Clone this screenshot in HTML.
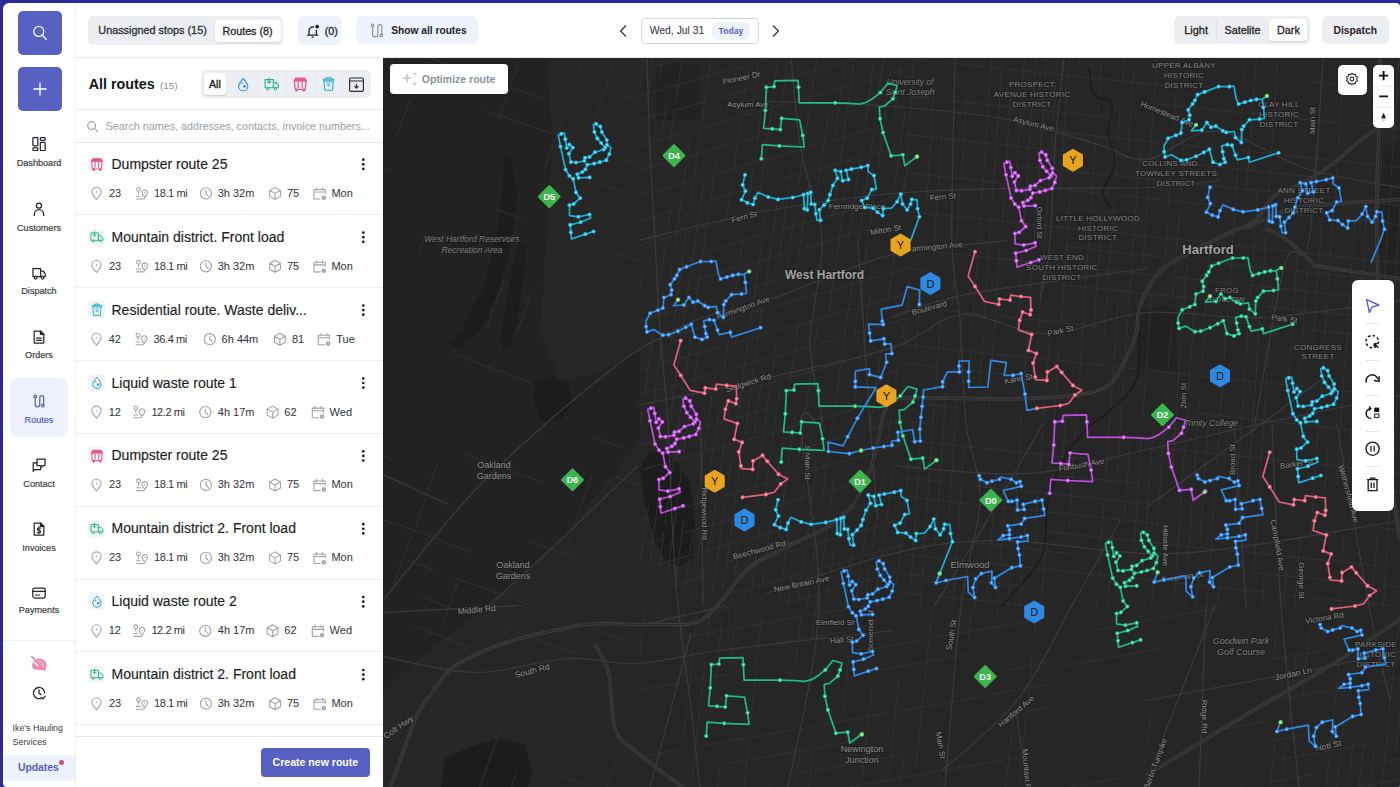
<!DOCTYPE html>
<html><head><meta charset="utf-8"><title>Routes</title>
<style>
html,body{margin:0;padding:0;width:1400px;height:787px;overflow:hidden;background:#2d2997;}
#app{position:absolute;left:2.6px;top:2.6px;width:1397.4px;height:784.4px;background:#fff;border-radius:6px 4px 2px 4px;overflow:hidden;}
#inner{position:absolute;left:-2.6px;top:-2.6px;width:1400px;height:787px;}
.t{position:absolute;white-space:nowrap;line-height:1;font-family:"Liberation Sans", sans-serif;}
.b{position:absolute;}
</style></head><body>
<div id="app"><div id="inner">
<div class="b" style="left:75.00px;top:0.00px;width:1.00px;height:787.00px;background:#eef0f3"></div>
<div class="b" style="left:17.50px;top:11.00px;width:44.00px;height:44.00px;background:#5661c2;border-radius:5px"></div>
<svg class="b" style="left:17.50px;top:11.00px;" width="44" height="44" viewBox="0 0 44 44"><circle cx="20.8" cy="20.4" r="5" fill="none" stroke="#fff" stroke-width="1.3"/><path d="M24.4 24.2 L28.2 28.2" stroke="#fff" stroke-width="1.4" stroke-linecap="round"/></svg>
<div class="b" style="left:17.50px;top:66.50px;width:44.00px;height:44.00px;background:#5661c2;border-radius:5px"></div>
<svg class="b" style="left:17.50px;top:66.50px;" width="44" height="44" viewBox="0 0 44 44"><path d="M22 15.5 V28.5 M15.5 22 H28.5" stroke="#fff" stroke-width="1.3"/></svg>
<svg class="b" style="left:31.80px;top:137.40px;" width="14" height="14" viewBox="0 0 14 14"><g fill="none" stroke="#23262b" stroke-width="1.25" stroke-linejoin="round" stroke-linecap="round"><rect x="0.9" y="0.7" width="4.9" height="8.2" rx="0.8" /><rect x="0.9" y="10.9" width="4.9" height="2.6" rx="0.8"/><rect x="8.3" y="0.7" width="4.9" height="2.6" rx="0.8"/><rect x="8.3" y="5.3" width="4.9" height="8.2" rx="0.8"/></g></svg>
<div class="t" style="left:3px;width:72px;text-align:center;top:159.30px;font-size:9.1px;-webkit-text-stroke:0.2px currentColor;color:#3a3d42">Dashboard</div>
<svg class="b" style="left:31.80px;top:202.00px;" width="14" height="14" viewBox="0 0 14 14"><g fill="none" stroke="#23262b" stroke-width="1.25" stroke-linejoin="round" stroke-linecap="round"><circle cx="7" cy="3.6" r="2.6"/><path d="M2.4 14 V12.3 A4.6 4.6 0 0 1 11.6 12.3 V14"/></g></svg>
<div class="t" style="left:3px;width:72px;text-align:center;top:223.60px;font-size:9.1px;-webkit-text-stroke:0.2px currentColor;color:#3a3d42">Customers</div>
<svg class="b" style="left:31.80px;top:265.50px;" width="14" height="14" viewBox="0 0 14 14"><g fill="none" stroke="#23262b" stroke-width="1.25" stroke-linejoin="round" stroke-linecap="round"><path d="M1 2.5 H8.6 V10.6 H1 Z M8.6 5 H11.2 L13.2 7.6 V10.6 H8.6"/><circle cx="3.6" cy="11.6" r="1.4" fill="#fff"/><circle cx="10.6" cy="11.6" r="1.4" fill="#fff"/></g></svg>
<div class="t" style="left:3px;width:72px;text-align:center;top:287.30px;font-size:9.1px;-webkit-text-stroke:0.2px currentColor;color:#3a3d42">Dispatch</div>
<svg class="b" style="left:31.80px;top:329.80px;" width="14" height="14" viewBox="0 0 14 14"><g fill="none" stroke="#23262b" stroke-width="1.25" stroke-linejoin="round" stroke-linecap="round"><path d="M2.2 1 H8.6 L11.8 4.2 V13 H2.2 Z"/><path d="M8.4 1 V4.4 H11.8" fill="#23262b"/><path d="M4.6 8 H9.4 M4.6 10.4 H9.4"/></g></svg>
<div class="t" style="left:3px;width:72px;text-align:center;top:351.30px;font-size:9.1px;-webkit-text-stroke:0.2px currentColor;color:#3a3d42">Orders</div>
<div class="b" style="left:10.00px;top:378.00px;width:58.00px;height:58.60px;background:#eef2fc;border-radius:8px"></div>
<svg class="b" style="left:31.80px;top:393.70px;" width="14" height="14" viewBox="0 0 14 14"><g fill="none" stroke="#5560c0" stroke-width="1.25" stroke-linejoin="round" stroke-linecap="round"><circle cx="3.2" cy="2.4" r="1.3"/><circle cx="10.8" cy="11.6" r="1.3"/><path d="M3.2 3.7 V10.6 A2.3 2.3 0 0 0 7.8 10.6 V3.4 A1.9 1.9 0 0 1 11.6 3.4 V10.3"/></g></svg>
<div class="t" style="left:3px;width:72px;text-align:center;top:415.90px;font-size:9.1px;-webkit-text-stroke:0.2px currentColor;color:#5560c0">Routes</div>
<svg class="b" style="left:31.80px;top:458.00px;" width="14" height="14" viewBox="0 0 14 14"><g fill="none" stroke="#23262b" stroke-width="1.25" stroke-linejoin="round" stroke-linecap="round"><path d="M5 1 H13 V7.6 H11 L9.2 9.2 V7.6 H5 Z" /><path d="M5 4.8 H1.2 V11.6 V13.2 L3.2 11.6 H8.6 V9.4"/></g></svg>
<div class="t" style="left:3px;width:72px;text-align:center;top:480.30px;font-size:9.1px;-webkit-text-stroke:0.2px currentColor;color:#3a3d42">Contact</div>
<svg class="b" style="left:31.80px;top:522.00px;" width="14" height="14" viewBox="0 0 14 14"><g fill="none" stroke="#23262b" stroke-width="1.25" stroke-linejoin="round" stroke-linecap="round"><path d="M2.2 1 H8.6 L11.8 4.2 V13 H2.2 Z"/><path d="M8.4 1 V4.4 H11.8" fill="#23262b"/><path d="M8.6 6.2 C7.6 5.4 5.2 5.6 5.4 7.1 C5.6 8.6 8.8 8 8.6 9.8 C8.4 11.2 6 11.3 5.2 10.4 M7 4.8 V11.8" stroke-width="1.1"/></g></svg>
<div class="t" style="left:3px;width:72px;text-align:center;top:543.60px;font-size:9.1px;-webkit-text-stroke:0.2px currentColor;color:#3a3d42">Invoices</div>
<svg class="b" style="left:31.80px;top:585.70px;" width="14" height="14" viewBox="0 0 14 14"><g fill="none" stroke="#23262b" stroke-width="1.25" stroke-linejoin="round" stroke-linecap="round"><rect x="0.8" y="2" width="12.4" height="10" rx="2"/><path d="M0.8 5.4 H13.2 M3.4 9 H5 M6.6 9 H7.4"/></g></svg>
<div class="t" style="left:3px;width:72px;text-align:center;top:605.90px;font-size:9.1px;-webkit-text-stroke:0.2px currentColor;color:#3a3d42">Payments</div>
<div class="b" style="left:3.00px;top:639.50px;width:72.00px;height:1.50px;background:#eceff3"></div>
<svg class="b" style="left:29.00px;top:654.00px;" width="20" height="20" viewBox="0 0 20 20"><path d="M4.2 15.2 A7.2 7.2 0 1 1 15.8 16.4 Z" fill="#eb8db1"/><path d="M5 8 L9 12" stroke="#fff" stroke-width="1.2"/><path d="M6 8.6 A5 5 0 0 1 14.6 12.6 M7.8 10.8 A3 3 0 0 1 12.6 13.2" fill="none" stroke="#f8d3e1" stroke-width="0.8"/><path d="M3 3 L16.4 16.6" stroke="#fff" stroke-width="1.6"/><path d="M2.6 2.4 L16 16.4" stroke="#e2558a" stroke-width="1.1" stroke-linecap="round"/></svg>
<svg class="b" style="left:31.50px;top:686.00px;" width="14" height="14" viewBox="0 0 14 14"><g fill="none" stroke="#23262b" stroke-width="1.3" stroke-linecap="round"><path d="M12.6 7 A5.6 5.6 0 1 0 9.2 12.2"/><path d="M7 3.8 V7.2 L9 8.6"/><path d="M9.8 11.6 L11 12.8 L13 10.4"/></g></svg>
<div class="t" style="left:12.60px;top:723.71px;font-size:8.85px;color:#3a3d42;font-weight:400;">Ike&#39;s Hauling</div>
<div class="t" style="left:12.60px;top:737.71px;font-size:8.85px;color:#3a3d42;font-weight:400;">Services</div>
<div class="b" style="left:4.00px;top:754.50px;width:71.00px;height:26.50px;background:#eef2fc"></div>
<div class="t" style="left:17.90px;top:763.20px;font-size:10.4px;color:#5560c0;font-weight:700;">Updates</div>
<div class="b" style="left:58.80px;top:760.10px;width:5.00px;height:5.00px;background:#e24a7c;border-radius:50%"></div>
<div class="b" style="left:76.00px;top:56.60px;width:1324.00px;height:1.20px;background:#e4e7eb"></div>
<div class="b" style="left:88.20px;top:16.40px;width:195.00px;height:28.60px;background:#eceef1;border-radius:5px"></div>
<div class="b" style="left:214.90px;top:19.60px;width:65.90px;height:22.40px;background:#fff;border-radius:4px;box-shadow:0 1px 1.5px rgba(0,0,0,0.12)"></div>
<div class="t" style="left:98.30px;top:25.42px;font-size:10.85px;color:#2b2e33;font-weight:400;-webkit-text-stroke:0.3px currentColor">Unassigned stops (15)</div>
<div class="t" style="left:222.60px;top:25.54px;font-size:10.7px;color:#1f2227;font-weight:400;-webkit-text-stroke:0.3px currentColor">Routes (8)</div>
<div class="b" style="left:298.00px;top:16.30px;width:43.30px;height:28.70px;background:#eef2fc;border-radius:5px"></div>
<svg class="b" style="left:305.00px;top:23.00px;" width="16" height="16" viewBox="0 0 16 16"><g fill="none" stroke="#1f2227" stroke-width="1.3" stroke-linecap="round"><path d="M2.6 12.2 H12.6 M4 12.2 V7.6 A3.7 3.7 0 0 1 8.6 4 M11.4 7.4 V12.2"/><path d="M7.2 14.2 H8.2"/></g><circle cx="12.2" cy="3.6" r="1.9" fill="#1f2227"/></svg>
<div class="t" style="left:324.80px;top:25.54px;font-size:10.7px;color:#1f2227;font-weight:400;-webkit-text-stroke:0.3px currentColor">(0)</div>
<div class="b" style="left:356.30px;top:15.70px;width:122.10px;height:28.30px;background:#eef2fc;border-radius:5px"></div>
<svg class="b" style="left:369.50px;top:22.50px;" width="14" height="15" viewBox="0 0 14 15"><g fill="none" stroke="#8c9097" stroke-width="1.15"><circle cx="2.6" cy="2.4" r="1.3"/><circle cx="11.2" cy="12.4" r="1.3"/><path d="M2.6 3.7 V11.2 A2.6 2.6 0 0 0 7.8 11.2 V3.6 A2 2 0 0 1 11.8 3.6 V11.1" stroke-linecap="round"/></g></svg>
<div class="t" style="left:391.30px;top:25.67px;font-size:10.2px;color:#1f2227;font-weight:700;">Show all routes</div>
<svg class="b" style="left:617.00px;top:24.00px;" width="12" height="14" viewBox="0 0 12 14"><path d="M9 1.6 L3.6 7 L9 12.4" fill="none" stroke="#3a3d42" stroke-width="1.4"/></svg>
<div class="b" style="left:641.40px;top:17.90px;width:117.20px;height:26.00px;border:1.3px solid #d3d8de;border-radius:4px;box-sizing:border-box"></div>
<div class="t" style="left:649.70px;top:25.90px;font-size:10.4px;color:#2b2e33;font-weight:400;">Wed, Jul 31</div>
<div class="b" style="left:712.00px;top:22.00px;width:38.00px;height:17.60px;background:#eef2fc;border-radius:5px"></div>
<div class="t" style="left:718.60px;top:27.02px;font-size:8.6px;color:#5560c0;font-weight:700;">Today</div>
<svg class="b" style="left:770.00px;top:24.00px;" width="12" height="14" viewBox="0 0 12 14"><path d="M3 1.6 L8.4 7 L3 12.4" fill="none" stroke="#3a3d42" stroke-width="1.4"/></svg>
<div class="b" style="left:1174.00px;top:15.60px;width:136.00px;height:28.80px;background:#eceef1;border-radius:5px"></div>
<div class="b" style="left:1216.20px;top:20.00px;width:1.00px;height:20.00px;background:#dfe2e6"></div>
<div class="b" style="left:1269.40px;top:19.00px;width:37.60px;height:22.30px;background:#fff;border-radius:4px;box-shadow:0 1px 1.5px rgba(0,0,0,0.12)"></div>
<div class="t" style="left:1184.30px;top:24.97px;font-size:10.9px;color:#1f2227;font-weight:400;-webkit-text-stroke:0.3px currentColor">Light</div>
<div class="t" style="left:1224.60px;top:25.10px;font-size:10.75px;color:#1f2227;font-weight:400;-webkit-text-stroke:0.3px currentColor">Satelite</div>
<div class="t" style="left:1277.00px;top:25.06px;font-size:10.8px;color:#1f2227;font-weight:400;-webkit-text-stroke:0.3px currentColor">Dark</div>
<div class="b" style="left:1322.00px;top:15.60px;width:67.00px;height:28.80px;background:#eceef1;border-radius:5px"></div>
<div class="t" style="left:1333.50px;top:26.08px;font-size:10.3px;color:#1f2227;font-weight:700;">Dispatch</div>
<div class="t" style="left:88.70px;top:77.10px;font-size:14.3px;color:#15171a;font-weight:700;">All routes</div>
<div class="t" style="left:160.00px;top:81.30px;font-size:9.8px;color:#8a8e95;font-weight:400;">(15)</div>
<div class="b" style="left:201.10px;top:69.50px;width:169.60px;height:28.50px;background:#eceef1;border-radius:5px"></div>
<div class="b" style="left:204.20px;top:72.90px;width:21.80px;height:22.10px;background:#fff;border-radius:4px;box-shadow:0 1px 1.5px rgba(0,0,0,0.14)"></div>
<div class="t" style="left:209.00px;top:79.33px;font-size:10.6px;color:#15171a;font-weight:400;-webkit-text-stroke:0.35px #15171a">All</div>
<div class="b" style="left:257.40px;top:73.00px;width:0.80px;height:22.00px;background:#e3e6ea"></div>
<div class="b" style="left:286.00px;top:73.00px;width:0.80px;height:22.00px;background:#e3e6ea"></div>
<div class="b" style="left:314.50px;top:73.00px;width:0.80px;height:22.00px;background:#e3e6ea"></div>
<div class="b" style="left:342.00px;top:73.00px;width:0.80px;height:22.00px;background:#e3e6ea"></div>
<svg class="b" style="left:0.00px;top:0.00px;pointer-events:none" width="400" height="120" viewBox="0 0 400 120"><g transform="translate(243.2,84.6) scale(1.0)" fill="none" stroke="#2f8fe0" stroke-width="1.1"><path d="M0 -6.2 C2.5 -3.2 4.6 -0.8 4.6 1.6 A4.6 4.6 0 0 1 -4.6 1.6 C-4.6 -0.8 -2.5 -3.2 0 -6.2 Z"/><rect x="0" y="0.6" width="2.6" height="2.4" fill="#2f8fe0" stroke="none"/><circle cx="-1.4" cy="-1.2" r="0.8" fill="#2f8fe0" stroke="none"/></g><g transform="translate(271.7,84.2) scale(1.0)" fill="none" stroke="#20b486" stroke-width="1.1" stroke-linejoin="round"><path d="M-6.6 -4.6 H1.6 V3.6 H-6.6 Z M1.6 -1.6 H4.4 L6.6 1 V3.6 H1.6"/><path d="M-2.6 -6.4 V-1 M-4.4 -2.8 L-2.6 -1 L-0.8 -2.8"/><circle cx="-4" cy="4.4" r="1.1" fill="#fff"/><circle cx="3.8" cy="4.4" r="1.1" fill="#fff"/></g><g transform="translate(300.2,84) scale(1.0)" fill="none" stroke="#e45a8c" stroke-width="1.2" stroke-linejoin="round"><path d="M-6 -3.4 H6 L5 5.4 H-5 Z"/><path d="M-5.8 -3.2 L-4.6 -6 H4.6 L5.8 -3.2 Z" fill="#e45a8c"/><path d="M-2 -2.4 V4 M2 -2.4 V4"/><circle cx="-3.6" cy="6" r="0.9" fill="#e45a8c"/><circle cx="3.6" cy="6" r="0.9" fill="#e45a8c"/></g><g transform="translate(328.6,84.3) scale(1.0)" fill="none" stroke="#1fb0d0" stroke-width="1.1" stroke-linejoin="round"><path d="M-4.6 -3.4 H4.6 L3.8 6 H-3.8 Z"/><path d="M-5.2 -3.4 V-5 H5.2 V-3.4 M-3 -5 L-2.4 -6.6 H2.4 L3 -5"/><path d="M-1.2 1.6 L0 0 L1.2 1.6 Z" stroke-width="0.8"/><path d="M-2.4 -1.2 H2.4" stroke-width="0.8"/></g><g transform="translate(356.5,84.6) scale(1.0)" fill="none" stroke="#2b2e33" stroke-width="1.2" stroke-linejoin="round"><rect x="-6.9" y="-6.6" width="13.8" height="13.4" rx="1.4"/><path d="M-6.9 -3.6 H6.9" /><path d="M0 -0.6 V3.6 M-2 1.6 L0 3.6 L2 1.6"/></g></svg>
<div class="b" style="left:76.00px;top:109.00px;width:307.00px;height:1.20px;background:#e6e9ed"></div>
<svg class="b" style="left:86.00px;top:120.00px;" width="14" height="14" viewBox="0 0 14 14"><g fill="none" stroke="#9a9ea5" stroke-width="1.2"><circle cx="5.6" cy="5.6" r="3.9"/><path d="M8.4 8.4 L11.4 11.4" stroke-linecap="round"/></g></svg>
<div class="t" style="left:105.70px;top:120.90px;font-size:10.75px;color:#9a9ea5;font-weight:400;">Search names, addresses, contacts, invoice numbers...</div>
<div class="b" style="left:76.00px;top:141.80px;width:307.00px;height:1.20px;background:#e2e6ea"></div>
<div class="b" style="left:88.20px;top:155.60px;width:17.00px;height:17.00px;background:#f3f5f8;border-radius:4px"></div>
<div class="t" style="left:111.50px;top:156.85px;font-size:14px;color:#1b1d21;font-weight:400;-webkit-text-stroke:0.15px #1b1d21">Dumpster route 25</div>
<div class="t" style="left:109.00px;top:187.89px;font-size:11px;color:#2f3237;font-weight:400;">23</div>
<div class="t" style="left:154.00px;top:187.89px;font-size:11px;color:#2f3237;font-weight:400;letter-spacing:-0.4px">18.1 mi</div>
<div class="t" style="left:217.70px;top:187.89px;font-size:11px;color:#2f3237;font-weight:400;">3h 32m</div>
<div class="t" style="left:287.00px;top:187.89px;font-size:11px;color:#2f3237;font-weight:400;">75</div>
<div class="t" style="left:331.40px;top:187.89px;font-size:11px;color:#2f3237;font-weight:400;">Mon</div>
<div class="b" style="left:76.00px;top:214.00px;width:307.00px;height:1.00px;background:#eef0f3"></div>
<div class="b" style="left:88.20px;top:228.50px;width:17.00px;height:17.00px;background:#f3f5f8;border-radius:4px"></div>
<div class="t" style="left:111.50px;top:229.75px;font-size:14px;color:#1b1d21;font-weight:400;-webkit-text-stroke:0.15px #1b1d21">Mountain district. Front load</div>
<div class="t" style="left:109.00px;top:260.79px;font-size:11px;color:#2f3237;font-weight:400;">23</div>
<div class="t" style="left:154.00px;top:260.79px;font-size:11px;color:#2f3237;font-weight:400;letter-spacing:-0.4px">18.1 mi</div>
<div class="t" style="left:217.70px;top:260.79px;font-size:11px;color:#2f3237;font-weight:400;">3h 32m</div>
<div class="t" style="left:287.00px;top:260.79px;font-size:11px;color:#2f3237;font-weight:400;">75</div>
<div class="t" style="left:331.40px;top:260.79px;font-size:11px;color:#2f3237;font-weight:400;">Mon</div>
<div class="b" style="left:76.00px;top:286.90px;width:307.00px;height:1.00px;background:#eef0f3"></div>
<div class="b" style="left:88.20px;top:301.40px;width:17.00px;height:17.00px;background:#f3f5f8;border-radius:4px"></div>
<div class="t" style="left:111.50px;top:302.65px;font-size:14px;color:#1b1d21;font-weight:400;-webkit-text-stroke:0.15px #1b1d21">Residential route. Waste deliv...</div>
<div class="t" style="left:108.70px;top:333.69px;font-size:11px;color:#2f3237;font-weight:400;">42</div>
<div class="t" style="left:153.60px;top:333.69px;font-size:11px;color:#2f3237;font-weight:400;letter-spacing:-0.4px">36.4 mi</div>
<div class="t" style="left:221.60px;top:333.69px;font-size:11px;color:#2f3237;font-weight:400;">6h 44m</div>
<div class="t" style="left:292.00px;top:333.69px;font-size:11px;color:#2f3237;font-weight:400;">81</div>
<div class="t" style="left:336.30px;top:333.69px;font-size:11px;color:#2f3237;font-weight:400;">Tue</div>
<div class="b" style="left:76.00px;top:359.80px;width:307.00px;height:1.00px;background:#eef0f3"></div>
<div class="b" style="left:88.20px;top:374.30px;width:17.00px;height:17.00px;background:#f3f5f8;border-radius:4px"></div>
<div class="t" style="left:111.50px;top:375.55px;font-size:14px;color:#1b1d21;font-weight:400;-webkit-text-stroke:0.15px #1b1d21">Liquid waste route 1</div>
<div class="t" style="left:108.70px;top:406.59px;font-size:11px;color:#2f3237;font-weight:400;">12</div>
<div class="t" style="left:151.40px;top:406.59px;font-size:11px;color:#2f3237;font-weight:400;letter-spacing:-0.4px">12.2 mi</div>
<div class="t" style="left:217.80px;top:406.59px;font-size:11px;color:#2f3237;font-weight:400;">4h 17m</div>
<div class="t" style="left:284.30px;top:406.59px;font-size:11px;color:#2f3237;font-weight:400;">62</div>
<div class="t" style="left:329.60px;top:406.59px;font-size:11px;color:#2f3237;font-weight:400;">Wed</div>
<div class="b" style="left:76.00px;top:432.70px;width:307.00px;height:1.00px;background:#eef0f3"></div>
<div class="b" style="left:88.20px;top:447.20px;width:17.00px;height:17.00px;background:#f3f5f8;border-radius:4px"></div>
<div class="t" style="left:111.50px;top:448.45px;font-size:14px;color:#1b1d21;font-weight:400;-webkit-text-stroke:0.15px #1b1d21">Dumpster route 25</div>
<div class="t" style="left:109.00px;top:479.49px;font-size:11px;color:#2f3237;font-weight:400;">23</div>
<div class="t" style="left:154.00px;top:479.49px;font-size:11px;color:#2f3237;font-weight:400;letter-spacing:-0.4px">18.1 mi</div>
<div class="t" style="left:217.70px;top:479.49px;font-size:11px;color:#2f3237;font-weight:400;">3h 32m</div>
<div class="t" style="left:287.00px;top:479.49px;font-size:11px;color:#2f3237;font-weight:400;">75</div>
<div class="t" style="left:331.40px;top:479.49px;font-size:11px;color:#2f3237;font-weight:400;">Mon</div>
<div class="b" style="left:76.00px;top:505.60px;width:307.00px;height:1.00px;background:#eef0f3"></div>
<div class="b" style="left:88.20px;top:520.10px;width:17.00px;height:17.00px;background:#f3f5f8;border-radius:4px"></div>
<div class="t" style="left:111.50px;top:521.35px;font-size:14px;color:#1b1d21;font-weight:400;-webkit-text-stroke:0.15px #1b1d21">Mountain district 2. Front load</div>
<div class="t" style="left:109.00px;top:552.39px;font-size:11px;color:#2f3237;font-weight:400;">23</div>
<div class="t" style="left:154.00px;top:552.39px;font-size:11px;color:#2f3237;font-weight:400;letter-spacing:-0.4px">18.1 mi</div>
<div class="t" style="left:217.70px;top:552.39px;font-size:11px;color:#2f3237;font-weight:400;">3h 32m</div>
<div class="t" style="left:287.00px;top:552.39px;font-size:11px;color:#2f3237;font-weight:400;">75</div>
<div class="t" style="left:331.40px;top:552.39px;font-size:11px;color:#2f3237;font-weight:400;">Mon</div>
<div class="b" style="left:76.00px;top:578.50px;width:307.00px;height:1.00px;background:#eef0f3"></div>
<div class="b" style="left:88.20px;top:593.00px;width:17.00px;height:17.00px;background:#f3f5f8;border-radius:4px"></div>
<div class="t" style="left:111.50px;top:594.25px;font-size:14px;color:#1b1d21;font-weight:400;-webkit-text-stroke:0.15px #1b1d21">Liquid waste route 2</div>
<div class="t" style="left:108.70px;top:625.29px;font-size:11px;color:#2f3237;font-weight:400;">12</div>
<div class="t" style="left:151.40px;top:625.29px;font-size:11px;color:#2f3237;font-weight:400;letter-spacing:-0.4px">12.2 mi</div>
<div class="t" style="left:217.80px;top:625.29px;font-size:11px;color:#2f3237;font-weight:400;">4h 17m</div>
<div class="t" style="left:284.30px;top:625.29px;font-size:11px;color:#2f3237;font-weight:400;">62</div>
<div class="t" style="left:329.60px;top:625.29px;font-size:11px;color:#2f3237;font-weight:400;">Wed</div>
<div class="b" style="left:76.00px;top:651.40px;width:307.00px;height:1.00px;background:#eef0f3"></div>
<div class="b" style="left:88.20px;top:665.90px;width:17.00px;height:17.00px;background:#f3f5f8;border-radius:4px"></div>
<div class="t" style="left:111.50px;top:667.15px;font-size:14px;color:#1b1d21;font-weight:400;-webkit-text-stroke:0.15px #1b1d21">Mountain district 2. Front load</div>
<div class="t" style="left:109.00px;top:698.19px;font-size:11px;color:#2f3237;font-weight:400;">23</div>
<div class="t" style="left:154.00px;top:698.19px;font-size:11px;color:#2f3237;font-weight:400;letter-spacing:-0.4px">18.1 mi</div>
<div class="t" style="left:217.70px;top:698.19px;font-size:11px;color:#2f3237;font-weight:400;">3h 32m</div>
<div class="t" style="left:287.00px;top:698.19px;font-size:11px;color:#2f3237;font-weight:400;">75</div>
<div class="t" style="left:331.40px;top:698.19px;font-size:11px;color:#2f3237;font-weight:400;">Mon</div>
<svg class="b" style="left:0.00px;top:0.00px;pointer-events:none" width="400" height="787" viewBox="0 0 400 787"><g transform="translate(96.9,164.20000000000002) scale(0.9)" fill="none" stroke="#e45a8c" stroke-width="1.2" stroke-linejoin="round"><path d="M-6 -3.4 H6 L5 5.4 H-5 Z"/><path d="M-5.8 -3.2 L-4.6 -6 H4.6 L5.8 -3.2 Z" fill="#e45a8c"/><path d="M-2 -2.4 V4 M2 -2.4 V4"/><circle cx="-3.6" cy="6" r="0.9" fill="#e45a8c"/><circle cx="3.6" cy="6" r="0.9" fill="#e45a8c"/></g><circle cx="363.3" cy="159.70" r="1.35" fill="#1b1d21"/><circle cx="363.3" cy="164.30" r="1.35" fill="#1b1d21"/><circle cx="363.3" cy="168.90" r="1.35" fill="#1b1d21"/><g transform="translate(96.5,193.4)" fill="none" stroke="#9da2a9" stroke-width="1.1"><path d="M0 6 C-2.6 3.2 -4.6 0.8 -4.6 -1.4 A4.6 4.6 0 0 1 4.6 -1.4 C4.6 0.8 2.6 3.2 0 6 Z"/><circle cx="0" cy="-1.4" r="0.8" fill="#9da2a9" stroke="none"/></g><g transform="translate(141.7,193.4)" fill="none" stroke="#9da2a9" stroke-width="1.05"><circle cx="-3.2" cy="-4" r="1.9"/><path d="M-3.2 -2.1 V1"/><path d="M3 4.2 C1.4 2.4 0.2 1 0.2 -0.6 A2.8 2.8 0 0 1 5.8 -0.6 C5.8 1 4.6 2.4 3 4.2 Z"/><circle cx="3" cy="-0.6" r="0.7" fill="#9da2a9" stroke="none"/><path d="M-5.6 2.8 H-1 M-5.6 5.6 H3"/></g><g transform="translate(205.9,193.4)" fill="none" stroke="#9da2a9" stroke-width="1.1"><circle r="5.6"/><path d="M0 -3.4 V0 L2.4 2.4" stroke-linecap="round"/></g><g transform="translate(275.1,193.4)" fill="none" stroke="#9da2a9" stroke-width="1.05" stroke-linejoin="round"><path d="M0 -6 L5.4 -3 V3 L0 6 L-5.4 3 V-3 Z M-5.4 -3 L0 0 L5.4 -3 M0 0 V6"/></g><g transform="translate(319.59999999999997,193.4)" fill="none" stroke="#9da2a9" stroke-width="1.05"><path d="M1 5.6 H-5.6 V-4 H5.6 V0.6"/><path d="M-5.6 -1.4 H5.6 M-3 -6 V-3 M3 -6 V-3"/><circle cx="4.2" cy="4.4" r="2.3" fill="#9da2a9" stroke="none"/><path d="M4.2 3.4 V4.6 H5" stroke="#fff" stroke-width="0.6"/></g><g transform="translate(96.9,237.10000000000002) scale(0.9)" fill="none" stroke="#20b486" stroke-width="1.1" stroke-linejoin="round"><path d="M-6.6 -4.6 H1.6 V3.6 H-6.6 Z M1.6 -1.6 H4.4 L6.6 1 V3.6 H1.6"/><path d="M-2.6 -6.4 V-1 M-4.4 -2.8 L-2.6 -1 L-0.8 -2.8"/><circle cx="-4" cy="4.4" r="1.1" fill="#fff"/><circle cx="3.8" cy="4.4" r="1.1" fill="#fff"/></g><circle cx="363.3" cy="232.60" r="1.35" fill="#1b1d21"/><circle cx="363.3" cy="237.20" r="1.35" fill="#1b1d21"/><circle cx="363.3" cy="241.80" r="1.35" fill="#1b1d21"/><g transform="translate(96.5,266.3)" fill="none" stroke="#9da2a9" stroke-width="1.1"><path d="M0 6 C-2.6 3.2 -4.6 0.8 -4.6 -1.4 A4.6 4.6 0 0 1 4.6 -1.4 C4.6 0.8 2.6 3.2 0 6 Z"/><circle cx="0" cy="-1.4" r="0.8" fill="#9da2a9" stroke="none"/></g><g transform="translate(141.7,266.3)" fill="none" stroke="#9da2a9" stroke-width="1.05"><circle cx="-3.2" cy="-4" r="1.9"/><path d="M-3.2 -2.1 V1"/><path d="M3 4.2 C1.4 2.4 0.2 1 0.2 -0.6 A2.8 2.8 0 0 1 5.8 -0.6 C5.8 1 4.6 2.4 3 4.2 Z"/><circle cx="3" cy="-0.6" r="0.7" fill="#9da2a9" stroke="none"/><path d="M-5.6 2.8 H-1 M-5.6 5.6 H3"/></g><g transform="translate(205.9,266.3)" fill="none" stroke="#9da2a9" stroke-width="1.1"><circle r="5.6"/><path d="M0 -3.4 V0 L2.4 2.4" stroke-linecap="round"/></g><g transform="translate(275.1,266.3)" fill="none" stroke="#9da2a9" stroke-width="1.05" stroke-linejoin="round"><path d="M0 -6 L5.4 -3 V3 L0 6 L-5.4 3 V-3 Z M-5.4 -3 L0 0 L5.4 -3 M0 0 V6"/></g><g transform="translate(319.59999999999997,266.3)" fill="none" stroke="#9da2a9" stroke-width="1.05"><path d="M1 5.6 H-5.6 V-4 H5.6 V0.6"/><path d="M-5.6 -1.4 H5.6 M-3 -6 V-3 M3 -6 V-3"/><circle cx="4.2" cy="4.4" r="2.3" fill="#9da2a9" stroke="none"/><path d="M4.2 3.4 V4.6 H5" stroke="#fff" stroke-width="0.6"/></g><g transform="translate(96.9,310.00000000000006) scale(0.9)" fill="none" stroke="#1fb0d0" stroke-width="1.1" stroke-linejoin="round"><path d="M-4.6 -3.4 H4.6 L3.8 6 H-3.8 Z"/><path d="M-5.2 -3.4 V-5 H5.2 V-3.4 M-3 -5 L-2.4 -6.6 H2.4 L3 -5"/><path d="M-1.2 1.6 L0 0 L1.2 1.6 Z" stroke-width="0.8"/><path d="M-2.4 -1.2 H2.4" stroke-width="0.8"/></g><circle cx="363.3" cy="305.50" r="1.35" fill="#1b1d21"/><circle cx="363.3" cy="310.10" r="1.35" fill="#1b1d21"/><circle cx="363.3" cy="314.70" r="1.35" fill="#1b1d21"/><g transform="translate(96.5,339.20000000000005)" fill="none" stroke="#9da2a9" stroke-width="1.1"><path d="M0 6 C-2.6 3.2 -4.6 0.8 -4.6 -1.4 A4.6 4.6 0 0 1 4.6 -1.4 C4.6 0.8 2.6 3.2 0 6 Z"/><circle cx="0" cy="-1.4" r="0.8" fill="#9da2a9" stroke="none"/></g><g transform="translate(141.2,339.20000000000005)" fill="none" stroke="#9da2a9" stroke-width="1.05"><circle cx="-3.2" cy="-4" r="1.9"/><path d="M-3.2 -2.1 V1"/><path d="M3 4.2 C1.4 2.4 0.2 1 0.2 -0.6 A2.8 2.8 0 0 1 5.8 -0.6 C5.8 1 4.6 2.4 3 4.2 Z"/><circle cx="3" cy="-0.6" r="0.7" fill="#9da2a9" stroke="none"/><path d="M-5.6 2.8 H-1 M-5.6 5.6 H3"/></g><g transform="translate(209.8,339.20000000000005)" fill="none" stroke="#9da2a9" stroke-width="1.1"><circle r="5.6"/><path d="M0 -3.4 V0 L2.4 2.4" stroke-linecap="round"/></g><g transform="translate(279.90000000000003,339.20000000000005)" fill="none" stroke="#9da2a9" stroke-width="1.05" stroke-linejoin="round"><path d="M0 -6 L5.4 -3 V3 L0 6 L-5.4 3 V-3 Z M-5.4 -3 L0 0 L5.4 -3 M0 0 V6"/></g><g transform="translate(323.9,339.20000000000005)" fill="none" stroke="#9da2a9" stroke-width="1.05"><path d="M1 5.6 H-5.6 V-4 H5.6 V0.6"/><path d="M-5.6 -1.4 H5.6 M-3 -6 V-3 M3 -6 V-3"/><circle cx="4.2" cy="4.4" r="2.3" fill="#9da2a9" stroke="none"/><path d="M4.2 3.4 V4.6 H5" stroke="#fff" stroke-width="0.6"/></g><g transform="translate(96.9,382.90000000000003) scale(0.9)" fill="none" stroke="#2f8fe0" stroke-width="1.1"><path d="M0 -6.2 C2.5 -3.2 4.6 -0.8 4.6 1.6 A4.6 4.6 0 0 1 -4.6 1.6 C-4.6 -0.8 -2.5 -3.2 0 -6.2 Z"/><rect x="0" y="0.6" width="2.6" height="2.4" fill="#2f8fe0" stroke="none"/><circle cx="-1.4" cy="-1.2" r="0.8" fill="#2f8fe0" stroke="none"/></g><circle cx="363.3" cy="378.40" r="1.35" fill="#1b1d21"/><circle cx="363.3" cy="383.00" r="1.35" fill="#1b1d21"/><circle cx="363.3" cy="387.60" r="1.35" fill="#1b1d21"/><g transform="translate(96.5,412.1)" fill="none" stroke="#9da2a9" stroke-width="1.1"><path d="M0 6 C-2.6 3.2 -4.6 0.8 -4.6 -1.4 A4.6 4.6 0 0 1 4.6 -1.4 C4.6 0.8 2.6 3.2 0 6 Z"/><circle cx="0" cy="-1.4" r="0.8" fill="#9da2a9" stroke="none"/></g><g transform="translate(139,412.1)" fill="none" stroke="#9da2a9" stroke-width="1.05"><circle cx="-3.2" cy="-4" r="1.9"/><path d="M-3.2 -2.1 V1"/><path d="M3 4.2 C1.4 2.4 0.2 1 0.2 -0.6 A2.8 2.8 0 0 1 5.8 -0.6 C5.8 1 4.6 2.4 3 4.2 Z"/><circle cx="3" cy="-0.6" r="0.7" fill="#9da2a9" stroke="none"/><path d="M-5.6 2.8 H-1 M-5.6 5.6 H3"/></g><g transform="translate(205.3,412.1)" fill="none" stroke="#9da2a9" stroke-width="1.1"><circle r="5.6"/><path d="M0 -3.4 V0 L2.4 2.4" stroke-linecap="round"/></g><g transform="translate(272.6,412.1)" fill="none" stroke="#9da2a9" stroke-width="1.05" stroke-linejoin="round"><path d="M0 -6 L5.4 -3 V3 L0 6 L-5.4 3 V-3 Z M-5.4 -3 L0 0 L5.4 -3 M0 0 V6"/></g><g transform="translate(317.9,412.1)" fill="none" stroke="#9da2a9" stroke-width="1.05"><path d="M1 5.6 H-5.6 V-4 H5.6 V0.6"/><path d="M-5.6 -1.4 H5.6 M-3 -6 V-3 M3 -6 V-3"/><circle cx="4.2" cy="4.4" r="2.3" fill="#9da2a9" stroke="none"/><path d="M4.2 3.4 V4.6 H5" stroke="#fff" stroke-width="0.6"/></g><g transform="translate(96.9,455.8) scale(0.9)" fill="none" stroke="#e45a8c" stroke-width="1.2" stroke-linejoin="round"><path d="M-6 -3.4 H6 L5 5.4 H-5 Z"/><path d="M-5.8 -3.2 L-4.6 -6 H4.6 L5.8 -3.2 Z" fill="#e45a8c"/><path d="M-2 -2.4 V4 M2 -2.4 V4"/><circle cx="-3.6" cy="6" r="0.9" fill="#e45a8c"/><circle cx="3.6" cy="6" r="0.9" fill="#e45a8c"/></g><circle cx="363.3" cy="451.30" r="1.35" fill="#1b1d21"/><circle cx="363.3" cy="455.90" r="1.35" fill="#1b1d21"/><circle cx="363.3" cy="460.50" r="1.35" fill="#1b1d21"/><g transform="translate(96.5,485.0)" fill="none" stroke="#9da2a9" stroke-width="1.1"><path d="M0 6 C-2.6 3.2 -4.6 0.8 -4.6 -1.4 A4.6 4.6 0 0 1 4.6 -1.4 C4.6 0.8 2.6 3.2 0 6 Z"/><circle cx="0" cy="-1.4" r="0.8" fill="#9da2a9" stroke="none"/></g><g transform="translate(141.7,485.0)" fill="none" stroke="#9da2a9" stroke-width="1.05"><circle cx="-3.2" cy="-4" r="1.9"/><path d="M-3.2 -2.1 V1"/><path d="M3 4.2 C1.4 2.4 0.2 1 0.2 -0.6 A2.8 2.8 0 0 1 5.8 -0.6 C5.8 1 4.6 2.4 3 4.2 Z"/><circle cx="3" cy="-0.6" r="0.7" fill="#9da2a9" stroke="none"/><path d="M-5.6 2.8 H-1 M-5.6 5.6 H3"/></g><g transform="translate(205.9,485.0)" fill="none" stroke="#9da2a9" stroke-width="1.1"><circle r="5.6"/><path d="M0 -3.4 V0 L2.4 2.4" stroke-linecap="round"/></g><g transform="translate(275.1,485.0)" fill="none" stroke="#9da2a9" stroke-width="1.05" stroke-linejoin="round"><path d="M0 -6 L5.4 -3 V3 L0 6 L-5.4 3 V-3 Z M-5.4 -3 L0 0 L5.4 -3 M0 0 V6"/></g><g transform="translate(319.59999999999997,485.0)" fill="none" stroke="#9da2a9" stroke-width="1.05"><path d="M1 5.6 H-5.6 V-4 H5.6 V0.6"/><path d="M-5.6 -1.4 H5.6 M-3 -6 V-3 M3 -6 V-3"/><circle cx="4.2" cy="4.4" r="2.3" fill="#9da2a9" stroke="none"/><path d="M4.2 3.4 V4.6 H5" stroke="#fff" stroke-width="0.6"/></g><g transform="translate(96.9,528.6999999999999) scale(0.9)" fill="none" stroke="#20b486" stroke-width="1.1" stroke-linejoin="round"><path d="M-6.6 -4.6 H1.6 V3.6 H-6.6 Z M1.6 -1.6 H4.4 L6.6 1 V3.6 H1.6"/><path d="M-2.6 -6.4 V-1 M-4.4 -2.8 L-2.6 -1 L-0.8 -2.8"/><circle cx="-4" cy="4.4" r="1.1" fill="#fff"/><circle cx="3.8" cy="4.4" r="1.1" fill="#fff"/></g><circle cx="363.3" cy="524.20" r="1.35" fill="#1b1d21"/><circle cx="363.3" cy="528.80" r="1.35" fill="#1b1d21"/><circle cx="363.3" cy="533.40" r="1.35" fill="#1b1d21"/><g transform="translate(96.5,557.9)" fill="none" stroke="#9da2a9" stroke-width="1.1"><path d="M0 6 C-2.6 3.2 -4.6 0.8 -4.6 -1.4 A4.6 4.6 0 0 1 4.6 -1.4 C4.6 0.8 2.6 3.2 0 6 Z"/><circle cx="0" cy="-1.4" r="0.8" fill="#9da2a9" stroke="none"/></g><g transform="translate(141.7,557.9)" fill="none" stroke="#9da2a9" stroke-width="1.05"><circle cx="-3.2" cy="-4" r="1.9"/><path d="M-3.2 -2.1 V1"/><path d="M3 4.2 C1.4 2.4 0.2 1 0.2 -0.6 A2.8 2.8 0 0 1 5.8 -0.6 C5.8 1 4.6 2.4 3 4.2 Z"/><circle cx="3" cy="-0.6" r="0.7" fill="#9da2a9" stroke="none"/><path d="M-5.6 2.8 H-1 M-5.6 5.6 H3"/></g><g transform="translate(205.9,557.9)" fill="none" stroke="#9da2a9" stroke-width="1.1"><circle r="5.6"/><path d="M0 -3.4 V0 L2.4 2.4" stroke-linecap="round"/></g><g transform="translate(275.1,557.9)" fill="none" stroke="#9da2a9" stroke-width="1.05" stroke-linejoin="round"><path d="M0 -6 L5.4 -3 V3 L0 6 L-5.4 3 V-3 Z M-5.4 -3 L0 0 L5.4 -3 M0 0 V6"/></g><g transform="translate(319.59999999999997,557.9)" fill="none" stroke="#9da2a9" stroke-width="1.05"><path d="M1 5.6 H-5.6 V-4 H5.6 V0.6"/><path d="M-5.6 -1.4 H5.6 M-3 -6 V-3 M3 -6 V-3"/><circle cx="4.2" cy="4.4" r="2.3" fill="#9da2a9" stroke="none"/><path d="M4.2 3.4 V4.6 H5" stroke="#fff" stroke-width="0.6"/></g><g transform="translate(96.9,601.6) scale(0.9)" fill="none" stroke="#2f8fe0" stroke-width="1.1"><path d="M0 -6.2 C2.5 -3.2 4.6 -0.8 4.6 1.6 A4.6 4.6 0 0 1 -4.6 1.6 C-4.6 -0.8 -2.5 -3.2 0 -6.2 Z"/><rect x="0" y="0.6" width="2.6" height="2.4" fill="#2f8fe0" stroke="none"/><circle cx="-1.4" cy="-1.2" r="0.8" fill="#2f8fe0" stroke="none"/></g><circle cx="363.3" cy="597.10" r="1.35" fill="#1b1d21"/><circle cx="363.3" cy="601.70" r="1.35" fill="#1b1d21"/><circle cx="363.3" cy="606.30" r="1.35" fill="#1b1d21"/><g transform="translate(96.5,630.8000000000001)" fill="none" stroke="#9da2a9" stroke-width="1.1"><path d="M0 6 C-2.6 3.2 -4.6 0.8 -4.6 -1.4 A4.6 4.6 0 0 1 4.6 -1.4 C4.6 0.8 2.6 3.2 0 6 Z"/><circle cx="0" cy="-1.4" r="0.8" fill="#9da2a9" stroke="none"/></g><g transform="translate(139,630.8000000000001)" fill="none" stroke="#9da2a9" stroke-width="1.05"><circle cx="-3.2" cy="-4" r="1.9"/><path d="M-3.2 -2.1 V1"/><path d="M3 4.2 C1.4 2.4 0.2 1 0.2 -0.6 A2.8 2.8 0 0 1 5.8 -0.6 C5.8 1 4.6 2.4 3 4.2 Z"/><circle cx="3" cy="-0.6" r="0.7" fill="#9da2a9" stroke="none"/><path d="M-5.6 2.8 H-1 M-5.6 5.6 H3"/></g><g transform="translate(205.3,630.8000000000001)" fill="none" stroke="#9da2a9" stroke-width="1.1"><circle r="5.6"/><path d="M0 -3.4 V0 L2.4 2.4" stroke-linecap="round"/></g><g transform="translate(272.6,630.8000000000001)" fill="none" stroke="#9da2a9" stroke-width="1.05" stroke-linejoin="round"><path d="M0 -6 L5.4 -3 V3 L0 6 L-5.4 3 V-3 Z M-5.4 -3 L0 0 L5.4 -3 M0 0 V6"/></g><g transform="translate(317.9,630.8000000000001)" fill="none" stroke="#9da2a9" stroke-width="1.05"><path d="M1 5.6 H-5.6 V-4 H5.6 V0.6"/><path d="M-5.6 -1.4 H5.6 M-3 -6 V-3 M3 -6 V-3"/><circle cx="4.2" cy="4.4" r="2.3" fill="#9da2a9" stroke="none"/><path d="M4.2 3.4 V4.6 H5" stroke="#fff" stroke-width="0.6"/></g><g transform="translate(96.9,674.5) scale(0.9)" fill="none" stroke="#20b486" stroke-width="1.1" stroke-linejoin="round"><path d="M-6.6 -4.6 H1.6 V3.6 H-6.6 Z M1.6 -1.6 H4.4 L6.6 1 V3.6 H1.6"/><path d="M-2.6 -6.4 V-1 M-4.4 -2.8 L-2.6 -1 L-0.8 -2.8"/><circle cx="-4" cy="4.4" r="1.1" fill="#fff"/><circle cx="3.8" cy="4.4" r="1.1" fill="#fff"/></g><circle cx="363.3" cy="670.00" r="1.35" fill="#1b1d21"/><circle cx="363.3" cy="674.60" r="1.35" fill="#1b1d21"/><circle cx="363.3" cy="679.20" r="1.35" fill="#1b1d21"/><g transform="translate(96.5,703.7)" fill="none" stroke="#9da2a9" stroke-width="1.1"><path d="M0 6 C-2.6 3.2 -4.6 0.8 -4.6 -1.4 A4.6 4.6 0 0 1 4.6 -1.4 C4.6 0.8 2.6 3.2 0 6 Z"/><circle cx="0" cy="-1.4" r="0.8" fill="#9da2a9" stroke="none"/></g><g transform="translate(141.7,703.7)" fill="none" stroke="#9da2a9" stroke-width="1.05"><circle cx="-3.2" cy="-4" r="1.9"/><path d="M-3.2 -2.1 V1"/><path d="M3 4.2 C1.4 2.4 0.2 1 0.2 -0.6 A2.8 2.8 0 0 1 5.8 -0.6 C5.8 1 4.6 2.4 3 4.2 Z"/><circle cx="3" cy="-0.6" r="0.7" fill="#9da2a9" stroke="none"/><path d="M-5.6 2.8 H-1 M-5.6 5.6 H3"/></g><g transform="translate(205.9,703.7)" fill="none" stroke="#9da2a9" stroke-width="1.1"><circle r="5.6"/><path d="M0 -3.4 V0 L2.4 2.4" stroke-linecap="round"/></g><g transform="translate(275.1,703.7)" fill="none" stroke="#9da2a9" stroke-width="1.05" stroke-linejoin="round"><path d="M0 -6 L5.4 -3 V3 L0 6 L-5.4 3 V-3 Z M-5.4 -3 L0 0 L5.4 -3 M0 0 V6"/></g><g transform="translate(319.59999999999997,703.7)" fill="none" stroke="#9da2a9" stroke-width="1.05"><path d="M1 5.6 H-5.6 V-4 H5.6 V0.6"/><path d="M-5.6 -1.4 H5.6 M-3 -6 V-3 M3 -6 V-3"/><circle cx="4.2" cy="4.4" r="2.3" fill="#9da2a9" stroke="none"/><path d="M4.2 3.4 V4.6 H5" stroke="#fff" stroke-width="0.6"/></g></svg>
<div class="b" style="left:76.00px;top:724.00px;width:307.00px;height:1.00px;background:#eef0f3"></div>
<div class="b" style="left:76.00px;top:735.60px;width:307.00px;height:1.20px;background:#e2e6ea"></div>
<div class="b" style="left:260.60px;top:748.30px;width:109.20px;height:28.40px;background:#5560c0;border-radius:4px"></div>
<div class="t" style="left:272.60px;top:756.97px;font-size:10.55px;color:#ffffff;font-weight:700;">Create new route</div>
<svg class="b" style="left:383px;top:57.5px" width="1017" height="730" viewBox="383 57.5 1017 730">
<rect x="383" y="57.5" width="1017" height="730" fill="#272627"/>
<polygon points="383,57.5 548,57.5 552,150 545,260 540,330 560,380 600,372 640,350 640,440 560,540 488,606 430,650 383,690" fill="#232223"/>
<polygon points="656,64 701,64 701,120 656,120" fill="#232223"/>
<polygon points="1133,306 1175,306 1177,371 1140,371" fill="#232223"/>
<polygon points="1375,149 1400,140 1400,280 1380,278" fill="#232223"/>
<polygon points="505,152 512,160 517,195 514,230 506,265 497,295 480,330 460,348 450,345 466,320 482,290 492,255 499,220 502,185" fill="#1d1c1d"/>
<polygon points="519,240 526,245 523,280 518,315 510,345 503,352 500,340 506,305 512,270" fill="#1d1c1d"/>
<polygon points="535,380 552,376 570,384 572,405 560,420 540,420 533,400" fill="#1d1c1d"/>
<polygon points="648,452 662,449 675,460 690,480 695,520 692,560 680,566 665,560 655,540 645,505 640,470" fill="#1d1c1d"/>
<polygon points="441,787 445,758 470,746 500,738 525,744 532,770 528,787" fill="#1d1c1d"/>
<clipPath id="rg0"><path d="M640 57 H905 V606 H700 L640 560 Z"/></clipPath>
<path clip-path="url(#rg0)" d="M636 115L653 -10 M648 96L658 23 M660 77L679 -55 M631 352L643 266 M661 143L667 100 M666 172L675 108 M676 99L687 24 M632 483L642 411 M645 392L653 333 M653 331L671 206 M653 406L662 338 M665 320L672 266 M674 253L690 138 M628 649L649 502 M670 348L687 227 M690 206L711 57 M646 590L660 487 M663 466L681 342 M683 327L704 179 M650 630L664 531 M665 523L684 387 M686 370L691 338 M691 336L710 203 M711 197L716 160 M656 653L664 600 M665 591L682 467 M684 453L701 336 M671 613L684 520 M727 218L748 68 M680 622L693 531 M696 509L716 365 M751 116L758 63 M674 732L694 588 M697 564L719 408 M721 394L743 240 M745 226L755 156 M756 151L762 105 M706 572L710 540 M711 536L730 399 M756 218L773 98 M775 78L797 -78 M712 594L725 506 M728 484L743 376 M743 374L749 334 M749 332L765 219 M781 109L788 60 M723 591L741 457 M745 434L763 299 M764 296L777 204 M726 636L739 544 M754 433L763 368 M778 267L791 169 M756 487L776 346 M788 261L795 211 M798 188L818 49 M736 697L750 602 M751 596L760 526 M762 517L782 372 M795 281L810 175 M762 586L772 514 M775 493L785 420 M788 396L799 320 M817 190L829 108 M778 536L796 412 M835 133L855 -7 M779 599L790 522 M799 458L819 315 M832 219L844 137 M844 133L865 -14 M773 711L793 570 M801 508L814 418 M829 312L850 162 M798 602L817 466 M848 243L863 139 M865 126L884 -15 M804 627L817 530 M821 506L832 427 M833 422L854 267 M857 251L876 114 M878 96L888 30 M815 618L834 478 M854 339L863 274 M864 269L876 183 M878 169L887 100 M822 635L834 550 M855 398L870 295 M894 119L916 -38 M893 197L907 98 M840 645L852 554 M870 428L885 323 M886 315L899 222 M901 206L915 112 M854 611L869 508 M848 720L869 570 M872 549L884 468 M887 445L892 407 M893 403L899 356 M902 339L916 234 M875 600L893 472 M904 392L923 257 M881 690L893 606 M896 583L911 477 M906 649L920 547 M580 87L773 32 M634 97L802 49 M611 128L755 87 M760 86L932 36 M404 213L681 133 M700 128L828 91 M832 90L1100 13 M515 206L793 126 M623 200L878 127 M900 120L1123 56 M542 248L762 185 M779 180L902 145 M445 301L682 233 M688 231L754 212 M703 252L774 231 M780 230L918 190 M687 281L869 229 M430 380L717 298 M729 294L820 268 M480 391L764 309 M778 305L1014 237 M456 423L650 367 M658 364L772 332 M778 330L961 278 M464 445L725 370 M737 367L845 336 M855 333L1046 278 M748 389L1029 308 M633 447L773 407 M875 377L935 360 M643 469L863 406 M806 447L911 417 M531 551L646 518 M670 511L940 433 M501 584L663 538 M685 532L916 465 M571 589L818 518 M837 513L915 491 M651 591L898 520 M732 593L921 539 M755 612L832 589 M834 589L941 558 M783 628L1024 559 M851 659L1088 591" stroke="#333233" stroke-width="0.9" fill="none"/>
<clipPath id="rg1"><path d="M905 57 H1400 V606 H905 Z"/></clipPath>
<path clip-path="url(#rg1)" d="M899 275L910 123 M910 117L915 44 M899 434L904 362 M905 347L910 277 M903 540L909 449 M916 348L921 284 M926 212L935 80 M936 59L939 16 M911 581L921 434 M933 262L942 132 M914 687L924 555 M924 549L934 407 M935 394L941 313 M935 548L947 377 M952 305L955 267 M956 250L960 187 M961 179L967 91 M946 557L958 385 M958 382L962 316 M953 611L964 446 M969 387L971 347 M972 331L981 212 M981 202L984 171 M984 168L996 -5 M961 655L964 605 M965 594L967 564 M980 382L983 337 M984 323L991 216 M992 203L1004 34 M971 668L977 575 M989 409L1000 245 M1002 225L1012 79 M987 600L996 472 M1015 189L1022 92 M1022 90L1027 30 M992 687L1000 572 M1000 565L1006 478 M1017 329L1022 249 M1023 236L1032 106 M1033 97L1042 -33 M1008 607L1010 577 M1011 560L1017 485 M1017 482L1019 448 M1019 446L1022 413 M1023 400L1032 263 M1034 240L1045 84 M1045 81L1053 -32 M1018 630L1026 509 M1037 354L1040 316 M1040 305L1053 128 M1053 121L1056 81 M1057 72L1063 -20 M1035 542L1038 494 M1040 470L1050 330 M1059 203L1070 41 M1036 683L1046 533 M1051 468L1059 348 M1061 325L1071 180 M1079 65L1086 -37 M1062 465L1068 389 M1090 67L1095 -5 M1069 527L1077 408 M1078 404L1084 305 M1084 305L1096 136 M1098 112L1105 7 M1094 327L1102 210 M1104 335L1107 296 M1108 280L1114 200 M1115 177L1120 110 M1122 86L1131 -44 M1092 675L1097 597 M1098 582L1104 501 M1105 484L1118 304 M1128 150L1134 70 M1135 60L1145 -93 M1101 703L1113 534 M1117 475L1128 314 M1129 303L1140 148 M1124 523L1130 441 M1143 263L1149 174 M1150 159L1158 42 M1125 669L1130 599 M1132 578L1142 434 M1143 417L1151 294 M1165 102L1170 31 M1142 583L1154 420 M1164 271L1168 220 M1168 209L1176 97 M1178 75L1185 -27 M1144 719L1156 542 M1157 530L1167 388 M1168 370L1172 320 M1173 295L1180 207 M1181 193L1184 137 M1154 733L1163 594 M1173 464L1180 354 M1180 351L1187 264 M1199 81L1208 -47 M1164 738L1176 573 M1176 571L1188 402 M1188 395L1196 288 M1182 651L1193 491 M1193 490L1199 401 M1201 378L1210 243 M1195 617L1199 566 M1200 541L1208 425 M1205 638L1215 490 M1217 466L1226 332 M1227 324L1239 152 M1240 135L1242 105 M1243 92L1254 -68 M1214 658L1220 570 M1246 196L1252 117 M1252 115L1259 23 M1234 531L1245 370 M1246 359L1252 270 M1253 259L1255 228 M1256 217L1258 185 M1245 527L1254 399 M1255 395L1260 314 M1261 302L1271 165 M1271 155L1282 -2 M1253 582L1258 511 M1258 508L1267 373 M1268 368L1273 294 M1252 742L1264 578 M1287 399L1298 247 M1275 741L1286 570 M1299 386L1308 257 M1310 236L1316 145 M1290 673L1300 538 M1312 360L1323 204 M1310 549L1319 415 M1321 398L1327 303 M1328 285L1338 155 M1338 150L1349 -14 M1324 501L1328 447 M1337 485L1344 373 M1345 369L1352 259 M1353 254L1355 219 M1337 629L1344 534 M1345 516L1350 450 M1351 442L1358 329 M1360 310L1366 219 M1359 481L1371 313 M1374 266L1384 118 M1371 463L1379 352 M1380 336L1391 184 M1391 176L1400 47 M1368 662L1377 534 M1395 282L1407 106 M1383 612L1391 487 M1392 482L1398 390 M1399 379L1402 336 M1232 35L1433 56 M1054 35L1253 56 M1308 81L1423 93 M707 37L932 60 M943 62L1173 86 M865 72L940 80 M1155 103L1344 123 M1359 124L1479 137 M731 77L931 98 M947 100L1111 117 M1036 129L1216 148 M1241 150L1494 177 M877 131L1095 154 M1118 156L1319 177 M1015 165L1109 175 M1116 175L1286 193 M1296 194L1494 215 M847 166L1024 185 M1026 185L1109 194 M1121 195L1309 215 M1325 216L1455 230 M889 209L1083 229 M1103 231L1227 244 M1236 245L1441 267 M1065 246L1182 259 M1203 261L1278 269 M1293 270L1516 294 M921 250L1151 274 M1169 276L1232 283 M1244 284L1400 301 M855 262L928 270 M1058 284L1254 304 M1266 306L1403 320 M1208 319L1285 327 M1308 329L1555 355 M852 300L1098 326 M854 339L1106 365 M1113 366L1191 374 M1198 375L1385 395 M768 349L936 366 M949 368L1058 379 M1200 413L1375 432 M800 390L956 407 M1394 453L1603 475 M772 407L935 424 M1157 447L1370 469 M1379 470L1474 480 M909 440L1107 461 M1371 489L1443 496 M1058 475L1139 483 M1372 508L1516 523 M754 462L949 482 M970 485L1145 503 M1377 527L1555 546 M843 490L1091 516 M1091 516L1167 524 M1047 531L1237 551 M1242 551L1381 566 M770 521L942 539 M965 541L1070 553 M1253 572L1373 584 M1383 585L1561 604 M857 549L1067 571 M1068 571L1269 592 M1282 594L1492 616 M843 567L1026 586 M1202 605L1405 626 M701 571L929 595 M932 595L1037 606 M1047 607L1224 626 M815 602L1060 628" stroke="#333233" stroke-width="0.9" fill="none"/>
<clipPath id="rg2"><path d="M640 606 H1050 V787 H640 Z"/></clipPath>
<path clip-path="url(#rg2)" d="M636 697L643 623 M643 623L652 544 M657 618L668 510 M681 637L685 600 M684 737L687 702 M688 699L697 613 M688 824L695 752 M695 752L705 660 M707 640L718 537 M714 699L722 617 M707 884L720 765 M730 667L734 630 M735 620L740 577 M739 835L749 741 M751 717L762 612 M762 609L772 522 M764 846L771 777 M796 663L801 615 M795 798L800 752 M812 640L819 572 M801 862L813 749 M843 709L849 654 M862 778L868 725 M868 724L872 689 M889 775L899 677 M900 789L904 756 M916 766L924 685 M925 679L935 585 M932 865L941 774 M968 640L977 559 M997 615L1003 555 M1004 802L1013 717 M1019 781L1027 706 M1028 697L1032 657 M1034 636L1041 569 M664 618L825 590 M684 637L853 607 M775 643L846 631 M596 697L733 673 M869 649L926 639 M929 638L1034 620 M510 734L641 711 M866 672L967 654 M1004 670L1148 644 M540 774L685 748 M691 747L814 726 M818 725L890 712 M898 711L983 696 M991 694L1121 671 M728 763L858 740 M1025 711L1212 678 M788 775L904 754 M788 797L978 764 M978 764L1018 757" stroke="#333233" stroke-width="0.9" fill="none"/>
<clipPath id="rg3"><path d="M1050 606 H1270 V787 H1050 Z"/></clipPath>
<path clip-path="url(#rg3)" d="M1148 740L1151 709 M1205 775L1209 731 M1097 629L1155 619 M1160 618L1255 601 M1066 665L1162 648 M1212 731L1265 721 M1031 793L1124 777 M1146 803L1243 786" stroke="#333233" stroke-width="0.9" fill="none"/>
<clipPath id="rg4"><path d="M1270 606 H1400 V787 H1270 Z"/></clipPath>
<path clip-path="url(#rg4)" d="M1261 668L1270 581 M1273 658L1277 625 M1264 848L1275 742 M1290 605L1294 564 M1280 800L1287 741 M1289 721L1291 699 M1292 691L1296 654 M1302 702L1311 615 M1323 817L1332 733 M1332 732L1339 663 M1336 794L1345 709 M1346 806L1353 743 M1367 611L1369 590 M1352 855L1364 741 M1362 862L1374 752 M1381 687L1385 645 M1377 830L1389 718 M1389 711L1402 594 M1396 750L1401 706 M1324 609L1387 598 M1201 672L1327 649 M1271 700L1408 676 M1157 760L1311 733 M1263 762L1372 743 M1154 802L1312 774 M1388 760L1535 735 M1325 792L1463 768" stroke="#333233" stroke-width="0.9" fill="none"/>
<clipPath id="rg5"><path d="M383 57 H640 V787 H383 Z"/></clipPath>
<path clip-path="url(#rg5)" d="M386 77L401 36 M396 137L410 99 M458 55L480 -5 M419 251L426 232 M498 120L520 60 M394 583L411 536 M415 526L438 462 M487 327L494 307 M495 305L505 278 M544 169L563 118 M579 73L588 48 M517 332L531 293 M590 131L609 79 M609 78L625 36 M442 627L458 581 M478 791L503 722 M567 546L593 473 M503 810L517 770 M602 800L616 762 M617 94L649 105 M429 57L494 81 M514 88L542 98 M486 110L554 134 M619 158L654 171 M600 183L627 193 M352 157L391 171 M494 208L521 218 M610 250L683 277 M451 353L532 382 M594 436L622 447 M615 476L696 505 M466 454L544 482 M326 435L392 459 M530 541L587 562 M326 498L396 524 M398 524L475 553 M405 559L435 570 M454 577L529 604 M569 619L629 641 M422 597L452 608 M504 627L577 654 M411 625L471 647 M557 774L611 794" stroke="#333233" stroke-width="0.9" fill="none"/>
<path d="M1089.0 66.0 C1089.8 70.7 1090.2 87.8 1094.0 94.0 C1097.8 100.2 1109.7 96.8 1112.0 103.0 C1114.3 109.2 1107.5 121.0 1108.0 131.0 C1108.5 141.0 1115.8 153.0 1115.0 163.0 C1114.2 173.0 1103.5 183.3 1103.0 191.0 C1102.5 198.7 1110.5 206.0 1112.0 209.0" fill="none" stroke="#1d1c1d" stroke-width="1.5"/>
<path d="M1140.0 329.0 C1139.3 337.5 1141.0 366.5 1136.0 380.0 C1131.0 393.5 1118.5 401.7 1110.0 410.0 C1101.5 418.3 1092.8 421.7 1085.0 430.0 C1077.2 438.3 1069.2 448.3 1063.0 460.0 C1056.8 471.7 1051.3 484.5 1048.0 500.0 C1044.7 515.5 1047.7 538.8 1043.0 553.0 C1038.3 567.2 1027.0 576.2 1020.0 585.0 C1013.0 593.8 1004.2 602.5 1001.0 606.0" fill="none" stroke="#1d1c1d" stroke-width="1.8"/>
<path d="M383.0 600.0 C397.5 582.5 442.8 524.5 470.0 495.0 C497.2 465.5 524.3 442.5 546.0 423.0 C567.7 403.5 584.7 390.2 600.0 378.0 C615.3 365.8 621.3 360.0 638.0 350.0 C654.7 340.0 677.7 326.7 700.0 318.0 C722.3 309.3 747.0 306.3 772.0 298.0 C797.0 289.7 829.8 275.3 850.0 268.0 C870.2 260.7 876.3 257.7 893.0 254.0 C909.7 250.3 930.8 248.3 950.0 246.0 C969.2 243.7 998.3 241.0 1008.0 240.0" fill="none" stroke="#3c3b3c" stroke-width="1.2"/>
<path d="M638.0 465.0 C625.0 477.5 585.0 516.5 560.0 540.0 C535.0 563.5 500.0 595.0 488.0 606.0" fill="none" stroke="#3c3b3c" stroke-width="1.2"/>
<path d="M383.0 474.0 L448.0 504.0" fill="none" stroke="#3c3b3c" stroke-width="1.2"/>
<path d="M647.0 57.0 C647.5 72.5 648.7 119.5 650.0 150.0 C651.3 180.5 653.3 210.0 655.0 240.0 C656.7 270.0 657.8 299.5 660.0 330.0 C662.2 360.5 666.0 391.3 668.0 423.0 C670.0 454.7 670.3 489.5 672.0 520.0 C673.7 550.5 675.0 576.0 678.0 606.0 C681.0 636.0 686.3 669.8 690.0 700.0 C693.7 730.2 698.3 772.5 700.0 787.0" fill="none" stroke="#3c3b3c" stroke-width="1.2"/>
<path d="M791.0 57.0 C792.7 72.5 795.8 119.5 801.0 150.0 C806.2 180.5 820.5 208.0 822.0 240.0 C823.5 272.0 810.0 311.5 810.0 342.0 C810.0 372.5 823.5 409.5 822.0 423.0 C820.5 436.5 801.5 392.5 801.0 423.0 C800.5 453.5 821.2 545.3 819.0 606.0 C816.8 666.7 793.2 756.8 788.0 787.0" fill="none" stroke="#3c3b3c" stroke-width="1.2"/>
<path d="M768.0 101.0 C788.8 101.8 853.0 103.0 893.0 106.0 C933.0 109.0 973.3 112.5 1008.0 119.0 C1042.7 125.5 1077.8 138.3 1101.0 145.0 C1124.2 151.7 1127.8 161.3 1147.0 159.0 C1166.2 156.7 1189.0 129.3 1216.0 131.0 C1243.0 132.7 1278.3 159.7 1309.0 169.0 C1339.7 178.3 1384.8 184.0 1400.0 187.0" fill="none" stroke="#3c3b3c" stroke-width="1.2"/>
<path d="M638.0 240.0 C659.7 235.0 725.5 217.8 768.0 210.0 C810.5 202.2 853.7 196.7 893.0 193.0 C932.3 189.3 961.7 189.0 1004.0 188.0 C1046.3 187.0 1111.0 188.3 1147.0 187.0 C1183.0 185.7 1207.8 181.2 1220.0 180.0" fill="none" stroke="#3c3b3c" stroke-width="1.2"/>
<path d="M955.0 57.0 C954.5 87.5 951.2 196.2 952.0 240.0 C952.8 283.8 957.7 289.5 960.0 320.0 C962.3 350.5 962.7 393.0 966.0 423.0 C969.3 453.0 980.8 469.7 980.0 500.0 C979.2 530.3 966.8 557.2 961.0 605.0 C955.2 652.8 947.7 756.7 945.0 787.0" fill="none" stroke="#3c3b3c" stroke-width="1.2"/>
<path d="M1064.0 57.0 C1062.5 71.7 1057.3 114.5 1055.0 145.0 C1052.7 175.5 1052.5 214.2 1050.0 240.0 C1047.5 265.8 1041.7 290.0 1040.0 300.0" fill="none" stroke="#3c3b3c" stroke-width="1.2"/>
<path d="M1323.0 57.0 C1320.7 87.5 1315.3 205.7 1309.0 240.0 C1302.7 274.3 1294.0 232.5 1285.0 263.0 C1276.0 293.5 1260.0 396.3 1255.0 423.0" fill="none" stroke="#3c3b3c" stroke-width="1.2"/>
<path d="M638.0 405.0 C661.3 400.0 735.5 384.7 778.0 375.0 C820.5 365.3 862.3 357.2 893.0 347.0 C923.7 336.8 936.5 316.3 962.0 314.0 C987.5 311.7 1015.2 333.3 1046.0 333.0 C1076.8 332.7 1111.0 314.7 1147.0 312.0 C1183.0 309.3 1219.8 319.0 1262.0 317.0 C1304.2 315.0 1377.0 302.8 1400.0 300.0" fill="none" stroke="#3c3b3c" stroke-width="1.2"/>
<path d="M892.0 317.0 C904.3 313.2 923.5 302.2 966.0 294.0 C1008.5 285.8 1116.8 272.3 1147.0 268.0" fill="none" stroke="#3c3b3c" stroke-width="1.2"/>
<path d="M766.0 593.0 C787.2 586.3 854.0 561.8 893.0 553.0 C932.0 544.2 957.7 540.0 1000.0 540.0 C1042.3 540.0 1105.3 552.2 1147.0 553.0 C1188.7 553.8 1207.8 550.5 1250.0 545.0 C1292.2 539.5 1375.0 524.2 1400.0 520.0" fill="none" stroke="#3c3b3c" stroke-width="1.2"/>
<path d="M731.0 560.0 L801.0 539.0" fill="none" stroke="#3c3b3c" stroke-width="1.2"/>
<path d="M701.0 423.0 L703.0 606.0" fill="none" stroke="#3c3b3c" stroke-width="1.2"/>
<path d="M892.0 465.0 C914.5 466.3 984.5 475.7 1027.0 473.0 C1069.5 470.3 1107.8 457.3 1147.0 449.0 C1186.2 440.7 1219.8 432.0 1262.0 423.0 C1304.2 414.0 1377.0 399.7 1400.0 395.0" fill="none" stroke="#3c3b3c" stroke-width="1.2"/>
<path d="M1234.0 423.0 L1246.0 606.0" fill="none" stroke="#3c3b3c" stroke-width="1.2"/>
<path d="M1272.0 423.0 C1273.5 453.5 1276.5 545.3 1281.0 606.0 C1285.5 666.7 1296.0 756.8 1299.0 787.0" fill="none" stroke="#3c3b3c" stroke-width="1.2"/>
<path d="M1337.0 423.0 C1342.3 453.5 1360.2 559.8 1369.0 606.0 C1377.8 652.2 1386.5 684.3 1390.0 700.0" fill="none" stroke="#3c3b3c" stroke-width="1.2"/>
<path d="M1146.0 507.0 C1165.3 493.0 1233.0 444.2 1262.0 423.0 C1291.0 401.8 1310.3 387.2 1320.0 380.0" fill="none" stroke="#3c3b3c" stroke-width="1.2"/>
<path d="M1043.0 423.0 C1032.5 441.2 998.2 501.5 980.0 532.0 C961.8 562.5 941.7 593.7 934.0 606.0" fill="none" stroke="#3c3b3c" stroke-width="1.2"/>
<path d="M383.0 656.0 C398.5 658.7 445.2 671.7 476.0 672.0 C506.8 672.3 541.2 659.5 568.0 658.0 C594.8 656.5 611.7 664.3 637.0 663.0 C662.3 661.7 677.3 655.5 720.0 650.0 C762.7 644.5 864.2 633.3 893.0 630.0" fill="none" stroke="#3c3b3c" stroke-width="1.2"/>
<path d="M383.0 612.0 L522.0 605.0" fill="none" stroke="#3c3b3c" stroke-width="1.2"/>
<path d="M638.0 626.0 L726.0 605.0" fill="none" stroke="#3c3b3c" stroke-width="1.2"/>
<path d="M691.0 633.0 L650.0 787.0" fill="none" stroke="#3c3b3c" stroke-width="1.2"/>
<path d="M943.0 769.0 C955.3 757.5 995.5 727.3 1017.0 700.0 C1038.5 672.7 1054.8 635.0 1072.0 605.0 C1089.2 575.0 1112.0 534.2 1120.0 520.0" fill="none" stroke="#3c3b3c" stroke-width="1.2"/>
<path d="M1017.0 714.0 L1026.0 787.0" fill="none" stroke="#3c3b3c" stroke-width="1.2"/>
<path d="M1146.0 700.0 C1173.0 695.0 1265.7 678.2 1308.0 670.0 C1350.3 661.8 1384.7 654.2 1400.0 651.0" fill="none" stroke="#3c3b3c" stroke-width="1.2"/>
<path d="M1206.0 605.0 L1199.0 787.0" fill="none" stroke="#3c3b3c" stroke-width="1.2"/>
<path d="M1146.0 781.0 L1215.0 605.0" fill="none" stroke="#3c3b3c" stroke-width="1.2"/>
<path d="M858.0 240.0 C860.0 270.5 866.7 376.3 870.0 423.0 C873.3 469.7 876.7 503.8 878.0 520.0" fill="none" stroke="#3c3b3c" stroke-width="1.2"/>
<path d="M390.0 787.0 C391.7 782.5 395.4 772.2 400.0 760.0 C404.6 747.8 411.9 725.7 417.7 713.7 C423.5 701.7 429.2 695.7 435.0 688.0 C440.8 680.3 444.1 673.7 452.4 667.4 C460.7 661.1 473.4 655.0 485.0 650.0 C496.6 645.0 509.2 640.9 521.7 637.4 C534.2 633.9 548.5 631.3 560.0 629.0 C571.5 626.7 575.2 624.3 591.0 623.5 C606.8 622.7 637.5 624.2 655.0 624.0 C672.5 623.8 685.1 625.5 695.7 622.0 C706.3 618.5 711.1 611.2 718.8 603.3 C726.5 595.4 734.9 581.6 741.8 574.4 C748.7 567.2 750.3 565.7 760.0 560.0 C769.7 554.3 788.3 545.8 800.0 540.0 C811.7 534.2 821.2 531.0 830.0 525.0 C838.8 519.0 846.3 513.2 853.0 504.0 C859.7 494.8 865.8 480.7 870.0 470.0 C874.2 459.3 875.5 450.0 878.0 440.0 C880.5 430.0 881.3 417.0 885.0 410.0 C888.7 403.0 887.5 400.0 900.0 398.0 C912.5 396.0 938.0 398.0 960.0 398.0 C982.0 398.0 1008.5 399.5 1032.0 398.0 C1055.5 396.5 1085.5 395.3 1101.0 389.0 C1116.5 382.7 1119.2 369.3 1125.0 360.0 C1130.8 350.7 1133.5 342.2 1136.0 333.0 C1138.5 323.8 1136.2 315.2 1140.0 305.0 C1143.8 294.8 1151.0 280.7 1159.0 272.0 C1167.0 263.3 1176.8 259.3 1188.0 253.0 C1199.2 246.7 1214.8 239.5 1226.0 234.0 C1237.2 228.5 1246.8 226.5 1255.0 220.0 C1263.2 213.5 1266.8 201.3 1275.0 195.0 C1283.2 188.7 1294.0 187.5 1304.0 182.0 C1314.0 176.5 1325.7 169.0 1335.0 162.0 C1344.3 155.0 1352.7 145.8 1360.0 140.0 C1367.3 134.2 1375.8 129.2 1379.0 127.0" fill="none" stroke="#3f3e3f" stroke-width="3.4"/>
<path d="M390.0 787.0 C391.7 782.5 395.4 772.2 400.0 760.0 C404.6 747.8 411.9 725.7 417.7 713.7 C423.5 701.7 429.2 695.7 435.0 688.0 C440.8 680.3 444.1 673.7 452.4 667.4 C460.7 661.1 473.4 655.0 485.0 650.0 C496.6 645.0 509.2 640.9 521.7 637.4 C534.2 633.9 548.5 631.3 560.0 629.0 C571.5 626.7 575.2 624.3 591.0 623.5 C606.8 622.7 637.5 624.2 655.0 624.0 C672.5 623.8 685.1 625.5 695.7 622.0 C706.3 618.5 711.1 611.2 718.8 603.3 C726.5 595.4 734.9 581.6 741.8 574.4 C748.7 567.2 750.3 565.7 760.0 560.0 C769.7 554.3 788.3 545.8 800.0 540.0 C811.7 534.2 821.2 531.0 830.0 525.0 C838.8 519.0 846.3 513.2 853.0 504.0 C859.7 494.8 865.8 480.7 870.0 470.0 C874.2 459.3 875.5 450.0 878.0 440.0 C880.5 430.0 881.3 417.0 885.0 410.0 C888.7 403.0 887.5 400.0 900.0 398.0 C912.5 396.0 938.0 398.0 960.0 398.0 C982.0 398.0 1008.5 399.5 1032.0 398.0 C1055.5 396.5 1085.5 395.3 1101.0 389.0 C1116.5 382.7 1119.2 369.3 1125.0 360.0 C1130.8 350.7 1133.5 342.2 1136.0 333.0 C1138.5 323.8 1136.2 315.2 1140.0 305.0 C1143.8 294.8 1151.0 280.7 1159.0 272.0 C1167.0 263.3 1176.8 259.3 1188.0 253.0 C1199.2 246.7 1214.8 239.5 1226.0 234.0 C1237.2 228.5 1246.8 226.5 1255.0 220.0 C1263.2 213.5 1266.8 201.3 1275.0 195.0 C1283.2 188.7 1294.0 187.5 1304.0 182.0 C1314.0 176.5 1325.7 169.0 1335.0 162.0 C1344.3 155.0 1352.7 145.8 1360.0 140.0 C1367.3 134.2 1375.8 129.2 1379.0 127.0" fill="none" stroke="#2c2b2c" stroke-width="1.3"/>
<path d="M594.8 643.6 C596.2 646.0 600.6 652.7 603.0 658.0 C605.4 663.3 607.5 664.7 609.2 675.3 C611.0 685.9 611.7 711.0 613.5 721.5 C615.3 732.0 616.4 733.2 620.0 738.0 C623.6 742.8 628.5 745.0 635.2 750.3 C641.9 755.6 651.8 763.9 660.0 770.0 C668.2 776.1 680.2 784.2 684.2 787.0" fill="none" stroke="#3f3e3f" stroke-width="3.4"/>
<path d="M594.8 643.6 C596.2 646.0 600.6 652.7 603.0 658.0 C605.4 663.3 607.5 664.7 609.2 675.3 C611.0 685.9 611.7 711.0 613.5 721.5 C615.3 732.0 616.4 733.2 620.0 738.0 C623.6 742.8 628.5 745.0 635.2 750.3 C641.9 755.6 651.8 763.9 660.0 770.0 C668.2 776.1 680.2 784.2 684.2 787.0" fill="none" stroke="#2c2b2c" stroke-width="1.3"/>
<path d="M1380.0 57.5 C1379.8 69.1 1379.5 106.6 1379.0 127.0 C1378.5 147.4 1377.3 161.2 1377.0 180.0 C1376.7 198.8 1376.7 220.0 1377.0 240.0 C1377.3 260.0 1377.5 273.3 1379.0 300.0 C1380.5 326.7 1383.8 370.0 1386.0 400.0 C1388.2 430.0 1389.7 456.7 1392.0 480.0 C1394.3 503.3 1398.7 530.0 1400.0 540.0" fill="none" stroke="#3f3e3f" stroke-width="3.4"/>
<path d="M1380.0 57.5 C1379.8 69.1 1379.5 106.6 1379.0 127.0 C1378.5 147.4 1377.3 161.2 1377.0 180.0 C1376.7 198.8 1376.7 220.0 1377.0 240.0 C1377.3 260.0 1377.5 273.3 1379.0 300.0 C1380.5 326.7 1383.8 370.0 1386.0 400.0 C1388.2 430.0 1389.7 456.7 1392.0 480.0 C1394.3 503.3 1398.7 530.0 1400.0 540.0" fill="none" stroke="#2c2b2c" stroke-width="1.3"/>
<path d="M1245.7 227.9 C1253.1 224.7 1274.3 212.8 1290.0 208.6 C1305.7 204.4 1321.7 204.6 1340.0 203.0 C1358.3 201.4 1390.0 199.7 1400.0 199.0" fill="none" stroke="#3f3e3f" stroke-width="3.4"/>
<path d="M1245.7 227.9 C1253.1 224.7 1274.3 212.8 1290.0 208.6 C1305.7 204.4 1321.7 204.6 1340.0 203.0 C1358.3 201.4 1390.0 199.7 1400.0 199.0" fill="none" stroke="#2c2b2c" stroke-width="1.3"/>
<path d="M1265.0 227.9 C1268.2 229.5 1276.3 231.7 1284.3 237.5 C1292.3 243.3 1306.8 257.8 1313.2 262.6 C1319.6 267.4 1308.4 263.8 1322.9 266.4 C1337.4 269.0 1387.2 276.1 1400.0 278.0" fill="none" stroke="#3f3e3f" stroke-width="3.4"/>
<path d="M1265.0 227.9 C1268.2 229.5 1276.3 231.7 1284.3 237.5 C1292.3 243.3 1306.8 257.8 1313.2 262.6 C1319.6 267.4 1308.4 263.8 1322.9 266.4 C1337.4 269.0 1387.2 276.1 1400.0 278.0" fill="none" stroke="#2c2b2c" stroke-width="1.3"/>
<path d="M1146.0 775.0 C1163.3 764.5 1219.3 730.3 1250.0 712.0 C1280.7 693.7 1305.0 680.5 1330.0 665.0 C1355.0 649.5 1388.3 626.7 1400.0 619.0" fill="none" stroke="#3f3e3f" stroke-width="3.4"/>
<path d="M1146.0 775.0 C1163.3 764.5 1219.3 730.3 1250.0 712.0 C1280.7 693.7 1305.0 680.5 1330.0 665.0 C1355.0 649.5 1388.3 626.7 1400.0 619.0" fill="none" stroke="#2c2b2c" stroke-width="1.3"/>
<g font-family="Liberation Sans" text-anchor="middle" paint-order="stroke" stroke="#1e1e1e" stroke-width="2" stroke-linejoin="round">
<text x="472" y="241" font-size="8.5" font-style="italic" fill="#7e7e7e">West Hartford Reservoirs</text>
<text x="472" y="252" font-size="8.5" font-style="italic" fill="#7e7e7e">Recreation Area</text>
<text x="742" y="80" font-size="8" fill="#8e8e8e" transform="rotate(-12 742 80)">Pioneer Dr</text>
<text x="886" y="232" font-size="8" fill="#8e8e8e" transform="rotate(-10 886 232)">Milton St</text>
<text x="748" y="106" font-size="8" fill="#8e8e8e">Asylum Ave</text>
<text x="745" y="219" font-size="8" fill="#8e8e8e" transform="rotate(-15 745 219)">Fern St</text>
<text x="857" y="208" font-size="8" fill="#8e8e8e">Fernridge Place</text>
<text x="910" y="84" font-size="8.5" font-style="italic" fill="#7e7e7e">University of</text>
<text x="910" y="94" font-size="8.5" font-style="italic" fill="#7e7e7e">Saint Joseph</text>
<text x="1032" y="86" font-size="8" letter-spacing="0.25" fill="#858585">PROSPECT</text>
<text x="1032" y="96.5" font-size="8" letter-spacing="0.25" fill="#858585">AVENUE HISTORIC</text>
<text x="1032" y="106.5" font-size="8" letter-spacing="0.25" fill="#858585">DISTRICT</text>
<text x="1033" y="126" font-size="8" fill="#8e8e8e" transform="rotate(14 1033 126)">Asylum Ave</text>
<text x="943" y="199" font-size="8" fill="#8e8e8e" transform="rotate(-5 943 199)">Fern St</text>
<text x="1037" y="222" font-size="7.5" fill="#8e8e8e" transform="rotate(90 1037 222)">Oxford St</text>
<text x="1098" y="220" font-size="8" letter-spacing="0.25" fill="#858585">LITTLE HOLLYWOOD</text>
<text x="1098" y="230" font-size="8" letter-spacing="0.25" fill="#858585">HISTORIC</text>
<text x="1098" y="239.5" font-size="8" letter-spacing="0.25" fill="#858585">DISTRICT</text>
<text x="1184" y="67" font-size="8" letter-spacing="0.25" fill="#858585">UPPER ALBANY</text>
<text x="1184" y="77" font-size="8" letter-spacing="0.25" fill="#858585">HISTORIC</text>
<text x="1184" y="87" font-size="8" letter-spacing="0.25" fill="#858585">DISTRICT</text>
<text x="1279" y="106" font-size="8" letter-spacing="0.25" fill="#858585">CLAY HILL</text>
<text x="1279" y="116" font-size="8" letter-spacing="0.25" fill="#858585">HISTORIC</text>
<text x="1279" y="126" font-size="8" letter-spacing="0.25" fill="#858585">DISTRICT</text>
<text x="1170" y="165" font-size="8" letter-spacing="0.25" fill="#858585">COLLINS AND</text>
<text x="1176" y="175" font-size="8" letter-spacing="0.25" fill="#858585">TOWNLEY STREETS</text>
<text x="1176" y="185" font-size="8" letter-spacing="0.25" fill="#858585">DISTRICT</text>
<text x="1304" y="192" font-size="8" letter-spacing="0.25" fill="#858585">ANN STREET</text>
<text x="1304" y="202" font-size="8" letter-spacing="0.25" fill="#858585">HISTORIC</text>
<text x="1304" y="212" font-size="8" letter-spacing="0.25" fill="#858585">DISTRICT</text>
<text x="1315" y="120" font-size="8" fill="#8e8e8e" transform="rotate(-90 1315 120)">Main St</text>
<text x="1166" y="116" font-size="8" fill="#8e8e8e" transform="rotate(22 1166 116)">Homestead Ave</text>
<text x="824.5" y="278" font-size="12" font-weight="700" fill="#a3a3a3">West Hartford</text>
<text x="744" y="310" font-size="8" fill="#8e8e8e" transform="rotate(-20 744 310)">Farmington Ave</text>
<text x="749" y="385" font-size="8" fill="#8e8e8e" transform="rotate(-17 749 385)">Sedgwick Rd</text>
<text x="935" y="249" font-size="8" fill="#8e8e8e" transform="rotate(-5 935 249)">Farmington Ave</text>
<text x="1062" y="259" font-size="8" letter-spacing="0.25" fill="#858585">WEST END</text>
<text x="1062" y="269" font-size="8" letter-spacing="0.25" fill="#858585">SOUTH HISTORIC</text>
<text x="1062" y="279" font-size="8" letter-spacing="0.25" fill="#858585">DISTRICT</text>
<text x="930" y="310" font-size="8" fill="#8e8e8e" transform="rotate(-15 930 310)">Boulevard</text>
<text x="1061" y="333" font-size="8" fill="#8e8e8e" transform="rotate(-12 1061 333)">Park St</text>
<text x="1019" y="381" font-size="8" fill="#8e8e8e" transform="rotate(-10 1019 381)">Kane St</text>
<text x="1208" y="253.5" font-size="13" font-weight="700" fill="#a3a3a3">Hartford</text>
<text x="1227" y="292" font-size="8" letter-spacing="0.25" fill="#858585">FROG</text>
<text x="1227" y="301" font-size="8" letter-spacing="0.25" fill="#858585">HOLLOW</text>
<text x="1318" y="349" font-size="8" letter-spacing="0.25" fill="#858585">CONGRESS</text>
<text x="1318" y="358" font-size="8" letter-spacing="0.25" fill="#858585">STREET</text>
<text x="1284" y="321" font-size="8" fill="#8e8e8e" transform="rotate(8 1284 321)">Park St</text>
<text x="1186" y="395" font-size="8" fill="#8e8e8e" transform="rotate(-90 1186 395)">Zion St</text>
<text x="1211" y="425" font-size="8.5" font-style="italic" fill="#7e7e7e">Trinity College</text>
<text x="494" y="467" font-size="9" fill="#8e8e8e">Oakland</text>
<text x="494" y="478" font-size="9" fill="#8e8e8e">Gardens</text>
<text x="513" y="567" font-size="9" fill="#8e8e8e">Oakland</text>
<text x="513" y="578" font-size="9" fill="#8e8e8e">Gardens</text>
<text x="702" y="513" font-size="8" fill="#8e8e8e" transform="rotate(90 702 513)">Ridgewood Rd</text>
<text x="805" y="462" font-size="8" fill="#8e8e8e" transform="rotate(90 805 462)">S Main St</text>
<text x="760" y="552" font-size="8" fill="#8e8e8e" transform="rotate(-15 760 552)">Beechwood Rd</text>
<text x="802" y="586" font-size="8" fill="#8e8e8e" transform="rotate(-12 802 586)">New Britain Ave</text>
<text x="970" y="567" font-size="9.5" fill="#8e8e8e">Elmwood</text>
<text x="1082" y="467" font-size="8" fill="#8e8e8e" transform="rotate(-10 1082 467)">Flatbush Ave</text>
<text x="1235" y="459" font-size="8" fill="#8e8e8e" transform="rotate(-90 1235 459)">Broad St</text>
<text x="1163" y="545" font-size="8" fill="#8e8e8e" transform="rotate(90 1163 545)">Hillside Ave</text>
<text x="1275" y="545" font-size="8" fill="#8e8e8e" transform="rotate(80 1275 545)">Campfield Ave</text>
<text x="1299" y="580" font-size="8" fill="#8e8e8e" transform="rotate(90 1299 580)">George St</text>
<text x="1346" y="494" font-size="8" fill="#8e8e8e" transform="rotate(75 1346 494)">Wethersfield Ave</text>
<text x="1297" y="466" font-size="8" fill="#8e8e8e" transform="rotate(-8 1297 466)">Barker St</text>
<text x="1183" y="579" font-size="8" fill="#8e8e8e" transform="rotate(-8 1183 579)">Freeman St</text>
<text x="477" y="612" font-size="8.5" fill="#8e8e8e" transform="rotate(-5 477 612)">Middle Rd</text>
<text x="533" y="673" font-size="8.5" fill="#8e8e8e" transform="rotate(-15 533 673)">South Rd</text>
<text x="400" y="729" font-size="8.5" fill="#8e8e8e" transform="rotate(-35 400 729)">Colt Hwy</text>
<text x="835" y="624" font-size="8" fill="#8e8e8e">Elmfield St</text>
<text x="842" y="642" font-size="8" fill="#8e8e8e" transform="rotate(-5 842 642)">Hall St</text>
<text x="873" y="630" font-size="7.5" fill="#8e8e8e" transform="rotate(-90 873 630)">Somerset St</text>
<text x="862" y="751" font-size="9" fill="#8e8e8e">Newington</text>
<text x="862" y="762" font-size="9" fill="#8e8e8e">Junction</text>
<text x="954" y="635" font-size="8" fill="#8e8e8e" transform="rotate(-80 954 635)">South St</text>
<text x="938" y="745" font-size="8" fill="#8e8e8e" transform="rotate(80 938 745)">Main St</text>
<text x="1018" y="713" font-size="8" fill="#8e8e8e" transform="rotate(-40 1018 713)">Hartford Ave</text>
<text x="1024" y="771" font-size="8" fill="#8e8e8e" transform="rotate(85 1024 771)">Mountain Rd</text>
<text x="1241" y="643" font-size="9" font-style="italic" fill="#7e7e7e">Goodwin Park</text>
<text x="1241" y="654" font-size="9" font-style="italic" fill="#7e7e7e">Golf Course</text>
<text x="1376" y="646" font-size="8" letter-spacing="0.25" fill="#858585">PARKSIDE</text>
<text x="1376" y="656" font-size="8" letter-spacing="0.25" fill="#858585">HISTORIC</text>
<text x="1376" y="666" font-size="8" letter-spacing="0.25" fill="#858585">DISTRICT</text>
<text x="1294" y="676" font-size="8.5" fill="#8e8e8e" transform="rotate(-12 1294 676)">Jordan Ln</text>
<text x="1202" y="716" font-size="8" fill="#8e8e8e" transform="rotate(90 1202 716)">Ridge Rd</text>
<text x="1329" y="748" font-size="8.5" fill="#8e8e8e" transform="rotate(-12 1329 748)">Nott St</text>
<text x="1325" y="620" font-size="8" fill="#8e8e8e" transform="rotate(-10 1325 620)">Victoria Rd</text>
<text x="1158" y="764" font-size="8" fill="#8e8e8e" transform="rotate(-70 1158 764)">Berlin Turnpike</text>
</g>
<polyline points="589.6,176.9 578.5,177.3 577.4,173.8 582.4,171.5 585.4,168.9 587.3,164.3 594.2,163.1 599.9,161.6 606.3,159.7 609.3,153.6 611.0,147.1 607.0,144.4 606.8,139.5 601.8,131.5 600.3,126.1 596.1,123.4 593.4,124.2 594.4,131.5 597.3,137.9 601.1,142.5 605.3,147.1 603.7,149.0 595.0,151.7 589.6,156.5 585.0,157.4 584.3,160.5 576.0,162.0 570.9,161.6 568.9,153.2 572.8,147.1 569.4,144.0 566.7,147.5 565.3,138.7 564.4,132.6 561.4,133.4 558.3,134.5 560.5,146.0 565.6,169.2 569.4,175.3 573.2,178.4 576.0,191.9 580.2,197.7 573.7,203.5 569.5,204.7 569.5,215.1 578.3,216.3 589.5,214.0 590.7,217.5 580.7,221.7 570.2,224.4 570.9,231.9 571.4,238.4 585.3,233.7 593.5,231.0" fill="none" stroke="#1cb2d6" stroke-width="1.7" stroke-linejoin="round" stroke-linecap="round"/>
<polyline points="679.1,451.2 668.0,451.6 666.9,448.1 671.9,445.8 674.9,443.2 676.8,438.6 683.7,437.4 689.4,435.9 695.8,434.0 698.8,427.9 700.5,421.4 696.5,418.7 696.3,413.8 691.3,405.8 689.8,400.4 685.6,397.7 682.9,398.5 683.9,405.8 686.8,412.2 690.6,416.8 694.8,421.4 693.2,423.3 684.5,426.0 679.1,430.8 674.5,431.7 673.8,434.8 665.5,436.3 660.4,435.9 658.4,427.5 662.3,421.4 658.9,418.3 656.2,421.8 654.8,413.0 653.9,406.9 650.9,407.7 647.8,408.8 650.0,420.3 655.1,443.5 658.9,449.6 662.7,452.7 665.5,466.2 669.7,472.0 663.2,477.8 659.0,479.0 659.0,489.4 667.8,490.6 679.0,488.3 680.2,491.8 670.2,496.0 659.7,498.7 660.4,506.2 660.9,512.7 674.8,508.0 683.0,505.3" fill="none" stroke="#bf4fe0" stroke-width="1.7" stroke-linejoin="round" stroke-linecap="round"/>
<polyline points="1316.9,420.9 1305.8,421.3 1304.7,417.8 1309.7,415.5 1312.7,412.9 1314.6,408.3 1321.5,407.1 1327.2,405.6 1333.6,403.7 1336.6,397.6 1338.3,391.1 1334.3,388.4 1334.1,383.5 1329.1,375.5 1327.6,370.1 1323.4,367.4 1320.7,368.2 1321.7,375.5 1324.6,381.9 1328.4,386.5 1332.6,391.1 1331.0,393.0 1322.3,395.7 1316.9,400.5 1312.3,401.4 1311.6,404.5 1303.3,406.0 1298.2,405.6 1296.2,397.2 1300.1,391.1 1296.7,388.0 1294.0,391.5 1292.6,382.7 1291.7,376.6 1288.7,377.4 1285.6,378.5 1287.8,390.0 1292.9,413.2 1296.7,419.3 1300.5,422.4 1303.3,435.9 1307.5,441.7 1301.0,447.5 1296.8,448.7 1296.8,459.1 1305.6,460.3 1316.8,458.0 1318.0,461.5 1308.0,465.7 1297.5,468.4 1298.2,475.9 1298.7,482.4 1312.6,477.7 1320.8,475.0" fill="none" stroke="#1cb2d6" stroke-width="1.7" stroke-linejoin="round" stroke-linecap="round"/>
<polyline points="1035.1,205.2 1024.0,205.6 1022.9,202.1 1027.9,199.8 1030.9,197.2 1032.8,192.6 1039.7,191.4 1045.4,189.9 1051.8,188.0 1054.8,181.9 1056.5,175.4 1052.5,172.7 1052.3,167.8 1047.3,159.8 1045.8,154.4 1041.6,151.7 1038.9,152.5 1039.9,159.8 1042.8,166.2 1046.6,170.8 1050.8,175.4 1049.2,177.3 1040.5,180.0 1035.1,184.8 1030.5,185.7 1029.8,188.8 1021.5,190.3 1016.4,189.9 1014.4,181.5 1018.3,175.4 1014.9,172.3 1012.2,175.8 1010.8,167.0 1009.9,160.9 1006.9,161.7 1003.8,162.8 1006.0,174.3 1011.1,197.5 1014.9,203.6 1018.7,206.7 1021.5,220.2 1025.7,226.0 1019.2,231.8 1015.0,233.0 1015.0,243.4 1023.8,244.6 1035.0,242.3 1036.2,245.8 1026.2,250.0 1015.7,252.7 1016.4,260.2 1016.9,266.7 1030.8,262.0 1039.0,259.3" fill="none" stroke="#bf4fe0" stroke-width="1.7" stroke-linejoin="round" stroke-linecap="round"/>
<polyline points="1136.7,585.3 1125.6,585.7 1124.5,582.2 1129.5,579.9 1132.5,577.3 1134.4,572.7 1141.3,571.5 1147.0,570.0 1153.4,568.1 1156.4,562.0 1158.1,555.5 1154.1,552.8 1153.9,547.9 1148.9,539.9 1147.4,534.5 1143.2,531.8 1140.5,532.6 1141.5,539.9 1144.4,546.3 1148.2,550.9 1152.4,555.5 1150.8,557.4 1142.1,560.1 1136.7,564.9 1132.1,565.8 1131.4,568.9 1123.1,570.4 1118.0,570.0 1116.0,561.6 1119.9,555.5 1116.5,552.4 1113.8,555.9 1112.4,547.1 1111.5,541.0 1108.5,541.8 1105.4,542.9 1107.6,554.4 1112.7,577.6 1116.5,583.7 1120.3,586.8 1123.1,600.3 1127.3,606.1 1120.8,611.9 1116.6,613.1 1116.6,623.5 1125.4,624.7 1136.6,622.4 1137.8,625.9 1127.8,630.1 1117.3,632.8 1118.0,640.3 1118.5,646.8 1132.4,642.1 1140.6,639.4" fill="none" stroke="#1fbb8a" stroke-width="1.7" stroke-linejoin="round" stroke-linecap="round"/>
<polyline points="872.5,613.9 861.4,614.3 860.3,610.8 865.3,608.5 868.3,605.9 870.2,601.3 877.1,600.1 882.8,598.6 889.2,596.7 892.2,590.6 893.9,584.1 889.9,581.4 889.7,576.5 884.7,568.5 883.2,563.1 879.0,560.4 876.3,561.2 877.3,568.5 880.2,574.9 884.0,579.5 888.2,584.1 886.6,586.0 877.9,588.7 872.5,593.5 867.9,594.4 867.2,597.5 858.9,599.0 853.8,598.6 851.8,590.2 855.7,584.1 852.3,581.0 849.6,584.5 848.2,575.7 847.3,569.6 844.3,570.4 841.2,571.5 843.4,583.0 848.5,606.2 852.3,612.3 856.1,615.4 858.9,628.9 863.1,634.7 856.6,640.5 852.4,641.7 852.4,652.1 861.2,653.3 872.4,651.0 873.6,654.5 863.6,658.7 853.1,661.4 853.8,668.9 854.3,675.4 868.2,670.7 876.4,668.0" fill="none" stroke="#2f8ae6" stroke-width="1.7" stroke-linejoin="round" stroke-linecap="round"/>
<polyline points="761.3,158.2 762.4,144.2 779.4,145.4 804.3,146.5 802.7,134.9 799.6,119.3 781.7,117.9 780.3,129.1 772.2,128.4 763.6,127.9 765.4,110.0 766.4,86.8 774.0,86.1 774.7,80.3 798.0,79.8 798.5,86.8 799.2,102.3 835.2,102.3 850.0,102.8 859.8,103.5 866.0,102.0 872.0,98.6 880.4,92.0 888.0,82.6 897.2,85.2 895.2,92.0 893.0,98.2 884.5,105.5 879.3,106.5 880.0,118.3 883.0,132.0 891.1,155.3 902.8,154.3 904.8,165.2 917.0,156.1" fill="none" stroke="#1fbb8a" stroke-width="1.7" stroke-linejoin="round" stroke-linecap="round"/>
<polyline points="706.2,735.6 707.3,721.6 724.3,722.8 749.2,723.9 747.6,712.3 744.5,696.7 726.6,695.3 725.2,706.5 717.1,705.8 708.5,705.3 710.3,687.4 711.3,664.2 718.9,663.5 719.6,657.7 742.9,657.2 743.4,664.2 744.1,679.7 780.1,679.7 794.9,680.2 804.7,680.9 810.9,679.4 816.9,676.0 825.3,669.4 832.9,660.0 842.1,662.6 840.1,669.4 837.9,675.6 829.4,682.9 824.2,683.9 824.9,695.7 827.9,709.4 836.0,732.7 847.7,731.7 849.7,742.6 861.9,733.5" fill="none" stroke="#1fbb8a" stroke-width="1.7" stroke-linejoin="round" stroke-linecap="round"/>
<polyline points="781.2,461.6 782.3,447.6 799.3,448.8 824.2,449.9 822.6,438.3 819.5,422.7 801.6,421.3 800.2,432.5 792.1,431.8 783.5,431.3 785.3,413.4 786.3,390.2 793.9,389.5 794.6,383.7 817.9,383.2 818.4,390.2 819.1,405.7 855.1,405.7 869.9,406.2 879.7,406.9 885.9,405.4 891.9,402.0 900.3,395.4 907.9,386.0 917.1,388.6 915.1,395.4 912.9,401.6 904.4,408.9 899.2,409.9 899.9,421.7 902.9,435.4 911.0,458.7 922.7,457.7 924.7,468.6 936.9,459.5" fill="none" stroke="#1fbb8a" stroke-width="1.7" stroke-linejoin="round" stroke-linecap="round"/>
<polyline points="1049.7,492.8 1050.8,478.8 1067.8,480.0 1092.7,481.1 1091.1,469.5 1088.0,453.9 1070.1,452.5 1068.7,463.7 1060.6,463.0 1052.0,462.5 1053.8,444.6 1054.8,421.4 1062.4,420.7 1063.1,414.9 1086.4,414.4 1086.9,421.4 1087.6,436.9 1123.6,436.9 1138.4,437.4 1148.2,438.1 1154.4,436.6 1160.4,433.2 1168.8,426.6 1176.4,417.2 1185.6,419.8 1183.6,426.6 1181.4,432.8 1172.9,440.1 1167.7,441.1 1168.4,452.9 1171.4,466.6 1179.5,489.9 1191.2,488.9 1193.2,499.8 1205.4,490.7" fill="none" stroke="#bf4fe0" stroke-width="1.7" stroke-linejoin="round" stroke-linecap="round"/>
<polyline points="745.0,174.4 742.7,184.4 745.4,190.7 741.5,199.3 747.3,202.3 753.1,204.0 755.0,197.7 757.8,191.9 768.2,196.5 778.0,198.9 792.7,197.0 803.6,194.2 804.3,208.2 807.3,209.3 807.8,193.0 810.6,191.9 811.3,203.5 814.7,204.0 815.9,213.3 817.0,219.8 820.6,219.8 819.4,209.3 824.0,204.7 828.2,200.0 829.9,194.2 832.9,184.9 837.5,177.9 835.2,169.8 840.8,171.0 842.7,180.3 848.5,179.1 846.1,169.8 851.5,168.6 861.3,166.8 867.8,165.1 868.2,171.0 874.0,175.1 876.4,188.4 871.7,189.1 867.1,197.7 861.7,200.0 864.7,207.0 872.9,207.7 877.5,211.7 882.7,215.1 883.3,208.2 891.5,207.7 897.1,201.2 900.8,193.7 902.5,203.5 907.1,209.3 910.6,203.5 911.8,198.9 917.1,199.3 917.6,208.2 919.4,216.3 910.6,240.0 905.0,245.0" fill="none" stroke="#1cb2d6" stroke-width="1.7" stroke-linejoin="round" stroke-linecap="round"/>
<polyline points="1210.0,186.8 1207.7,196.8 1210.4,203.1 1206.5,211.7 1212.3,214.7 1218.1,216.4 1220.0,210.1 1222.8,204.3 1233.2,208.9 1243.0,211.3 1257.7,209.4 1268.6,206.6 1269.3,220.6 1272.3,221.7 1272.8,205.4 1275.6,204.3 1276.3,215.9 1279.7,216.4 1280.9,225.7 1282.0,232.2 1285.6,232.2 1284.4,221.7 1289.0,217.1 1293.2,212.4 1294.9,206.6 1297.9,197.3 1302.5,190.3 1300.2,182.2 1305.8,183.4 1307.7,192.7 1313.5,191.5 1311.1,182.2 1316.5,181.0 1326.3,179.2 1332.8,177.5 1333.2,183.4 1339.0,187.5 1341.4,200.8 1336.7,201.5 1332.1,210.1 1326.7,212.4 1329.7,219.4 1337.9,220.1 1342.5,224.1 1347.7,227.5 1348.3,220.6 1356.5,220.1 1362.1,213.6 1365.8,206.1 1367.5,215.9 1372.1,221.7 1375.6,215.9 1376.8,211.3 1382.1,211.7 1382.6,220.6 1384.4,228.7 1379.7,241.5 1371.1,262.0" fill="none" stroke="#2f8ae6" stroke-width="1.7" stroke-linejoin="round" stroke-linecap="round"/>
<polyline points="778.0,499.3 775.7,509.3 778.4,515.6 774.5,524.2 780.3,527.2 786.1,528.9 788.0,522.6 790.8,516.8 801.2,521.4 811.0,523.8 825.7,521.9 836.6,519.1 837.3,533.1 840.3,534.2 840.8,517.9 843.6,516.8 844.3,528.4 847.7,528.9 848.9,538.2 850.0,544.7 853.6,544.7 852.4,534.2 857.0,529.6 861.2,524.9 862.9,519.1 865.9,509.8 870.5,502.8 868.2,494.7 873.8,495.9 875.7,505.2 881.5,504.0 879.1,494.7 884.5,493.5 894.3,491.7 900.8,490.0 901.2,495.9 907.0,500.0 909.4,513.3 904.7,514.0 900.1,522.6 894.7,524.9 897.7,531.9 905.9,532.6 910.5,536.6 915.7,540.0 916.3,533.1 924.5,532.6 930.1,526.1 933.8,518.6 935.5,528.4 940.1,534.2 943.6,528.4 944.8,523.8 950.1,524.2 950.6,533.1 952.4,541.2 939.7,573.0 936.2,582.3" fill="none" stroke="#1cb2d6" stroke-width="1.7" stroke-linejoin="round" stroke-linecap="round"/>
<polyline points="1196.0,124.4 1191.3,130.3 1201.8,129.6 1206.9,122.1 1211.1,126.8 1215.8,125.6 1222.7,130.3 1226.2,131.9 1234.4,131.0 1235.5,137.2 1241.3,141.9 1241.8,129.1 1243.7,125.6 1249.5,119.3 1259.5,118.6 1264.6,117.9 1263.4,107.0 1262.3,98.9 1266.9,95.4" fill="none" stroke="#1cb2d6" stroke-width="1.7" stroke-linejoin="round" stroke-linecap="round"/>
<polyline points="1262.3,98.9 1256.5,98.9 1250.7,100.0 1244.8,101.7 1238.6,103.5 1236.2,98.4 1233.9,85.6 1229.3,86.1 1218.6,86.1 1204.6,91.4 1197.6,94.2 1194.8,100.0 1192.5,103.5 1188.3,109.3 1189.7,114.7 1189.0,119.3 1182.0,122.1 1180.9,132.6 1175.8,134.9 1168.1,137.9 1164.1,145.4 1164.1,151.2 1165.1,156.5 1171.6,154.2 1180.9,159.8 1186.7,159.3 1196.0,155.8 1203.7,151.9 1209.3,148.9 1210.7,153.5 1213.0,161.7 1220.0,164.0 1225.1,161.7 1223.9,158.2 1222.7,151.2 1221.6,145.4 1227.4,144.2 1232.0,144.9 1235.5,154.7 1237.2,159.3 1248.3,157.0 1249.5,161.7 1278.6,152.3" fill="none" stroke="#1cb2d6" stroke-width="1.7" stroke-linejoin="round" stroke-linecap="round"/>
<polyline points="678.0,299.3 673.3,305.2 683.8,304.5 688.9,297.0 693.1,301.7 697.8,300.5 704.7,305.2 708.2,306.8 716.4,305.9 717.5,312.1 723.3,316.8 723.8,304.0 725.7,300.5 731.5,294.2 741.5,293.5 746.6,292.8 745.4,281.9 744.3,273.8 748.9,270.3" fill="none" stroke="#2f8ae6" stroke-width="1.7" stroke-linejoin="round" stroke-linecap="round"/>
<polyline points="744.3,273.8 738.5,273.8 732.7,274.9 726.8,276.6 720.6,278.4 718.2,273.3 715.9,260.5 711.3,261.0 700.6,261.0 686.6,266.3 679.6,269.1 676.8,274.9 674.5,278.4 670.3,284.2 671.7,289.6 671.0,294.2 664.0,297.0 662.9,307.5 657.8,309.8 650.1,312.8 646.1,320.3 646.1,326.1 647.1,331.4 653.6,329.1 662.9,334.7 668.7,334.2 678.0,330.7 685.7,326.8 691.3,323.8 692.7,328.4 695.0,336.6 702.0,338.9 707.1,336.6 705.9,333.1 704.7,326.1 703.6,320.3 709.4,319.1 714.0,319.8 717.5,329.6 719.2,334.2 730.3,331.9 731.5,336.6 760.6,327.2" fill="none" stroke="#2f8ae6" stroke-width="1.7" stroke-linejoin="round" stroke-linecap="round"/>
<polyline points="1210.0,295.8 1205.3,301.7 1215.8,301.0 1220.9,293.5 1225.1,298.2 1229.8,297.0 1236.7,301.7 1240.2,303.3 1248.4,302.4 1249.5,308.6 1255.3,313.3 1255.8,300.5 1257.7,297.0 1263.5,290.7 1273.5,290.0 1278.6,289.3 1277.4,278.4 1276.3,270.3 1280.9,266.8" fill="none" stroke="#1fbb8a" stroke-width="1.7" stroke-linejoin="round" stroke-linecap="round"/>
<polyline points="1276.3,270.3 1270.5,270.3 1264.7,271.4 1258.8,273.1 1252.6,274.9 1250.2,269.8 1247.9,257.0 1243.3,257.5 1232.6,257.5 1218.6,262.8 1211.6,265.6 1208.8,271.4 1206.5,274.9 1202.3,280.7 1203.7,286.1 1203.0,290.7 1196.0,293.5 1194.9,304.0 1189.8,306.3 1182.1,309.3 1178.1,316.8 1178.1,322.6 1179.1,327.9 1185.6,325.6 1194.9,331.2 1200.7,330.7 1210.0,327.2 1217.7,323.3 1223.3,320.3 1224.7,324.9 1227.0,333.1 1234.0,335.4 1239.1,333.1 1237.9,329.6 1236.7,322.6 1235.6,316.8 1241.4,315.6 1246.0,316.3 1249.5,326.1 1251.2,330.7 1262.3,328.4 1263.5,333.1 1292.6,323.7" fill="none" stroke="#1fbb8a" stroke-width="1.7" stroke-linejoin="round" stroke-linecap="round"/>
<polyline points="680.7,340.2 673.8,364.4 680.7,374.8 690.2,389.9 704.4,392.7 705.3,387.4 715.7,388.5 716.4,383.6 726.8,384.9 736.3,385.7 736.7,398.3 735.9,403.1 728.3,400.4 725.4,408.8 724.1,418.4 737.3,423.0 734.2,438.8 742.1,441.9 738.8,451.4 740.9,465.4 741.5,468.1 752.6,468.8 753.1,460.4 762.5,454.9 767.3,460.8 778.6,473.8 787.6,478.6 780.7,483.4 774.4,491.8 766.0,493.9 742.6,496.8" fill="none" stroke="#e0607d" stroke-width="1.7" stroke-linejoin="round" stroke-linecap="round"/>
<polyline points="975.0,251.3 968.1,275.5 975.0,285.9 984.5,301.0 998.7,303.8 999.6,298.5 1010.0,299.6 1010.7,294.7 1021.1,296.0 1030.6,296.8 1031.0,309.4 1030.2,314.2 1022.6,311.5 1019.7,319.9 1018.4,329.5 1031.6,334.1 1028.5,349.9 1036.4,353.0 1033.1,362.5 1035.2,376.5 1035.8,379.2 1046.9,379.9 1047.4,371.5 1056.8,366.0 1061.6,371.9 1072.9,384.9 1081.9,389.7 1075.0,394.5 1068.7,402.9 1060.3,405.0 1036.9,407.9" fill="none" stroke="#e0607d" stroke-width="1.7" stroke-linejoin="round" stroke-linecap="round"/>
<polyline points="1269.7,451.8 1262.8,476.0 1269.7,486.4 1279.2,501.5 1293.4,504.3 1294.3,499.0 1304.7,500.1 1305.4,495.2 1315.8,496.5 1325.3,497.3 1325.7,509.9 1324.9,514.7 1317.3,512.0 1314.4,520.4 1313.1,530.0 1326.3,534.6 1323.2,550.4 1331.1,553.5 1327.8,563.0 1329.9,577.0 1330.5,579.7 1341.6,580.4 1342.1,572.0 1351.5,566.5 1356.3,572.4 1367.6,585.4 1376.6,590.2 1369.7,595.0 1363.4,603.4 1355.0,605.5 1331.6,608.4" fill="none" stroke="#e0607d" stroke-width="1.7" stroke-linejoin="round" stroke-linecap="round"/>
<polyline points="939.7,572.5 936.2,582.3 946.0,580.0 967.6,576.0 968.3,591.6 974.6,597.0 972.9,587.0 975.7,578.3 981.5,573.0 992.0,570.7 991.5,582.3 995.5,587.0 994.3,577.7 1011.8,567.2 1020.4,565.3 1019.4,554.4 1018.0,548.1 1017.6,541.6 1028.0,540.4 1027.3,535.1 1021.1,536.5 1009.4,538.1 997.8,539.3 1003.2,535.1 1009.4,534.2 1009.4,529.5 1007.8,525.3 1021.1,523.5 1024.6,517.9 1045.0,514.9 1043.6,508.6 1042.0,499.7 1035.0,500.9 1023.4,503.9 1024.1,509.0 1017.6,509.5 1017.1,499.7 1011.8,500.9 1008.3,500.9 1003.2,490.0 1021.1,485.8 1019.9,481.1 1016.4,482.3 1011.1,478.8 1000.8,476.5 999.4,478.8 992.0,480.7 986.9,482.3 980.4,478.8 979.2,475.3" fill="none" stroke="#2f8ae6" stroke-width="1.7" stroke-linejoin="round" stroke-linecap="round"/>
<polyline points="1157.7,571.8 1154.2,581.6 1164.0,579.3 1185.6,575.3 1186.3,590.9 1192.6,596.3 1190.9,586.3 1193.7,577.6 1199.5,572.3 1210.0,570.0 1209.5,581.6 1213.5,586.3 1212.3,577.0 1229.8,566.5 1238.4,564.6 1237.4,553.7 1236.0,547.4 1235.6,540.9 1246.0,539.7 1245.3,534.4 1239.1,535.8 1227.4,537.4 1215.8,538.6 1221.2,534.4 1227.4,533.5 1227.4,528.8 1225.8,524.6 1239.1,522.8 1242.6,517.2 1263.0,514.2 1261.6,507.9 1260.0,499.0 1253.0,500.2 1241.4,503.2 1242.1,508.3 1235.6,508.8 1235.1,499.0 1229.8,500.2 1226.3,500.2 1221.2,489.3 1239.1,485.1 1237.9,480.4 1234.4,481.6 1229.1,478.1 1218.8,475.8 1217.4,478.1 1210.0,480.0 1204.9,481.6 1198.4,478.1 1197.2,474.6" fill="none" stroke="#2f8ae6" stroke-width="1.7" stroke-linejoin="round" stroke-linecap="round"/>
<polyline points="1280.5,721.2 1277.0,731.0 1286.8,728.7 1308.4,724.7 1309.1,740.3 1315.4,745.7 1313.7,735.7 1316.5,727.0 1322.3,721.7 1332.8,719.4 1332.3,731.0 1336.3,735.7 1335.1,726.4 1352.6,715.9 1361.2,714.0 1360.2,703.1 1358.8,696.8 1358.4,690.3 1368.8,689.1 1368.1,683.8 1361.9,685.2 1350.2,686.8 1338.6,688.0 1344.0,683.8 1350.2,682.9 1350.2,678.2 1348.6,674.0 1361.9,672.2 1365.4,666.6 1385.8,663.6 1384.4,657.3 1382.8,648.4 1375.8,649.6 1364.2,652.6 1364.9,657.7 1358.4,658.2 1357.9,648.4 1352.6,649.6 1349.1,649.6 1344.0,638.7 1361.9,634.5 1360.7,629.8 1357.2,631.0 1351.9,627.5 1341.6,625.2 1340.2,627.5 1332.8,629.4 1327.7,631.0 1321.2,627.5 1320.0,624.0" fill="none" stroke="#2f8ae6" stroke-width="1.7" stroke-linejoin="round" stroke-linecap="round"/>
<polyline points="919.3,303.9 919.6,289.6 907.2,286.0 902.1,304.7 881.2,308.7 882.3,320.6 883.1,324.0 868.5,323.7 869.6,332.5 870.7,340.4 883.9,338.3 884.7,343.6 891.0,343.1 891.8,353.1 885.5,353.6 886.6,361.8 880.7,376.9 869.5,374.1 869.5,368.1 855.3,370.6 855.3,380.9 855.3,386.4 876.0,387.2 857.4,417.8 847.6,436.3 843.0,445.4 828.0,441.6 828.4,451.0 849.4,453.1 861.1,450.0 873.2,447.5 883.9,446.1 891.9,444.7 891.6,440.5 898.3,439.8 897.9,431.8 912.6,429.0 914.7,441.2 920.3,440.5 919.8,428.6 921.0,416.7 922.1,405.8 923.1,396.5 923.5,389.5 942.6,386.2 942.7,381.4 947.3,371.4 959.4,371.4 959.0,365.6 959.0,360.5 969.2,360.5 968.7,371.4 968.7,380.7 968.7,387.0 987.8,386.5 990.8,359.8 1006.4,362.1 1004.1,374.9 1013.0,374.9 1021.1,373.0 1025.0,393.5 1026.9,409.8 1036.9,407.9" fill="none" stroke="#2f8ae6" stroke-width="1.7" stroke-linejoin="round" stroke-linecap="round"/>
<circle cx="589.6" cy="176.9" r="2.1" fill="#1cb2d6"/><circle cx="589.6" cy="176.9" r="1.05" fill="#8be4f7"/>
<circle cx="578.5" cy="177.3" r="2.1" fill="#1cb2d6"/><circle cx="578.5" cy="177.3" r="1.05" fill="#8be4f7"/>
<circle cx="577.4" cy="173.8" r="2.1" fill="#1cb2d6"/><circle cx="577.4" cy="173.8" r="1.05" fill="#8be4f7"/>
<circle cx="582.4" cy="171.5" r="2.1" fill="#1cb2d6"/><circle cx="582.4" cy="171.5" r="1.05" fill="#8be4f7"/>
<circle cx="585.4" cy="168.9" r="2.1" fill="#1cb2d6"/><circle cx="585.4" cy="168.9" r="1.05" fill="#8be4f7"/>
<circle cx="587.3" cy="164.3" r="2.1" fill="#1cb2d6"/><circle cx="587.3" cy="164.3" r="1.05" fill="#8be4f7"/>
<circle cx="594.2" cy="163.1" r="2.1" fill="#1cb2d6"/><circle cx="594.2" cy="163.1" r="1.05" fill="#8be4f7"/>
<circle cx="599.9" cy="161.6" r="2.1" fill="#1cb2d6"/><circle cx="599.9" cy="161.6" r="1.05" fill="#8be4f7"/>
<circle cx="606.3" cy="159.7" r="2.1" fill="#1cb2d6"/><circle cx="606.3" cy="159.7" r="1.05" fill="#8be4f7"/>
<circle cx="609.3" cy="153.6" r="2.1" fill="#1cb2d6"/><circle cx="609.3" cy="153.6" r="1.05" fill="#8be4f7"/>
<circle cx="607.0" cy="144.4" r="2.1" fill="#1cb2d6"/><circle cx="607.0" cy="144.4" r="1.05" fill="#8be4f7"/>
<circle cx="606.8" cy="139.5" r="2.1" fill="#1cb2d6"/><circle cx="606.8" cy="139.5" r="1.05" fill="#8be4f7"/>
<circle cx="601.8" cy="131.5" r="2.1" fill="#1cb2d6"/><circle cx="601.8" cy="131.5" r="1.05" fill="#8be4f7"/>
<circle cx="600.3" cy="126.1" r="2.1" fill="#1cb2d6"/><circle cx="600.3" cy="126.1" r="1.05" fill="#8be4f7"/>
<circle cx="596.1" cy="123.4" r="2.1" fill="#1cb2d6"/><circle cx="596.1" cy="123.4" r="1.05" fill="#8be4f7"/>
<circle cx="594.4" cy="131.5" r="2.1" fill="#1cb2d6"/><circle cx="594.4" cy="131.5" r="1.05" fill="#8be4f7"/>
<circle cx="597.3" cy="137.9" r="2.1" fill="#1cb2d6"/><circle cx="597.3" cy="137.9" r="1.05" fill="#8be4f7"/>
<circle cx="601.1" cy="142.5" r="2.1" fill="#1cb2d6"/><circle cx="601.1" cy="142.5" r="1.05" fill="#8be4f7"/>
<circle cx="605.3" cy="147.1" r="2.1" fill="#1cb2d6"/><circle cx="605.3" cy="147.1" r="1.05" fill="#8be4f7"/>
<circle cx="603.7" cy="149.0" r="2.1" fill="#1cb2d6"/><circle cx="603.7" cy="149.0" r="1.05" fill="#8be4f7"/>
<circle cx="595.0" cy="151.7" r="2.1" fill="#1cb2d6"/><circle cx="595.0" cy="151.7" r="1.05" fill="#8be4f7"/>
<circle cx="589.6" cy="156.5" r="2.1" fill="#1cb2d6"/><circle cx="589.6" cy="156.5" r="1.05" fill="#8be4f7"/>
<circle cx="585.0" cy="157.4" r="2.1" fill="#1cb2d6"/><circle cx="585.0" cy="157.4" r="1.05" fill="#8be4f7"/>
<circle cx="584.3" cy="160.5" r="2.1" fill="#1cb2d6"/><circle cx="584.3" cy="160.5" r="1.05" fill="#8be4f7"/>
<circle cx="576.0" cy="162.0" r="2.1" fill="#1cb2d6"/><circle cx="576.0" cy="162.0" r="1.05" fill="#8be4f7"/>
<circle cx="570.9" cy="161.6" r="2.1" fill="#1cb2d6"/><circle cx="570.9" cy="161.6" r="1.05" fill="#8be4f7"/>
<circle cx="568.9" cy="153.2" r="2.1" fill="#1cb2d6"/><circle cx="568.9" cy="153.2" r="1.05" fill="#8be4f7"/>
<circle cx="572.8" cy="147.1" r="2.1" fill="#1cb2d6"/><circle cx="572.8" cy="147.1" r="1.05" fill="#8be4f7"/>
<circle cx="569.4" cy="144.0" r="2.1" fill="#1cb2d6"/><circle cx="569.4" cy="144.0" r="1.05" fill="#8be4f7"/>
<circle cx="566.7" cy="147.5" r="2.1" fill="#1cb2d6"/><circle cx="566.7" cy="147.5" r="1.05" fill="#8be4f7"/>
<circle cx="565.3" cy="138.7" r="2.1" fill="#1cb2d6"/><circle cx="565.3" cy="138.7" r="1.05" fill="#8be4f7"/>
<circle cx="561.4" cy="133.4" r="2.1" fill="#1cb2d6"/><circle cx="561.4" cy="133.4" r="1.05" fill="#8be4f7"/>
<circle cx="560.5" cy="146.0" r="2.1" fill="#1cb2d6"/><circle cx="560.5" cy="146.0" r="1.05" fill="#8be4f7"/>
<circle cx="565.6" cy="169.2" r="2.1" fill="#1cb2d6"/><circle cx="565.6" cy="169.2" r="1.05" fill="#8be4f7"/>
<circle cx="569.4" cy="175.3" r="2.1" fill="#1cb2d6"/><circle cx="569.4" cy="175.3" r="1.05" fill="#8be4f7"/>
<circle cx="573.2" cy="178.4" r="2.1" fill="#1cb2d6"/><circle cx="573.2" cy="178.4" r="1.05" fill="#8be4f7"/>
<circle cx="576.0" cy="191.9" r="2.1" fill="#1cb2d6"/><circle cx="576.0" cy="191.9" r="1.05" fill="#8be4f7"/>
<circle cx="580.2" cy="197.7" r="2.1" fill="#1cb2d6"/><circle cx="580.2" cy="197.7" r="1.05" fill="#8be4f7"/>
<circle cx="573.7" cy="203.5" r="2.1" fill="#1cb2d6"/><circle cx="573.7" cy="203.5" r="1.05" fill="#8be4f7"/>
<circle cx="569.5" cy="204.7" r="2.1" fill="#1cb2d6"/><circle cx="569.5" cy="204.7" r="1.05" fill="#8be4f7"/>
<circle cx="578.3" cy="216.3" r="2.1" fill="#1cb2d6"/><circle cx="578.3" cy="216.3" r="1.05" fill="#8be4f7"/>
<circle cx="589.5" cy="214.0" r="2.1" fill="#1cb2d6"/><circle cx="589.5" cy="214.0" r="1.05" fill="#8be4f7"/>
<circle cx="580.7" cy="221.7" r="2.1" fill="#1cb2d6"/><circle cx="580.7" cy="221.7" r="1.05" fill="#8be4f7"/>
<circle cx="570.2" cy="224.4" r="2.1" fill="#1cb2d6"/><circle cx="570.2" cy="224.4" r="1.05" fill="#8be4f7"/>
<circle cx="570.9" cy="231.9" r="2.1" fill="#1cb2d6"/><circle cx="570.9" cy="231.9" r="1.05" fill="#8be4f7"/>
<circle cx="585.3" cy="233.7" r="2.1" fill="#1cb2d6"/><circle cx="585.3" cy="233.7" r="1.05" fill="#8be4f7"/>
<circle cx="593.5" cy="231.0" r="2.1" fill="#1cb2d6"/><circle cx="593.5" cy="231.0" r="1.05" fill="#8be4f7"/>
<circle cx="679.1" cy="451.2" r="2.1" fill="#bf4fe0"/><circle cx="679.1" cy="451.2" r="1.05" fill="#e6a8f7"/>
<circle cx="668.0" cy="451.6" r="2.1" fill="#bf4fe0"/><circle cx="668.0" cy="451.6" r="1.05" fill="#e6a8f7"/>
<circle cx="666.9" cy="448.1" r="2.1" fill="#bf4fe0"/><circle cx="666.9" cy="448.1" r="1.05" fill="#e6a8f7"/>
<circle cx="671.9" cy="445.8" r="2.1" fill="#bf4fe0"/><circle cx="671.9" cy="445.8" r="1.05" fill="#e6a8f7"/>
<circle cx="674.9" cy="443.2" r="2.1" fill="#bf4fe0"/><circle cx="674.9" cy="443.2" r="1.05" fill="#e6a8f7"/>
<circle cx="676.8" cy="438.6" r="2.1" fill="#bf4fe0"/><circle cx="676.8" cy="438.6" r="1.05" fill="#e6a8f7"/>
<circle cx="683.7" cy="437.4" r="2.1" fill="#bf4fe0"/><circle cx="683.7" cy="437.4" r="1.05" fill="#e6a8f7"/>
<circle cx="689.4" cy="435.9" r="2.1" fill="#bf4fe0"/><circle cx="689.4" cy="435.9" r="1.05" fill="#e6a8f7"/>
<circle cx="695.8" cy="434.0" r="2.1" fill="#bf4fe0"/><circle cx="695.8" cy="434.0" r="1.05" fill="#e6a8f7"/>
<circle cx="698.8" cy="427.9" r="2.1" fill="#bf4fe0"/><circle cx="698.8" cy="427.9" r="1.05" fill="#e6a8f7"/>
<circle cx="696.5" cy="418.7" r="2.1" fill="#bf4fe0"/><circle cx="696.5" cy="418.7" r="1.05" fill="#e6a8f7"/>
<circle cx="696.3" cy="413.8" r="2.1" fill="#bf4fe0"/><circle cx="696.3" cy="413.8" r="1.05" fill="#e6a8f7"/>
<circle cx="691.3" cy="405.8" r="2.1" fill="#bf4fe0"/><circle cx="691.3" cy="405.8" r="1.05" fill="#e6a8f7"/>
<circle cx="689.8" cy="400.4" r="2.1" fill="#bf4fe0"/><circle cx="689.8" cy="400.4" r="1.05" fill="#e6a8f7"/>
<circle cx="685.6" cy="397.7" r="2.1" fill="#bf4fe0"/><circle cx="685.6" cy="397.7" r="1.05" fill="#e6a8f7"/>
<circle cx="683.9" cy="405.8" r="2.1" fill="#bf4fe0"/><circle cx="683.9" cy="405.8" r="1.05" fill="#e6a8f7"/>
<circle cx="686.8" cy="412.2" r="2.1" fill="#bf4fe0"/><circle cx="686.8" cy="412.2" r="1.05" fill="#e6a8f7"/>
<circle cx="690.6" cy="416.8" r="2.1" fill="#bf4fe0"/><circle cx="690.6" cy="416.8" r="1.05" fill="#e6a8f7"/>
<circle cx="694.8" cy="421.4" r="2.1" fill="#bf4fe0"/><circle cx="694.8" cy="421.4" r="1.05" fill="#e6a8f7"/>
<circle cx="693.2" cy="423.3" r="2.1" fill="#bf4fe0"/><circle cx="693.2" cy="423.3" r="1.05" fill="#e6a8f7"/>
<circle cx="684.5" cy="426.0" r="2.1" fill="#bf4fe0"/><circle cx="684.5" cy="426.0" r="1.05" fill="#e6a8f7"/>
<circle cx="679.1" cy="430.8" r="2.1" fill="#bf4fe0"/><circle cx="679.1" cy="430.8" r="1.05" fill="#e6a8f7"/>
<circle cx="674.5" cy="431.7" r="2.1" fill="#bf4fe0"/><circle cx="674.5" cy="431.7" r="1.05" fill="#e6a8f7"/>
<circle cx="673.8" cy="434.8" r="2.1" fill="#bf4fe0"/><circle cx="673.8" cy="434.8" r="1.05" fill="#e6a8f7"/>
<circle cx="665.5" cy="436.3" r="2.1" fill="#bf4fe0"/><circle cx="665.5" cy="436.3" r="1.05" fill="#e6a8f7"/>
<circle cx="660.4" cy="435.9" r="2.1" fill="#bf4fe0"/><circle cx="660.4" cy="435.9" r="1.05" fill="#e6a8f7"/>
<circle cx="658.4" cy="427.5" r="2.1" fill="#bf4fe0"/><circle cx="658.4" cy="427.5" r="1.05" fill="#e6a8f7"/>
<circle cx="662.3" cy="421.4" r="2.1" fill="#bf4fe0"/><circle cx="662.3" cy="421.4" r="1.05" fill="#e6a8f7"/>
<circle cx="658.9" cy="418.3" r="2.1" fill="#bf4fe0"/><circle cx="658.9" cy="418.3" r="1.05" fill="#e6a8f7"/>
<circle cx="656.2" cy="421.8" r="2.1" fill="#bf4fe0"/><circle cx="656.2" cy="421.8" r="1.05" fill="#e6a8f7"/>
<circle cx="654.8" cy="413.0" r="2.1" fill="#bf4fe0"/><circle cx="654.8" cy="413.0" r="1.05" fill="#e6a8f7"/>
<circle cx="650.9" cy="407.7" r="2.1" fill="#bf4fe0"/><circle cx="650.9" cy="407.7" r="1.05" fill="#e6a8f7"/>
<circle cx="650.0" cy="420.3" r="2.1" fill="#bf4fe0"/><circle cx="650.0" cy="420.3" r="1.05" fill="#e6a8f7"/>
<circle cx="655.1" cy="443.5" r="2.1" fill="#bf4fe0"/><circle cx="655.1" cy="443.5" r="1.05" fill="#e6a8f7"/>
<circle cx="658.9" cy="449.6" r="2.1" fill="#bf4fe0"/><circle cx="658.9" cy="449.6" r="1.05" fill="#e6a8f7"/>
<circle cx="662.7" cy="452.7" r="2.1" fill="#bf4fe0"/><circle cx="662.7" cy="452.7" r="1.05" fill="#e6a8f7"/>
<circle cx="665.5" cy="466.2" r="2.1" fill="#bf4fe0"/><circle cx="665.5" cy="466.2" r="1.05" fill="#e6a8f7"/>
<circle cx="669.7" cy="472.0" r="2.1" fill="#bf4fe0"/><circle cx="669.7" cy="472.0" r="1.05" fill="#e6a8f7"/>
<circle cx="663.2" cy="477.8" r="2.1" fill="#bf4fe0"/><circle cx="663.2" cy="477.8" r="1.05" fill="#e6a8f7"/>
<circle cx="659.0" cy="479.0" r="2.1" fill="#bf4fe0"/><circle cx="659.0" cy="479.0" r="1.05" fill="#e6a8f7"/>
<circle cx="667.8" cy="490.6" r="2.1" fill="#bf4fe0"/><circle cx="667.8" cy="490.6" r="1.05" fill="#e6a8f7"/>
<circle cx="679.0" cy="488.3" r="2.1" fill="#bf4fe0"/><circle cx="679.0" cy="488.3" r="1.05" fill="#e6a8f7"/>
<circle cx="670.2" cy="496.0" r="2.1" fill="#bf4fe0"/><circle cx="670.2" cy="496.0" r="1.05" fill="#e6a8f7"/>
<circle cx="659.7" cy="498.7" r="2.1" fill="#bf4fe0"/><circle cx="659.7" cy="498.7" r="1.05" fill="#e6a8f7"/>
<circle cx="660.4" cy="506.2" r="2.1" fill="#bf4fe0"/><circle cx="660.4" cy="506.2" r="1.05" fill="#e6a8f7"/>
<circle cx="674.8" cy="508.0" r="2.1" fill="#bf4fe0"/><circle cx="674.8" cy="508.0" r="1.05" fill="#e6a8f7"/>
<circle cx="683.0" cy="505.3" r="2.1" fill="#bf4fe0"/><circle cx="683.0" cy="505.3" r="1.05" fill="#e6a8f7"/>
<circle cx="1316.9" cy="420.9" r="2.1" fill="#1cb2d6"/><circle cx="1316.9" cy="420.9" r="1.05" fill="#8be4f7"/>
<circle cx="1305.8" cy="421.3" r="2.1" fill="#1cb2d6"/><circle cx="1305.8" cy="421.3" r="1.05" fill="#8be4f7"/>
<circle cx="1304.7" cy="417.8" r="2.1" fill="#1cb2d6"/><circle cx="1304.7" cy="417.8" r="1.05" fill="#8be4f7"/>
<circle cx="1309.7" cy="415.5" r="2.1" fill="#1cb2d6"/><circle cx="1309.7" cy="415.5" r="1.05" fill="#8be4f7"/>
<circle cx="1312.7" cy="412.9" r="2.1" fill="#1cb2d6"/><circle cx="1312.7" cy="412.9" r="1.05" fill="#8be4f7"/>
<circle cx="1314.6" cy="408.3" r="2.1" fill="#1cb2d6"/><circle cx="1314.6" cy="408.3" r="1.05" fill="#8be4f7"/>
<circle cx="1321.5" cy="407.1" r="2.1" fill="#1cb2d6"/><circle cx="1321.5" cy="407.1" r="1.05" fill="#8be4f7"/>
<circle cx="1327.2" cy="405.6" r="2.1" fill="#1cb2d6"/><circle cx="1327.2" cy="405.6" r="1.05" fill="#8be4f7"/>
<circle cx="1333.6" cy="403.7" r="2.1" fill="#1cb2d6"/><circle cx="1333.6" cy="403.7" r="1.05" fill="#8be4f7"/>
<circle cx="1336.6" cy="397.6" r="2.1" fill="#1cb2d6"/><circle cx="1336.6" cy="397.6" r="1.05" fill="#8be4f7"/>
<circle cx="1334.3" cy="388.4" r="2.1" fill="#1cb2d6"/><circle cx="1334.3" cy="388.4" r="1.05" fill="#8be4f7"/>
<circle cx="1334.1" cy="383.5" r="2.1" fill="#1cb2d6"/><circle cx="1334.1" cy="383.5" r="1.05" fill="#8be4f7"/>
<circle cx="1329.1" cy="375.5" r="2.1" fill="#1cb2d6"/><circle cx="1329.1" cy="375.5" r="1.05" fill="#8be4f7"/>
<circle cx="1327.6" cy="370.1" r="2.1" fill="#1cb2d6"/><circle cx="1327.6" cy="370.1" r="1.05" fill="#8be4f7"/>
<circle cx="1323.4" cy="367.4" r="2.1" fill="#1cb2d6"/><circle cx="1323.4" cy="367.4" r="1.05" fill="#8be4f7"/>
<circle cx="1321.7" cy="375.5" r="2.1" fill="#1cb2d6"/><circle cx="1321.7" cy="375.5" r="1.05" fill="#8be4f7"/>
<circle cx="1324.6" cy="381.9" r="2.1" fill="#1cb2d6"/><circle cx="1324.6" cy="381.9" r="1.05" fill="#8be4f7"/>
<circle cx="1328.4" cy="386.5" r="2.1" fill="#1cb2d6"/><circle cx="1328.4" cy="386.5" r="1.05" fill="#8be4f7"/>
<circle cx="1332.6" cy="391.1" r="2.1" fill="#1cb2d6"/><circle cx="1332.6" cy="391.1" r="1.05" fill="#8be4f7"/>
<circle cx="1331.0" cy="393.0" r="2.1" fill="#1cb2d6"/><circle cx="1331.0" cy="393.0" r="1.05" fill="#8be4f7"/>
<circle cx="1322.3" cy="395.7" r="2.1" fill="#1cb2d6"/><circle cx="1322.3" cy="395.7" r="1.05" fill="#8be4f7"/>
<circle cx="1316.9" cy="400.5" r="2.1" fill="#1cb2d6"/><circle cx="1316.9" cy="400.5" r="1.05" fill="#8be4f7"/>
<circle cx="1312.3" cy="401.4" r="2.1" fill="#1cb2d6"/><circle cx="1312.3" cy="401.4" r="1.05" fill="#8be4f7"/>
<circle cx="1311.6" cy="404.5" r="2.1" fill="#1cb2d6"/><circle cx="1311.6" cy="404.5" r="1.05" fill="#8be4f7"/>
<circle cx="1303.3" cy="406.0" r="2.1" fill="#1cb2d6"/><circle cx="1303.3" cy="406.0" r="1.05" fill="#8be4f7"/>
<circle cx="1298.2" cy="405.6" r="2.1" fill="#1cb2d6"/><circle cx="1298.2" cy="405.6" r="1.05" fill="#8be4f7"/>
<circle cx="1296.2" cy="397.2" r="2.1" fill="#1cb2d6"/><circle cx="1296.2" cy="397.2" r="1.05" fill="#8be4f7"/>
<circle cx="1300.1" cy="391.1" r="2.1" fill="#1cb2d6"/><circle cx="1300.1" cy="391.1" r="1.05" fill="#8be4f7"/>
<circle cx="1296.7" cy="388.0" r="2.1" fill="#1cb2d6"/><circle cx="1296.7" cy="388.0" r="1.05" fill="#8be4f7"/>
<circle cx="1294.0" cy="391.5" r="2.1" fill="#1cb2d6"/><circle cx="1294.0" cy="391.5" r="1.05" fill="#8be4f7"/>
<circle cx="1292.6" cy="382.7" r="2.1" fill="#1cb2d6"/><circle cx="1292.6" cy="382.7" r="1.05" fill="#8be4f7"/>
<circle cx="1288.7" cy="377.4" r="2.1" fill="#1cb2d6"/><circle cx="1288.7" cy="377.4" r="1.05" fill="#8be4f7"/>
<circle cx="1287.8" cy="390.0" r="2.1" fill="#1cb2d6"/><circle cx="1287.8" cy="390.0" r="1.05" fill="#8be4f7"/>
<circle cx="1292.9" cy="413.2" r="2.1" fill="#1cb2d6"/><circle cx="1292.9" cy="413.2" r="1.05" fill="#8be4f7"/>
<circle cx="1296.7" cy="419.3" r="2.1" fill="#1cb2d6"/><circle cx="1296.7" cy="419.3" r="1.05" fill="#8be4f7"/>
<circle cx="1300.5" cy="422.4" r="2.1" fill="#1cb2d6"/><circle cx="1300.5" cy="422.4" r="1.05" fill="#8be4f7"/>
<circle cx="1303.3" cy="435.9" r="2.1" fill="#1cb2d6"/><circle cx="1303.3" cy="435.9" r="1.05" fill="#8be4f7"/>
<circle cx="1307.5" cy="441.7" r="2.1" fill="#1cb2d6"/><circle cx="1307.5" cy="441.7" r="1.05" fill="#8be4f7"/>
<circle cx="1301.0" cy="447.5" r="2.1" fill="#1cb2d6"/><circle cx="1301.0" cy="447.5" r="1.05" fill="#8be4f7"/>
<circle cx="1296.8" cy="448.7" r="2.1" fill="#1cb2d6"/><circle cx="1296.8" cy="448.7" r="1.05" fill="#8be4f7"/>
<circle cx="1305.6" cy="460.3" r="2.1" fill="#1cb2d6"/><circle cx="1305.6" cy="460.3" r="1.05" fill="#8be4f7"/>
<circle cx="1316.8" cy="458.0" r="2.1" fill="#1cb2d6"/><circle cx="1316.8" cy="458.0" r="1.05" fill="#8be4f7"/>
<circle cx="1308.0" cy="465.7" r="2.1" fill="#1cb2d6"/><circle cx="1308.0" cy="465.7" r="1.05" fill="#8be4f7"/>
<circle cx="1297.5" cy="468.4" r="2.1" fill="#1cb2d6"/><circle cx="1297.5" cy="468.4" r="1.05" fill="#8be4f7"/>
<circle cx="1298.2" cy="475.9" r="2.1" fill="#1cb2d6"/><circle cx="1298.2" cy="475.9" r="1.05" fill="#8be4f7"/>
<circle cx="1312.6" cy="477.7" r="2.1" fill="#1cb2d6"/><circle cx="1312.6" cy="477.7" r="1.05" fill="#8be4f7"/>
<circle cx="1320.8" cy="475.0" r="2.1" fill="#1cb2d6"/><circle cx="1320.8" cy="475.0" r="1.05" fill="#8be4f7"/>
<circle cx="1035.1" cy="205.2" r="2.1" fill="#bf4fe0"/><circle cx="1035.1" cy="205.2" r="1.05" fill="#e6a8f7"/>
<circle cx="1024.0" cy="205.6" r="2.1" fill="#bf4fe0"/><circle cx="1024.0" cy="205.6" r="1.05" fill="#e6a8f7"/>
<circle cx="1022.9" cy="202.1" r="2.1" fill="#bf4fe0"/><circle cx="1022.9" cy="202.1" r="1.05" fill="#e6a8f7"/>
<circle cx="1027.9" cy="199.8" r="2.1" fill="#bf4fe0"/><circle cx="1027.9" cy="199.8" r="1.05" fill="#e6a8f7"/>
<circle cx="1030.9" cy="197.2" r="2.1" fill="#bf4fe0"/><circle cx="1030.9" cy="197.2" r="1.05" fill="#e6a8f7"/>
<circle cx="1032.8" cy="192.6" r="2.1" fill="#bf4fe0"/><circle cx="1032.8" cy="192.6" r="1.05" fill="#e6a8f7"/>
<circle cx="1039.7" cy="191.4" r="2.1" fill="#bf4fe0"/><circle cx="1039.7" cy="191.4" r="1.05" fill="#e6a8f7"/>
<circle cx="1045.4" cy="189.9" r="2.1" fill="#bf4fe0"/><circle cx="1045.4" cy="189.9" r="1.05" fill="#e6a8f7"/>
<circle cx="1051.8" cy="188.0" r="2.1" fill="#bf4fe0"/><circle cx="1051.8" cy="188.0" r="1.05" fill="#e6a8f7"/>
<circle cx="1054.8" cy="181.9" r="2.1" fill="#bf4fe0"/><circle cx="1054.8" cy="181.9" r="1.05" fill="#e6a8f7"/>
<circle cx="1052.5" cy="172.7" r="2.1" fill="#bf4fe0"/><circle cx="1052.5" cy="172.7" r="1.05" fill="#e6a8f7"/>
<circle cx="1052.3" cy="167.8" r="2.1" fill="#bf4fe0"/><circle cx="1052.3" cy="167.8" r="1.05" fill="#e6a8f7"/>
<circle cx="1047.3" cy="159.8" r="2.1" fill="#bf4fe0"/><circle cx="1047.3" cy="159.8" r="1.05" fill="#e6a8f7"/>
<circle cx="1045.8" cy="154.4" r="2.1" fill="#bf4fe0"/><circle cx="1045.8" cy="154.4" r="1.05" fill="#e6a8f7"/>
<circle cx="1041.6" cy="151.7" r="2.1" fill="#bf4fe0"/><circle cx="1041.6" cy="151.7" r="1.05" fill="#e6a8f7"/>
<circle cx="1039.9" cy="159.8" r="2.1" fill="#bf4fe0"/><circle cx="1039.9" cy="159.8" r="1.05" fill="#e6a8f7"/>
<circle cx="1042.8" cy="166.2" r="2.1" fill="#bf4fe0"/><circle cx="1042.8" cy="166.2" r="1.05" fill="#e6a8f7"/>
<circle cx="1046.6" cy="170.8" r="2.1" fill="#bf4fe0"/><circle cx="1046.6" cy="170.8" r="1.05" fill="#e6a8f7"/>
<circle cx="1050.8" cy="175.4" r="2.1" fill="#bf4fe0"/><circle cx="1050.8" cy="175.4" r="1.05" fill="#e6a8f7"/>
<circle cx="1049.2" cy="177.3" r="2.1" fill="#bf4fe0"/><circle cx="1049.2" cy="177.3" r="1.05" fill="#e6a8f7"/>
<circle cx="1040.5" cy="180.0" r="2.1" fill="#bf4fe0"/><circle cx="1040.5" cy="180.0" r="1.05" fill="#e6a8f7"/>
<circle cx="1035.1" cy="184.8" r="2.1" fill="#bf4fe0"/><circle cx="1035.1" cy="184.8" r="1.05" fill="#e6a8f7"/>
<circle cx="1030.5" cy="185.7" r="2.1" fill="#bf4fe0"/><circle cx="1030.5" cy="185.7" r="1.05" fill="#e6a8f7"/>
<circle cx="1029.8" cy="188.8" r="2.1" fill="#bf4fe0"/><circle cx="1029.8" cy="188.8" r="1.05" fill="#e6a8f7"/>
<circle cx="1021.5" cy="190.3" r="2.1" fill="#bf4fe0"/><circle cx="1021.5" cy="190.3" r="1.05" fill="#e6a8f7"/>
<circle cx="1016.4" cy="189.9" r="2.1" fill="#bf4fe0"/><circle cx="1016.4" cy="189.9" r="1.05" fill="#e6a8f7"/>
<circle cx="1014.4" cy="181.5" r="2.1" fill="#bf4fe0"/><circle cx="1014.4" cy="181.5" r="1.05" fill="#e6a8f7"/>
<circle cx="1018.3" cy="175.4" r="2.1" fill="#bf4fe0"/><circle cx="1018.3" cy="175.4" r="1.05" fill="#e6a8f7"/>
<circle cx="1014.9" cy="172.3" r="2.1" fill="#bf4fe0"/><circle cx="1014.9" cy="172.3" r="1.05" fill="#e6a8f7"/>
<circle cx="1012.2" cy="175.8" r="2.1" fill="#bf4fe0"/><circle cx="1012.2" cy="175.8" r="1.05" fill="#e6a8f7"/>
<circle cx="1010.8" cy="167.0" r="2.1" fill="#bf4fe0"/><circle cx="1010.8" cy="167.0" r="1.05" fill="#e6a8f7"/>
<circle cx="1006.9" cy="161.7" r="2.1" fill="#bf4fe0"/><circle cx="1006.9" cy="161.7" r="1.05" fill="#e6a8f7"/>
<circle cx="1006.0" cy="174.3" r="2.1" fill="#bf4fe0"/><circle cx="1006.0" cy="174.3" r="1.05" fill="#e6a8f7"/>
<circle cx="1011.1" cy="197.5" r="2.1" fill="#bf4fe0"/><circle cx="1011.1" cy="197.5" r="1.05" fill="#e6a8f7"/>
<circle cx="1014.9" cy="203.6" r="2.1" fill="#bf4fe0"/><circle cx="1014.9" cy="203.6" r="1.05" fill="#e6a8f7"/>
<circle cx="1018.7" cy="206.7" r="2.1" fill="#bf4fe0"/><circle cx="1018.7" cy="206.7" r="1.05" fill="#e6a8f7"/>
<circle cx="1021.5" cy="220.2" r="2.1" fill="#bf4fe0"/><circle cx="1021.5" cy="220.2" r="1.05" fill="#e6a8f7"/>
<circle cx="1025.7" cy="226.0" r="2.1" fill="#bf4fe0"/><circle cx="1025.7" cy="226.0" r="1.05" fill="#e6a8f7"/>
<circle cx="1019.2" cy="231.8" r="2.1" fill="#bf4fe0"/><circle cx="1019.2" cy="231.8" r="1.05" fill="#e6a8f7"/>
<circle cx="1015.0" cy="233.0" r="2.1" fill="#bf4fe0"/><circle cx="1015.0" cy="233.0" r="1.05" fill="#e6a8f7"/>
<circle cx="1023.8" cy="244.6" r="2.1" fill="#bf4fe0"/><circle cx="1023.8" cy="244.6" r="1.05" fill="#e6a8f7"/>
<circle cx="1035.0" cy="242.3" r="2.1" fill="#bf4fe0"/><circle cx="1035.0" cy="242.3" r="1.05" fill="#e6a8f7"/>
<circle cx="1026.2" cy="250.0" r="2.1" fill="#bf4fe0"/><circle cx="1026.2" cy="250.0" r="1.05" fill="#e6a8f7"/>
<circle cx="1015.7" cy="252.7" r="2.1" fill="#bf4fe0"/><circle cx="1015.7" cy="252.7" r="1.05" fill="#e6a8f7"/>
<circle cx="1016.4" cy="260.2" r="2.1" fill="#bf4fe0"/><circle cx="1016.4" cy="260.2" r="1.05" fill="#e6a8f7"/>
<circle cx="1030.8" cy="262.0" r="2.1" fill="#bf4fe0"/><circle cx="1030.8" cy="262.0" r="1.05" fill="#e6a8f7"/>
<circle cx="1039.0" cy="259.3" r="2.1" fill="#bf4fe0"/><circle cx="1039.0" cy="259.3" r="1.05" fill="#e6a8f7"/>
<circle cx="1136.7" cy="585.3" r="2.1" fill="#1fbb8a"/><circle cx="1136.7" cy="585.3" r="1.05" fill="#8cedc9"/>
<circle cx="1125.6" cy="585.7" r="2.1" fill="#1fbb8a"/><circle cx="1125.6" cy="585.7" r="1.05" fill="#8cedc9"/>
<circle cx="1124.5" cy="582.2" r="2.1" fill="#1fbb8a"/><circle cx="1124.5" cy="582.2" r="1.05" fill="#8cedc9"/>
<circle cx="1129.5" cy="579.9" r="2.1" fill="#1fbb8a"/><circle cx="1129.5" cy="579.9" r="1.05" fill="#8cedc9"/>
<circle cx="1132.5" cy="577.3" r="2.1" fill="#1fbb8a"/><circle cx="1132.5" cy="577.3" r="1.05" fill="#8cedc9"/>
<circle cx="1134.4" cy="572.7" r="2.1" fill="#1fbb8a"/><circle cx="1134.4" cy="572.7" r="1.05" fill="#8cedc9"/>
<circle cx="1141.3" cy="571.5" r="2.1" fill="#1fbb8a"/><circle cx="1141.3" cy="571.5" r="1.05" fill="#8cedc9"/>
<circle cx="1147.0" cy="570.0" r="2.1" fill="#1fbb8a"/><circle cx="1147.0" cy="570.0" r="1.05" fill="#8cedc9"/>
<circle cx="1153.4" cy="568.1" r="2.1" fill="#1fbb8a"/><circle cx="1153.4" cy="568.1" r="1.05" fill="#8cedc9"/>
<circle cx="1156.4" cy="562.0" r="2.1" fill="#1fbb8a"/><circle cx="1156.4" cy="562.0" r="1.05" fill="#8cedc9"/>
<circle cx="1154.1" cy="552.8" r="2.1" fill="#1fbb8a"/><circle cx="1154.1" cy="552.8" r="1.05" fill="#8cedc9"/>
<circle cx="1153.9" cy="547.9" r="2.1" fill="#1fbb8a"/><circle cx="1153.9" cy="547.9" r="1.05" fill="#8cedc9"/>
<circle cx="1148.9" cy="539.9" r="2.1" fill="#1fbb8a"/><circle cx="1148.9" cy="539.9" r="1.05" fill="#8cedc9"/>
<circle cx="1147.4" cy="534.5" r="2.1" fill="#1fbb8a"/><circle cx="1147.4" cy="534.5" r="1.05" fill="#8cedc9"/>
<circle cx="1143.2" cy="531.8" r="2.1" fill="#1fbb8a"/><circle cx="1143.2" cy="531.8" r="1.05" fill="#8cedc9"/>
<circle cx="1141.5" cy="539.9" r="2.1" fill="#1fbb8a"/><circle cx="1141.5" cy="539.9" r="1.05" fill="#8cedc9"/>
<circle cx="1144.4" cy="546.3" r="2.1" fill="#1fbb8a"/><circle cx="1144.4" cy="546.3" r="1.05" fill="#8cedc9"/>
<circle cx="1148.2" cy="550.9" r="2.1" fill="#1fbb8a"/><circle cx="1148.2" cy="550.9" r="1.05" fill="#8cedc9"/>
<circle cx="1152.4" cy="555.5" r="2.1" fill="#1fbb8a"/><circle cx="1152.4" cy="555.5" r="1.05" fill="#8cedc9"/>
<circle cx="1150.8" cy="557.4" r="2.1" fill="#1fbb8a"/><circle cx="1150.8" cy="557.4" r="1.05" fill="#8cedc9"/>
<circle cx="1142.1" cy="560.1" r="2.1" fill="#1fbb8a"/><circle cx="1142.1" cy="560.1" r="1.05" fill="#8cedc9"/>
<circle cx="1136.7" cy="564.9" r="2.1" fill="#1fbb8a"/><circle cx="1136.7" cy="564.9" r="1.05" fill="#8cedc9"/>
<circle cx="1132.1" cy="565.8" r="2.1" fill="#1fbb8a"/><circle cx="1132.1" cy="565.8" r="1.05" fill="#8cedc9"/>
<circle cx="1131.4" cy="568.9" r="2.1" fill="#1fbb8a"/><circle cx="1131.4" cy="568.9" r="1.05" fill="#8cedc9"/>
<circle cx="1123.1" cy="570.4" r="2.1" fill="#1fbb8a"/><circle cx="1123.1" cy="570.4" r="1.05" fill="#8cedc9"/>
<circle cx="1118.0" cy="570.0" r="2.1" fill="#1fbb8a"/><circle cx="1118.0" cy="570.0" r="1.05" fill="#8cedc9"/>
<circle cx="1116.0" cy="561.6" r="2.1" fill="#1fbb8a"/><circle cx="1116.0" cy="561.6" r="1.05" fill="#8cedc9"/>
<circle cx="1119.9" cy="555.5" r="2.1" fill="#1fbb8a"/><circle cx="1119.9" cy="555.5" r="1.05" fill="#8cedc9"/>
<circle cx="1116.5" cy="552.4" r="2.1" fill="#1fbb8a"/><circle cx="1116.5" cy="552.4" r="1.05" fill="#8cedc9"/>
<circle cx="1113.8" cy="555.9" r="2.1" fill="#1fbb8a"/><circle cx="1113.8" cy="555.9" r="1.05" fill="#8cedc9"/>
<circle cx="1112.4" cy="547.1" r="2.1" fill="#1fbb8a"/><circle cx="1112.4" cy="547.1" r="1.05" fill="#8cedc9"/>
<circle cx="1108.5" cy="541.8" r="2.1" fill="#1fbb8a"/><circle cx="1108.5" cy="541.8" r="1.05" fill="#8cedc9"/>
<circle cx="1107.6" cy="554.4" r="2.1" fill="#1fbb8a"/><circle cx="1107.6" cy="554.4" r="1.05" fill="#8cedc9"/>
<circle cx="1112.7" cy="577.6" r="2.1" fill="#1fbb8a"/><circle cx="1112.7" cy="577.6" r="1.05" fill="#8cedc9"/>
<circle cx="1116.5" cy="583.7" r="2.1" fill="#1fbb8a"/><circle cx="1116.5" cy="583.7" r="1.05" fill="#8cedc9"/>
<circle cx="1120.3" cy="586.8" r="2.1" fill="#1fbb8a"/><circle cx="1120.3" cy="586.8" r="1.05" fill="#8cedc9"/>
<circle cx="1123.1" cy="600.3" r="2.1" fill="#1fbb8a"/><circle cx="1123.1" cy="600.3" r="1.05" fill="#8cedc9"/>
<circle cx="1127.3" cy="606.1" r="2.1" fill="#1fbb8a"/><circle cx="1127.3" cy="606.1" r="1.05" fill="#8cedc9"/>
<circle cx="1120.8" cy="611.9" r="2.1" fill="#1fbb8a"/><circle cx="1120.8" cy="611.9" r="1.05" fill="#8cedc9"/>
<circle cx="1116.6" cy="613.1" r="2.1" fill="#1fbb8a"/><circle cx="1116.6" cy="613.1" r="1.05" fill="#8cedc9"/>
<circle cx="1125.4" cy="624.7" r="2.1" fill="#1fbb8a"/><circle cx="1125.4" cy="624.7" r="1.05" fill="#8cedc9"/>
<circle cx="1136.6" cy="622.4" r="2.1" fill="#1fbb8a"/><circle cx="1136.6" cy="622.4" r="1.05" fill="#8cedc9"/>
<circle cx="1127.8" cy="630.1" r="2.1" fill="#1fbb8a"/><circle cx="1127.8" cy="630.1" r="1.05" fill="#8cedc9"/>
<circle cx="1117.3" cy="632.8" r="2.1" fill="#1fbb8a"/><circle cx="1117.3" cy="632.8" r="1.05" fill="#8cedc9"/>
<circle cx="1118.0" cy="640.3" r="2.1" fill="#1fbb8a"/><circle cx="1118.0" cy="640.3" r="1.05" fill="#8cedc9"/>
<circle cx="1132.4" cy="642.1" r="2.1" fill="#1fbb8a"/><circle cx="1132.4" cy="642.1" r="1.05" fill="#8cedc9"/>
<circle cx="1140.6" cy="639.4" r="2.1" fill="#1fbb8a"/><circle cx="1140.6" cy="639.4" r="1.05" fill="#8cedc9"/>
<circle cx="872.5" cy="613.9" r="2.1" fill="#2f8ae6"/><circle cx="872.5" cy="613.9" r="1.05" fill="#93c7ff"/>
<circle cx="861.4" cy="614.3" r="2.1" fill="#2f8ae6"/><circle cx="861.4" cy="614.3" r="1.05" fill="#93c7ff"/>
<circle cx="860.3" cy="610.8" r="2.1" fill="#2f8ae6"/><circle cx="860.3" cy="610.8" r="1.05" fill="#93c7ff"/>
<circle cx="865.3" cy="608.5" r="2.1" fill="#2f8ae6"/><circle cx="865.3" cy="608.5" r="1.05" fill="#93c7ff"/>
<circle cx="868.3" cy="605.9" r="2.1" fill="#2f8ae6"/><circle cx="868.3" cy="605.9" r="1.05" fill="#93c7ff"/>
<circle cx="870.2" cy="601.3" r="2.1" fill="#2f8ae6"/><circle cx="870.2" cy="601.3" r="1.05" fill="#93c7ff"/>
<circle cx="877.1" cy="600.1" r="2.1" fill="#2f8ae6"/><circle cx="877.1" cy="600.1" r="1.05" fill="#93c7ff"/>
<circle cx="882.8" cy="598.6" r="2.1" fill="#2f8ae6"/><circle cx="882.8" cy="598.6" r="1.05" fill="#93c7ff"/>
<circle cx="889.2" cy="596.7" r="2.1" fill="#2f8ae6"/><circle cx="889.2" cy="596.7" r="1.05" fill="#93c7ff"/>
<circle cx="892.2" cy="590.6" r="2.1" fill="#2f8ae6"/><circle cx="892.2" cy="590.6" r="1.05" fill="#93c7ff"/>
<circle cx="889.9" cy="581.4" r="2.1" fill="#2f8ae6"/><circle cx="889.9" cy="581.4" r="1.05" fill="#93c7ff"/>
<circle cx="889.7" cy="576.5" r="2.1" fill="#2f8ae6"/><circle cx="889.7" cy="576.5" r="1.05" fill="#93c7ff"/>
<circle cx="884.7" cy="568.5" r="2.1" fill="#2f8ae6"/><circle cx="884.7" cy="568.5" r="1.05" fill="#93c7ff"/>
<circle cx="883.2" cy="563.1" r="2.1" fill="#2f8ae6"/><circle cx="883.2" cy="563.1" r="1.05" fill="#93c7ff"/>
<circle cx="879.0" cy="560.4" r="2.1" fill="#2f8ae6"/><circle cx="879.0" cy="560.4" r="1.05" fill="#93c7ff"/>
<circle cx="877.3" cy="568.5" r="2.1" fill="#2f8ae6"/><circle cx="877.3" cy="568.5" r="1.05" fill="#93c7ff"/>
<circle cx="880.2" cy="574.9" r="2.1" fill="#2f8ae6"/><circle cx="880.2" cy="574.9" r="1.05" fill="#93c7ff"/>
<circle cx="884.0" cy="579.5" r="2.1" fill="#2f8ae6"/><circle cx="884.0" cy="579.5" r="1.05" fill="#93c7ff"/>
<circle cx="888.2" cy="584.1" r="2.1" fill="#2f8ae6"/><circle cx="888.2" cy="584.1" r="1.05" fill="#93c7ff"/>
<circle cx="886.6" cy="586.0" r="2.1" fill="#2f8ae6"/><circle cx="886.6" cy="586.0" r="1.05" fill="#93c7ff"/>
<circle cx="877.9" cy="588.7" r="2.1" fill="#2f8ae6"/><circle cx="877.9" cy="588.7" r="1.05" fill="#93c7ff"/>
<circle cx="872.5" cy="593.5" r="2.1" fill="#2f8ae6"/><circle cx="872.5" cy="593.5" r="1.05" fill="#93c7ff"/>
<circle cx="867.9" cy="594.4" r="2.1" fill="#2f8ae6"/><circle cx="867.9" cy="594.4" r="1.05" fill="#93c7ff"/>
<circle cx="867.2" cy="597.5" r="2.1" fill="#2f8ae6"/><circle cx="867.2" cy="597.5" r="1.05" fill="#93c7ff"/>
<circle cx="858.9" cy="599.0" r="2.1" fill="#2f8ae6"/><circle cx="858.9" cy="599.0" r="1.05" fill="#93c7ff"/>
<circle cx="853.8" cy="598.6" r="2.1" fill="#2f8ae6"/><circle cx="853.8" cy="598.6" r="1.05" fill="#93c7ff"/>
<circle cx="851.8" cy="590.2" r="2.1" fill="#2f8ae6"/><circle cx="851.8" cy="590.2" r="1.05" fill="#93c7ff"/>
<circle cx="855.7" cy="584.1" r="2.1" fill="#2f8ae6"/><circle cx="855.7" cy="584.1" r="1.05" fill="#93c7ff"/>
<circle cx="852.3" cy="581.0" r="2.1" fill="#2f8ae6"/><circle cx="852.3" cy="581.0" r="1.05" fill="#93c7ff"/>
<circle cx="849.6" cy="584.5" r="2.1" fill="#2f8ae6"/><circle cx="849.6" cy="584.5" r="1.05" fill="#93c7ff"/>
<circle cx="848.2" cy="575.7" r="2.1" fill="#2f8ae6"/><circle cx="848.2" cy="575.7" r="1.05" fill="#93c7ff"/>
<circle cx="844.3" cy="570.4" r="2.1" fill="#2f8ae6"/><circle cx="844.3" cy="570.4" r="1.05" fill="#93c7ff"/>
<circle cx="843.4" cy="583.0" r="2.1" fill="#2f8ae6"/><circle cx="843.4" cy="583.0" r="1.05" fill="#93c7ff"/>
<circle cx="848.5" cy="606.2" r="2.1" fill="#2f8ae6"/><circle cx="848.5" cy="606.2" r="1.05" fill="#93c7ff"/>
<circle cx="852.3" cy="612.3" r="2.1" fill="#2f8ae6"/><circle cx="852.3" cy="612.3" r="1.05" fill="#93c7ff"/>
<circle cx="856.1" cy="615.4" r="2.1" fill="#2f8ae6"/><circle cx="856.1" cy="615.4" r="1.05" fill="#93c7ff"/>
<circle cx="858.9" cy="628.9" r="2.1" fill="#2f8ae6"/><circle cx="858.9" cy="628.9" r="1.05" fill="#93c7ff"/>
<circle cx="863.1" cy="634.7" r="2.1" fill="#2f8ae6"/><circle cx="863.1" cy="634.7" r="1.05" fill="#93c7ff"/>
<circle cx="856.6" cy="640.5" r="2.1" fill="#2f8ae6"/><circle cx="856.6" cy="640.5" r="1.05" fill="#93c7ff"/>
<circle cx="852.4" cy="641.7" r="2.1" fill="#2f8ae6"/><circle cx="852.4" cy="641.7" r="1.05" fill="#93c7ff"/>
<circle cx="861.2" cy="653.3" r="2.1" fill="#2f8ae6"/><circle cx="861.2" cy="653.3" r="1.05" fill="#93c7ff"/>
<circle cx="872.4" cy="651.0" r="2.1" fill="#2f8ae6"/><circle cx="872.4" cy="651.0" r="1.05" fill="#93c7ff"/>
<circle cx="863.6" cy="658.7" r="2.1" fill="#2f8ae6"/><circle cx="863.6" cy="658.7" r="1.05" fill="#93c7ff"/>
<circle cx="853.1" cy="661.4" r="2.1" fill="#2f8ae6"/><circle cx="853.1" cy="661.4" r="1.05" fill="#93c7ff"/>
<circle cx="853.8" cy="668.9" r="2.1" fill="#2f8ae6"/><circle cx="853.8" cy="668.9" r="1.05" fill="#93c7ff"/>
<circle cx="868.2" cy="670.7" r="2.1" fill="#2f8ae6"/><circle cx="868.2" cy="670.7" r="1.05" fill="#93c7ff"/>
<circle cx="876.4" cy="668.0" r="2.1" fill="#2f8ae6"/><circle cx="876.4" cy="668.0" r="1.05" fill="#93c7ff"/>
<circle cx="761.3" cy="158.2" r="2.1" fill="#1fbb8a"/><circle cx="761.3" cy="158.2" r="1.05" fill="#8cedc9"/>
<circle cx="779.4" cy="145.4" r="2.1" fill="#1fbb8a"/><circle cx="779.4" cy="145.4" r="1.05" fill="#8cedc9"/>
<circle cx="802.7" cy="134.9" r="2.1" fill="#1fbb8a"/><circle cx="802.7" cy="134.9" r="1.05" fill="#8cedc9"/>
<circle cx="781.7" cy="117.9" r="2.1" fill="#1fbb8a"/><circle cx="781.7" cy="117.9" r="1.05" fill="#8cedc9"/>
<circle cx="780.3" cy="129.1" r="2.1" fill="#1fbb8a"/><circle cx="780.3" cy="129.1" r="1.05" fill="#8cedc9"/>
<circle cx="772.2" cy="128.4" r="2.1" fill="#1fbb8a"/><circle cx="772.2" cy="128.4" r="1.05" fill="#8cedc9"/>
<circle cx="765.4" cy="110.0" r="2.1" fill="#1fbb8a"/><circle cx="765.4" cy="110.0" r="1.05" fill="#8cedc9"/>
<circle cx="766.4" cy="86.8" r="2.1" fill="#1fbb8a"/><circle cx="766.4" cy="86.8" r="1.05" fill="#8cedc9"/>
<circle cx="774.0" cy="86.1" r="2.1" fill="#1fbb8a"/><circle cx="774.0" cy="86.1" r="1.05" fill="#8cedc9"/>
<circle cx="798.5" cy="86.8" r="2.1" fill="#1fbb8a"/><circle cx="798.5" cy="86.8" r="1.05" fill="#8cedc9"/>
<circle cx="835.2" cy="102.3" r="2.1" fill="#1fbb8a"/><circle cx="835.2" cy="102.3" r="1.05" fill="#8cedc9"/>
<circle cx="880.4" cy="92.0" r="2.1" fill="#1fbb8a"/><circle cx="880.4" cy="92.0" r="1.05" fill="#8cedc9"/>
<circle cx="895.2" cy="92.0" r="2.1" fill="#1fbb8a"/><circle cx="895.2" cy="92.0" r="1.05" fill="#8cedc9"/>
<circle cx="893.0" cy="98.2" r="2.1" fill="#1fbb8a"/><circle cx="893.0" cy="98.2" r="1.05" fill="#8cedc9"/>
<circle cx="880.0" cy="118.3" r="2.1" fill="#1fbb8a"/><circle cx="880.0" cy="118.3" r="1.05" fill="#8cedc9"/>
<circle cx="883.0" cy="132.0" r="2.1" fill="#1fbb8a"/><circle cx="883.0" cy="132.0" r="1.05" fill="#8cedc9"/>
<circle cx="891.1" cy="155.3" r="2.1" fill="#1fbb8a"/><circle cx="891.1" cy="155.3" r="1.05" fill="#8cedc9"/>
<circle cx="902.8" cy="154.3" r="2.1" fill="#1fbb8a"/><circle cx="902.8" cy="154.3" r="1.05" fill="#8cedc9"/>
<circle cx="917.0" cy="156.1" r="2.1" fill="#1fbb8a"/><circle cx="917.0" cy="156.1" r="1.05" fill="#8cedc9"/>
<circle cx="706.2" cy="735.6" r="2.1" fill="#1fbb8a"/><circle cx="706.2" cy="735.6" r="1.05" fill="#8cedc9"/>
<circle cx="724.3" cy="722.8" r="2.1" fill="#1fbb8a"/><circle cx="724.3" cy="722.8" r="1.05" fill="#8cedc9"/>
<circle cx="747.6" cy="712.3" r="2.1" fill="#1fbb8a"/><circle cx="747.6" cy="712.3" r="1.05" fill="#8cedc9"/>
<circle cx="726.6" cy="695.3" r="2.1" fill="#1fbb8a"/><circle cx="726.6" cy="695.3" r="1.05" fill="#8cedc9"/>
<circle cx="725.2" cy="706.5" r="2.1" fill="#1fbb8a"/><circle cx="725.2" cy="706.5" r="1.05" fill="#8cedc9"/>
<circle cx="717.1" cy="705.8" r="2.1" fill="#1fbb8a"/><circle cx="717.1" cy="705.8" r="1.05" fill="#8cedc9"/>
<circle cx="710.3" cy="687.4" r="2.1" fill="#1fbb8a"/><circle cx="710.3" cy="687.4" r="1.05" fill="#8cedc9"/>
<circle cx="711.3" cy="664.2" r="2.1" fill="#1fbb8a"/><circle cx="711.3" cy="664.2" r="1.05" fill="#8cedc9"/>
<circle cx="718.9" cy="663.5" r="2.1" fill="#1fbb8a"/><circle cx="718.9" cy="663.5" r="1.05" fill="#8cedc9"/>
<circle cx="743.4" cy="664.2" r="2.1" fill="#1fbb8a"/><circle cx="743.4" cy="664.2" r="1.05" fill="#8cedc9"/>
<circle cx="780.1" cy="679.7" r="2.1" fill="#1fbb8a"/><circle cx="780.1" cy="679.7" r="1.05" fill="#8cedc9"/>
<circle cx="825.3" cy="669.4" r="2.1" fill="#1fbb8a"/><circle cx="825.3" cy="669.4" r="1.05" fill="#8cedc9"/>
<circle cx="840.1" cy="669.4" r="2.1" fill="#1fbb8a"/><circle cx="840.1" cy="669.4" r="1.05" fill="#8cedc9"/>
<circle cx="837.9" cy="675.6" r="2.1" fill="#1fbb8a"/><circle cx="837.9" cy="675.6" r="1.05" fill="#8cedc9"/>
<circle cx="824.9" cy="695.7" r="2.1" fill="#1fbb8a"/><circle cx="824.9" cy="695.7" r="1.05" fill="#8cedc9"/>
<circle cx="827.9" cy="709.4" r="2.1" fill="#1fbb8a"/><circle cx="827.9" cy="709.4" r="1.05" fill="#8cedc9"/>
<circle cx="836.0" cy="732.7" r="2.1" fill="#1fbb8a"/><circle cx="836.0" cy="732.7" r="1.05" fill="#8cedc9"/>
<circle cx="847.7" cy="731.7" r="2.1" fill="#1fbb8a"/><circle cx="847.7" cy="731.7" r="1.05" fill="#8cedc9"/>
<circle cx="861.9" cy="733.5" r="2.1" fill="#1fbb8a"/><circle cx="861.9" cy="733.5" r="1.05" fill="#8cedc9"/>
<circle cx="781.2" cy="461.6" r="2.1" fill="#1fbb8a"/><circle cx="781.2" cy="461.6" r="1.05" fill="#8cedc9"/>
<circle cx="799.3" cy="448.8" r="2.1" fill="#1fbb8a"/><circle cx="799.3" cy="448.8" r="1.05" fill="#8cedc9"/>
<circle cx="822.6" cy="438.3" r="2.1" fill="#1fbb8a"/><circle cx="822.6" cy="438.3" r="1.05" fill="#8cedc9"/>
<circle cx="801.6" cy="421.3" r="2.1" fill="#1fbb8a"/><circle cx="801.6" cy="421.3" r="1.05" fill="#8cedc9"/>
<circle cx="800.2" cy="432.5" r="2.1" fill="#1fbb8a"/><circle cx="800.2" cy="432.5" r="1.05" fill="#8cedc9"/>
<circle cx="792.1" cy="431.8" r="2.1" fill="#1fbb8a"/><circle cx="792.1" cy="431.8" r="1.05" fill="#8cedc9"/>
<circle cx="785.3" cy="413.4" r="2.1" fill="#1fbb8a"/><circle cx="785.3" cy="413.4" r="1.05" fill="#8cedc9"/>
<circle cx="786.3" cy="390.2" r="2.1" fill="#1fbb8a"/><circle cx="786.3" cy="390.2" r="1.05" fill="#8cedc9"/>
<circle cx="793.9" cy="389.5" r="2.1" fill="#1fbb8a"/><circle cx="793.9" cy="389.5" r="1.05" fill="#8cedc9"/>
<circle cx="818.4" cy="390.2" r="2.1" fill="#1fbb8a"/><circle cx="818.4" cy="390.2" r="1.05" fill="#8cedc9"/>
<circle cx="855.1" cy="405.7" r="2.1" fill="#1fbb8a"/><circle cx="855.1" cy="405.7" r="1.05" fill="#8cedc9"/>
<circle cx="900.3" cy="395.4" r="2.1" fill="#1fbb8a"/><circle cx="900.3" cy="395.4" r="1.05" fill="#8cedc9"/>
<circle cx="915.1" cy="395.4" r="2.1" fill="#1fbb8a"/><circle cx="915.1" cy="395.4" r="1.05" fill="#8cedc9"/>
<circle cx="912.9" cy="401.6" r="2.1" fill="#1fbb8a"/><circle cx="912.9" cy="401.6" r="1.05" fill="#8cedc9"/>
<circle cx="899.9" cy="421.7" r="2.1" fill="#1fbb8a"/><circle cx="899.9" cy="421.7" r="1.05" fill="#8cedc9"/>
<circle cx="902.9" cy="435.4" r="2.1" fill="#1fbb8a"/><circle cx="902.9" cy="435.4" r="1.05" fill="#8cedc9"/>
<circle cx="911.0" cy="458.7" r="2.1" fill="#1fbb8a"/><circle cx="911.0" cy="458.7" r="1.05" fill="#8cedc9"/>
<circle cx="922.7" cy="457.7" r="2.1" fill="#1fbb8a"/><circle cx="922.7" cy="457.7" r="1.05" fill="#8cedc9"/>
<circle cx="936.9" cy="459.5" r="2.1" fill="#1fbb8a"/><circle cx="936.9" cy="459.5" r="1.05" fill="#8cedc9"/>
<circle cx="1049.7" cy="492.8" r="2.1" fill="#bf4fe0"/><circle cx="1049.7" cy="492.8" r="1.05" fill="#e6a8f7"/>
<circle cx="1067.8" cy="480.0" r="2.1" fill="#bf4fe0"/><circle cx="1067.8" cy="480.0" r="1.05" fill="#e6a8f7"/>
<circle cx="1091.1" cy="469.5" r="2.1" fill="#bf4fe0"/><circle cx="1091.1" cy="469.5" r="1.05" fill="#e6a8f7"/>
<circle cx="1070.1" cy="452.5" r="2.1" fill="#bf4fe0"/><circle cx="1070.1" cy="452.5" r="1.05" fill="#e6a8f7"/>
<circle cx="1068.7" cy="463.7" r="2.1" fill="#bf4fe0"/><circle cx="1068.7" cy="463.7" r="1.05" fill="#e6a8f7"/>
<circle cx="1060.6" cy="463.0" r="2.1" fill="#bf4fe0"/><circle cx="1060.6" cy="463.0" r="1.05" fill="#e6a8f7"/>
<circle cx="1053.8" cy="444.6" r="2.1" fill="#bf4fe0"/><circle cx="1053.8" cy="444.6" r="1.05" fill="#e6a8f7"/>
<circle cx="1054.8" cy="421.4" r="2.1" fill="#bf4fe0"/><circle cx="1054.8" cy="421.4" r="1.05" fill="#e6a8f7"/>
<circle cx="1062.4" cy="420.7" r="2.1" fill="#bf4fe0"/><circle cx="1062.4" cy="420.7" r="1.05" fill="#e6a8f7"/>
<circle cx="1086.9" cy="421.4" r="2.1" fill="#bf4fe0"/><circle cx="1086.9" cy="421.4" r="1.05" fill="#e6a8f7"/>
<circle cx="1123.6" cy="436.9" r="2.1" fill="#bf4fe0"/><circle cx="1123.6" cy="436.9" r="1.05" fill="#e6a8f7"/>
<circle cx="1168.8" cy="426.6" r="2.1" fill="#bf4fe0"/><circle cx="1168.8" cy="426.6" r="1.05" fill="#e6a8f7"/>
<circle cx="1183.6" cy="426.6" r="2.1" fill="#bf4fe0"/><circle cx="1183.6" cy="426.6" r="1.05" fill="#e6a8f7"/>
<circle cx="1181.4" cy="432.8" r="2.1" fill="#bf4fe0"/><circle cx="1181.4" cy="432.8" r="1.05" fill="#e6a8f7"/>
<circle cx="1168.4" cy="452.9" r="2.1" fill="#bf4fe0"/><circle cx="1168.4" cy="452.9" r="1.05" fill="#e6a8f7"/>
<circle cx="1171.4" cy="466.6" r="2.1" fill="#bf4fe0"/><circle cx="1171.4" cy="466.6" r="1.05" fill="#e6a8f7"/>
<circle cx="1179.5" cy="489.9" r="2.1" fill="#bf4fe0"/><circle cx="1179.5" cy="489.9" r="1.05" fill="#e6a8f7"/>
<circle cx="1191.2" cy="488.9" r="2.1" fill="#bf4fe0"/><circle cx="1191.2" cy="488.9" r="1.05" fill="#e6a8f7"/>
<circle cx="1205.4" cy="490.7" r="2.1" fill="#bf4fe0"/><circle cx="1205.4" cy="490.7" r="1.05" fill="#e6a8f7"/>
<circle cx="745.0" cy="174.4" r="2.1" fill="#1cb2d6"/><circle cx="745.0" cy="174.4" r="1.05" fill="#8be4f7"/>
<circle cx="742.7" cy="184.4" r="2.1" fill="#1cb2d6"/><circle cx="742.7" cy="184.4" r="1.05" fill="#8be4f7"/>
<circle cx="745.4" cy="190.7" r="2.1" fill="#1cb2d6"/><circle cx="745.4" cy="190.7" r="1.05" fill="#8be4f7"/>
<circle cx="741.5" cy="199.3" r="2.1" fill="#1cb2d6"/><circle cx="741.5" cy="199.3" r="1.05" fill="#8be4f7"/>
<circle cx="747.3" cy="202.3" r="2.1" fill="#1cb2d6"/><circle cx="747.3" cy="202.3" r="1.05" fill="#8be4f7"/>
<circle cx="753.1" cy="204.0" r="2.1" fill="#1cb2d6"/><circle cx="753.1" cy="204.0" r="1.05" fill="#8be4f7"/>
<circle cx="755.0" cy="197.7" r="2.1" fill="#1cb2d6"/><circle cx="755.0" cy="197.7" r="1.05" fill="#8be4f7"/>
<circle cx="768.2" cy="196.5" r="2.1" fill="#1cb2d6"/><circle cx="768.2" cy="196.5" r="1.05" fill="#8be4f7"/>
<circle cx="778.0" cy="198.9" r="2.1" fill="#1cb2d6"/><circle cx="778.0" cy="198.9" r="1.05" fill="#8be4f7"/>
<circle cx="792.7" cy="197.0" r="2.1" fill="#1cb2d6"/><circle cx="792.7" cy="197.0" r="1.05" fill="#8be4f7"/>
<circle cx="803.6" cy="194.2" r="2.1" fill="#1cb2d6"/><circle cx="803.6" cy="194.2" r="1.05" fill="#8be4f7"/>
<circle cx="804.3" cy="208.2" r="2.1" fill="#1cb2d6"/><circle cx="804.3" cy="208.2" r="1.05" fill="#8be4f7"/>
<circle cx="807.3" cy="209.3" r="2.1" fill="#1cb2d6"/><circle cx="807.3" cy="209.3" r="1.05" fill="#8be4f7"/>
<circle cx="807.8" cy="193.0" r="2.1" fill="#1cb2d6"/><circle cx="807.8" cy="193.0" r="1.05" fill="#8be4f7"/>
<circle cx="810.6" cy="191.9" r="2.1" fill="#1cb2d6"/><circle cx="810.6" cy="191.9" r="1.05" fill="#8be4f7"/>
<circle cx="811.3" cy="203.5" r="2.1" fill="#1cb2d6"/><circle cx="811.3" cy="203.5" r="1.05" fill="#8be4f7"/>
<circle cx="814.7" cy="204.0" r="2.1" fill="#1cb2d6"/><circle cx="814.7" cy="204.0" r="1.05" fill="#8be4f7"/>
<circle cx="815.9" cy="213.3" r="2.1" fill="#1cb2d6"/><circle cx="815.9" cy="213.3" r="1.05" fill="#8be4f7"/>
<circle cx="820.6" cy="219.8" r="2.1" fill="#1cb2d6"/><circle cx="820.6" cy="219.8" r="1.05" fill="#8be4f7"/>
<circle cx="819.4" cy="209.3" r="2.1" fill="#1cb2d6"/><circle cx="819.4" cy="209.3" r="1.05" fill="#8be4f7"/>
<circle cx="824.0" cy="204.7" r="2.1" fill="#1cb2d6"/><circle cx="824.0" cy="204.7" r="1.05" fill="#8be4f7"/>
<circle cx="828.2" cy="200.0" r="2.1" fill="#1cb2d6"/><circle cx="828.2" cy="200.0" r="1.05" fill="#8be4f7"/>
<circle cx="829.9" cy="194.2" r="2.1" fill="#1cb2d6"/><circle cx="829.9" cy="194.2" r="1.05" fill="#8be4f7"/>
<circle cx="832.9" cy="184.9" r="2.1" fill="#1cb2d6"/><circle cx="832.9" cy="184.9" r="1.05" fill="#8be4f7"/>
<circle cx="837.5" cy="177.9" r="2.1" fill="#1cb2d6"/><circle cx="837.5" cy="177.9" r="1.05" fill="#8be4f7"/>
<circle cx="835.2" cy="169.8" r="2.1" fill="#1cb2d6"/><circle cx="835.2" cy="169.8" r="1.05" fill="#8be4f7"/>
<circle cx="840.8" cy="171.0" r="2.1" fill="#1cb2d6"/><circle cx="840.8" cy="171.0" r="1.05" fill="#8be4f7"/>
<circle cx="842.7" cy="180.3" r="2.1" fill="#1cb2d6"/><circle cx="842.7" cy="180.3" r="1.05" fill="#8be4f7"/>
<circle cx="848.5" cy="179.1" r="2.1" fill="#1cb2d6"/><circle cx="848.5" cy="179.1" r="1.05" fill="#8be4f7"/>
<circle cx="846.1" cy="169.8" r="2.1" fill="#1cb2d6"/><circle cx="846.1" cy="169.8" r="1.05" fill="#8be4f7"/>
<circle cx="851.5" cy="168.6" r="2.1" fill="#1cb2d6"/><circle cx="851.5" cy="168.6" r="1.05" fill="#8be4f7"/>
<circle cx="861.3" cy="166.8" r="2.1" fill="#1cb2d6"/><circle cx="861.3" cy="166.8" r="1.05" fill="#8be4f7"/>
<circle cx="867.8" cy="165.1" r="2.1" fill="#1cb2d6"/><circle cx="867.8" cy="165.1" r="1.05" fill="#8be4f7"/>
<circle cx="874.0" cy="175.1" r="2.1" fill="#1cb2d6"/><circle cx="874.0" cy="175.1" r="1.05" fill="#8be4f7"/>
<circle cx="871.7" cy="189.1" r="2.1" fill="#1cb2d6"/><circle cx="871.7" cy="189.1" r="1.05" fill="#8be4f7"/>
<circle cx="867.1" cy="197.7" r="2.1" fill="#1cb2d6"/><circle cx="867.1" cy="197.7" r="1.05" fill="#8be4f7"/>
<circle cx="861.7" cy="200.0" r="2.1" fill="#1cb2d6"/><circle cx="861.7" cy="200.0" r="1.05" fill="#8be4f7"/>
<circle cx="864.7" cy="207.0" r="2.1" fill="#1cb2d6"/><circle cx="864.7" cy="207.0" r="1.05" fill="#8be4f7"/>
<circle cx="872.9" cy="207.7" r="2.1" fill="#1cb2d6"/><circle cx="872.9" cy="207.7" r="1.05" fill="#8be4f7"/>
<circle cx="877.5" cy="211.7" r="2.1" fill="#1cb2d6"/><circle cx="877.5" cy="211.7" r="1.05" fill="#8be4f7"/>
<circle cx="882.7" cy="215.1" r="2.1" fill="#1cb2d6"/><circle cx="882.7" cy="215.1" r="1.05" fill="#8be4f7"/>
<circle cx="883.3" cy="208.2" r="2.1" fill="#1cb2d6"/><circle cx="883.3" cy="208.2" r="1.05" fill="#8be4f7"/>
<circle cx="897.1" cy="201.2" r="2.1" fill="#1cb2d6"/><circle cx="897.1" cy="201.2" r="1.05" fill="#8be4f7"/>
<circle cx="900.8" cy="193.7" r="2.1" fill="#1cb2d6"/><circle cx="900.8" cy="193.7" r="1.05" fill="#8be4f7"/>
<circle cx="902.5" cy="203.5" r="2.1" fill="#1cb2d6"/><circle cx="902.5" cy="203.5" r="1.05" fill="#8be4f7"/>
<circle cx="907.1" cy="209.3" r="2.1" fill="#1cb2d6"/><circle cx="907.1" cy="209.3" r="1.05" fill="#8be4f7"/>
<circle cx="910.6" cy="203.5" r="2.1" fill="#1cb2d6"/><circle cx="910.6" cy="203.5" r="1.05" fill="#8be4f7"/>
<circle cx="911.8" cy="198.9" r="2.1" fill="#1cb2d6"/><circle cx="911.8" cy="198.9" r="1.05" fill="#8be4f7"/>
<circle cx="917.6" cy="208.2" r="2.1" fill="#1cb2d6"/><circle cx="917.6" cy="208.2" r="1.05" fill="#8be4f7"/>
<circle cx="919.4" cy="216.3" r="2.1" fill="#1cb2d6"/><circle cx="919.4" cy="216.3" r="1.05" fill="#8be4f7"/>
<circle cx="1210.0" cy="186.8" r="2.1" fill="#2f8ae6"/><circle cx="1210.0" cy="186.8" r="1.05" fill="#93c7ff"/>
<circle cx="1207.7" cy="196.8" r="2.1" fill="#2f8ae6"/><circle cx="1207.7" cy="196.8" r="1.05" fill="#93c7ff"/>
<circle cx="1210.4" cy="203.1" r="2.1" fill="#2f8ae6"/><circle cx="1210.4" cy="203.1" r="1.05" fill="#93c7ff"/>
<circle cx="1206.5" cy="211.7" r="2.1" fill="#2f8ae6"/><circle cx="1206.5" cy="211.7" r="1.05" fill="#93c7ff"/>
<circle cx="1212.3" cy="214.7" r="2.1" fill="#2f8ae6"/><circle cx="1212.3" cy="214.7" r="1.05" fill="#93c7ff"/>
<circle cx="1218.1" cy="216.4" r="2.1" fill="#2f8ae6"/><circle cx="1218.1" cy="216.4" r="1.05" fill="#93c7ff"/>
<circle cx="1220.0" cy="210.1" r="2.1" fill="#2f8ae6"/><circle cx="1220.0" cy="210.1" r="1.05" fill="#93c7ff"/>
<circle cx="1233.2" cy="208.9" r="2.1" fill="#2f8ae6"/><circle cx="1233.2" cy="208.9" r="1.05" fill="#93c7ff"/>
<circle cx="1243.0" cy="211.3" r="2.1" fill="#2f8ae6"/><circle cx="1243.0" cy="211.3" r="1.05" fill="#93c7ff"/>
<circle cx="1257.7" cy="209.4" r="2.1" fill="#2f8ae6"/><circle cx="1257.7" cy="209.4" r="1.05" fill="#93c7ff"/>
<circle cx="1268.6" cy="206.6" r="2.1" fill="#2f8ae6"/><circle cx="1268.6" cy="206.6" r="1.05" fill="#93c7ff"/>
<circle cx="1269.3" cy="220.6" r="2.1" fill="#2f8ae6"/><circle cx="1269.3" cy="220.6" r="1.05" fill="#93c7ff"/>
<circle cx="1272.3" cy="221.7" r="2.1" fill="#2f8ae6"/><circle cx="1272.3" cy="221.7" r="1.05" fill="#93c7ff"/>
<circle cx="1272.8" cy="205.4" r="2.1" fill="#2f8ae6"/><circle cx="1272.8" cy="205.4" r="1.05" fill="#93c7ff"/>
<circle cx="1275.6" cy="204.3" r="2.1" fill="#2f8ae6"/><circle cx="1275.6" cy="204.3" r="1.05" fill="#93c7ff"/>
<circle cx="1276.3" cy="215.9" r="2.1" fill="#2f8ae6"/><circle cx="1276.3" cy="215.9" r="1.05" fill="#93c7ff"/>
<circle cx="1279.7" cy="216.4" r="2.1" fill="#2f8ae6"/><circle cx="1279.7" cy="216.4" r="1.05" fill="#93c7ff"/>
<circle cx="1280.9" cy="225.7" r="2.1" fill="#2f8ae6"/><circle cx="1280.9" cy="225.7" r="1.05" fill="#93c7ff"/>
<circle cx="1285.6" cy="232.2" r="2.1" fill="#2f8ae6"/><circle cx="1285.6" cy="232.2" r="1.05" fill="#93c7ff"/>
<circle cx="1284.4" cy="221.7" r="2.1" fill="#2f8ae6"/><circle cx="1284.4" cy="221.7" r="1.05" fill="#93c7ff"/>
<circle cx="1289.0" cy="217.1" r="2.1" fill="#2f8ae6"/><circle cx="1289.0" cy="217.1" r="1.05" fill="#93c7ff"/>
<circle cx="1293.2" cy="212.4" r="2.1" fill="#2f8ae6"/><circle cx="1293.2" cy="212.4" r="1.05" fill="#93c7ff"/>
<circle cx="1294.9" cy="206.6" r="2.1" fill="#2f8ae6"/><circle cx="1294.9" cy="206.6" r="1.05" fill="#93c7ff"/>
<circle cx="1297.9" cy="197.3" r="2.1" fill="#2f8ae6"/><circle cx="1297.9" cy="197.3" r="1.05" fill="#93c7ff"/>
<circle cx="1302.5" cy="190.3" r="2.1" fill="#2f8ae6"/><circle cx="1302.5" cy="190.3" r="1.05" fill="#93c7ff"/>
<circle cx="1300.2" cy="182.2" r="2.1" fill="#2f8ae6"/><circle cx="1300.2" cy="182.2" r="1.05" fill="#93c7ff"/>
<circle cx="1305.8" cy="183.4" r="2.1" fill="#2f8ae6"/><circle cx="1305.8" cy="183.4" r="1.05" fill="#93c7ff"/>
<circle cx="1307.7" cy="192.7" r="2.1" fill="#2f8ae6"/><circle cx="1307.7" cy="192.7" r="1.05" fill="#93c7ff"/>
<circle cx="1313.5" cy="191.5" r="2.1" fill="#2f8ae6"/><circle cx="1313.5" cy="191.5" r="1.05" fill="#93c7ff"/>
<circle cx="1311.1" cy="182.2" r="2.1" fill="#2f8ae6"/><circle cx="1311.1" cy="182.2" r="1.05" fill="#93c7ff"/>
<circle cx="1316.5" cy="181.0" r="2.1" fill="#2f8ae6"/><circle cx="1316.5" cy="181.0" r="1.05" fill="#93c7ff"/>
<circle cx="1326.3" cy="179.2" r="2.1" fill="#2f8ae6"/><circle cx="1326.3" cy="179.2" r="1.05" fill="#93c7ff"/>
<circle cx="1332.8" cy="177.5" r="2.1" fill="#2f8ae6"/><circle cx="1332.8" cy="177.5" r="1.05" fill="#93c7ff"/>
<circle cx="1339.0" cy="187.5" r="2.1" fill="#2f8ae6"/><circle cx="1339.0" cy="187.5" r="1.05" fill="#93c7ff"/>
<circle cx="1336.7" cy="201.5" r="2.1" fill="#2f8ae6"/><circle cx="1336.7" cy="201.5" r="1.05" fill="#93c7ff"/>
<circle cx="1332.1" cy="210.1" r="2.1" fill="#2f8ae6"/><circle cx="1332.1" cy="210.1" r="1.05" fill="#93c7ff"/>
<circle cx="1326.7" cy="212.4" r="2.1" fill="#2f8ae6"/><circle cx="1326.7" cy="212.4" r="1.05" fill="#93c7ff"/>
<circle cx="1329.7" cy="219.4" r="2.1" fill="#2f8ae6"/><circle cx="1329.7" cy="219.4" r="1.05" fill="#93c7ff"/>
<circle cx="1337.9" cy="220.1" r="2.1" fill="#2f8ae6"/><circle cx="1337.9" cy="220.1" r="1.05" fill="#93c7ff"/>
<circle cx="1342.5" cy="224.1" r="2.1" fill="#2f8ae6"/><circle cx="1342.5" cy="224.1" r="1.05" fill="#93c7ff"/>
<circle cx="1347.7" cy="227.5" r="2.1" fill="#2f8ae6"/><circle cx="1347.7" cy="227.5" r="1.05" fill="#93c7ff"/>
<circle cx="1348.3" cy="220.6" r="2.1" fill="#2f8ae6"/><circle cx="1348.3" cy="220.6" r="1.05" fill="#93c7ff"/>
<circle cx="1362.1" cy="213.6" r="2.1" fill="#2f8ae6"/><circle cx="1362.1" cy="213.6" r="1.05" fill="#93c7ff"/>
<circle cx="1365.8" cy="206.1" r="2.1" fill="#2f8ae6"/><circle cx="1365.8" cy="206.1" r="1.05" fill="#93c7ff"/>
<circle cx="1367.5" cy="215.9" r="2.1" fill="#2f8ae6"/><circle cx="1367.5" cy="215.9" r="1.05" fill="#93c7ff"/>
<circle cx="1372.1" cy="221.7" r="2.1" fill="#2f8ae6"/><circle cx="1372.1" cy="221.7" r="1.05" fill="#93c7ff"/>
<circle cx="1375.6" cy="215.9" r="2.1" fill="#2f8ae6"/><circle cx="1375.6" cy="215.9" r="1.05" fill="#93c7ff"/>
<circle cx="1376.8" cy="211.3" r="2.1" fill="#2f8ae6"/><circle cx="1376.8" cy="211.3" r="1.05" fill="#93c7ff"/>
<circle cx="1382.6" cy="220.6" r="2.1" fill="#2f8ae6"/><circle cx="1382.6" cy="220.6" r="1.05" fill="#93c7ff"/>
<circle cx="1384.4" cy="228.7" r="2.1" fill="#2f8ae6"/><circle cx="1384.4" cy="228.7" r="1.05" fill="#93c7ff"/>
<circle cx="778.0" cy="499.3" r="2.1" fill="#1cb2d6"/><circle cx="778.0" cy="499.3" r="1.05" fill="#8be4f7"/>
<circle cx="775.7" cy="509.3" r="2.1" fill="#1cb2d6"/><circle cx="775.7" cy="509.3" r="1.05" fill="#8be4f7"/>
<circle cx="778.4" cy="515.6" r="2.1" fill="#1cb2d6"/><circle cx="778.4" cy="515.6" r="1.05" fill="#8be4f7"/>
<circle cx="774.5" cy="524.2" r="2.1" fill="#1cb2d6"/><circle cx="774.5" cy="524.2" r="1.05" fill="#8be4f7"/>
<circle cx="780.3" cy="527.2" r="2.1" fill="#1cb2d6"/><circle cx="780.3" cy="527.2" r="1.05" fill="#8be4f7"/>
<circle cx="786.1" cy="528.9" r="2.1" fill="#1cb2d6"/><circle cx="786.1" cy="528.9" r="1.05" fill="#8be4f7"/>
<circle cx="788.0" cy="522.6" r="2.1" fill="#1cb2d6"/><circle cx="788.0" cy="522.6" r="1.05" fill="#8be4f7"/>
<circle cx="801.2" cy="521.4" r="2.1" fill="#1cb2d6"/><circle cx="801.2" cy="521.4" r="1.05" fill="#8be4f7"/>
<circle cx="811.0" cy="523.8" r="2.1" fill="#1cb2d6"/><circle cx="811.0" cy="523.8" r="1.05" fill="#8be4f7"/>
<circle cx="825.7" cy="521.9" r="2.1" fill="#1cb2d6"/><circle cx="825.7" cy="521.9" r="1.05" fill="#8be4f7"/>
<circle cx="836.6" cy="519.1" r="2.1" fill="#1cb2d6"/><circle cx="836.6" cy="519.1" r="1.05" fill="#8be4f7"/>
<circle cx="837.3" cy="533.1" r="2.1" fill="#1cb2d6"/><circle cx="837.3" cy="533.1" r="1.05" fill="#8be4f7"/>
<circle cx="840.3" cy="534.2" r="2.1" fill="#1cb2d6"/><circle cx="840.3" cy="534.2" r="1.05" fill="#8be4f7"/>
<circle cx="840.8" cy="517.9" r="2.1" fill="#1cb2d6"/><circle cx="840.8" cy="517.9" r="1.05" fill="#8be4f7"/>
<circle cx="843.6" cy="516.8" r="2.1" fill="#1cb2d6"/><circle cx="843.6" cy="516.8" r="1.05" fill="#8be4f7"/>
<circle cx="844.3" cy="528.4" r="2.1" fill="#1cb2d6"/><circle cx="844.3" cy="528.4" r="1.05" fill="#8be4f7"/>
<circle cx="847.7" cy="528.9" r="2.1" fill="#1cb2d6"/><circle cx="847.7" cy="528.9" r="1.05" fill="#8be4f7"/>
<circle cx="848.9" cy="538.2" r="2.1" fill="#1cb2d6"/><circle cx="848.9" cy="538.2" r="1.05" fill="#8be4f7"/>
<circle cx="853.6" cy="544.7" r="2.1" fill="#1cb2d6"/><circle cx="853.6" cy="544.7" r="1.05" fill="#8be4f7"/>
<circle cx="852.4" cy="534.2" r="2.1" fill="#1cb2d6"/><circle cx="852.4" cy="534.2" r="1.05" fill="#8be4f7"/>
<circle cx="857.0" cy="529.6" r="2.1" fill="#1cb2d6"/><circle cx="857.0" cy="529.6" r="1.05" fill="#8be4f7"/>
<circle cx="861.2" cy="524.9" r="2.1" fill="#1cb2d6"/><circle cx="861.2" cy="524.9" r="1.05" fill="#8be4f7"/>
<circle cx="862.9" cy="519.1" r="2.1" fill="#1cb2d6"/><circle cx="862.9" cy="519.1" r="1.05" fill="#8be4f7"/>
<circle cx="865.9" cy="509.8" r="2.1" fill="#1cb2d6"/><circle cx="865.9" cy="509.8" r="1.05" fill="#8be4f7"/>
<circle cx="870.5" cy="502.8" r="2.1" fill="#1cb2d6"/><circle cx="870.5" cy="502.8" r="1.05" fill="#8be4f7"/>
<circle cx="868.2" cy="494.7" r="2.1" fill="#1cb2d6"/><circle cx="868.2" cy="494.7" r="1.05" fill="#8be4f7"/>
<circle cx="873.8" cy="495.9" r="2.1" fill="#1cb2d6"/><circle cx="873.8" cy="495.9" r="1.05" fill="#8be4f7"/>
<circle cx="875.7" cy="505.2" r="2.1" fill="#1cb2d6"/><circle cx="875.7" cy="505.2" r="1.05" fill="#8be4f7"/>
<circle cx="881.5" cy="504.0" r="2.1" fill="#1cb2d6"/><circle cx="881.5" cy="504.0" r="1.05" fill="#8be4f7"/>
<circle cx="879.1" cy="494.7" r="2.1" fill="#1cb2d6"/><circle cx="879.1" cy="494.7" r="1.05" fill="#8be4f7"/>
<circle cx="884.5" cy="493.5" r="2.1" fill="#1cb2d6"/><circle cx="884.5" cy="493.5" r="1.05" fill="#8be4f7"/>
<circle cx="894.3" cy="491.7" r="2.1" fill="#1cb2d6"/><circle cx="894.3" cy="491.7" r="1.05" fill="#8be4f7"/>
<circle cx="900.8" cy="490.0" r="2.1" fill="#1cb2d6"/><circle cx="900.8" cy="490.0" r="1.05" fill="#8be4f7"/>
<circle cx="907.0" cy="500.0" r="2.1" fill="#1cb2d6"/><circle cx="907.0" cy="500.0" r="1.05" fill="#8be4f7"/>
<circle cx="904.7" cy="514.0" r="2.1" fill="#1cb2d6"/><circle cx="904.7" cy="514.0" r="1.05" fill="#8be4f7"/>
<circle cx="900.1" cy="522.6" r="2.1" fill="#1cb2d6"/><circle cx="900.1" cy="522.6" r="1.05" fill="#8be4f7"/>
<circle cx="894.7" cy="524.9" r="2.1" fill="#1cb2d6"/><circle cx="894.7" cy="524.9" r="1.05" fill="#8be4f7"/>
<circle cx="897.7" cy="531.9" r="2.1" fill="#1cb2d6"/><circle cx="897.7" cy="531.9" r="1.05" fill="#8be4f7"/>
<circle cx="905.9" cy="532.6" r="2.1" fill="#1cb2d6"/><circle cx="905.9" cy="532.6" r="1.05" fill="#8be4f7"/>
<circle cx="910.5" cy="536.6" r="2.1" fill="#1cb2d6"/><circle cx="910.5" cy="536.6" r="1.05" fill="#8be4f7"/>
<circle cx="915.7" cy="540.0" r="2.1" fill="#1cb2d6"/><circle cx="915.7" cy="540.0" r="1.05" fill="#8be4f7"/>
<circle cx="916.3" cy="533.1" r="2.1" fill="#1cb2d6"/><circle cx="916.3" cy="533.1" r="1.05" fill="#8be4f7"/>
<circle cx="930.1" cy="526.1" r="2.1" fill="#1cb2d6"/><circle cx="930.1" cy="526.1" r="1.05" fill="#8be4f7"/>
<circle cx="933.8" cy="518.6" r="2.1" fill="#1cb2d6"/><circle cx="933.8" cy="518.6" r="1.05" fill="#8be4f7"/>
<circle cx="935.5" cy="528.4" r="2.1" fill="#1cb2d6"/><circle cx="935.5" cy="528.4" r="1.05" fill="#8be4f7"/>
<circle cx="940.1" cy="534.2" r="2.1" fill="#1cb2d6"/><circle cx="940.1" cy="534.2" r="1.05" fill="#8be4f7"/>
<circle cx="943.6" cy="528.4" r="2.1" fill="#1cb2d6"/><circle cx="943.6" cy="528.4" r="1.05" fill="#8be4f7"/>
<circle cx="944.8" cy="523.8" r="2.1" fill="#1cb2d6"/><circle cx="944.8" cy="523.8" r="1.05" fill="#8be4f7"/>
<circle cx="950.6" cy="533.1" r="2.1" fill="#1cb2d6"/><circle cx="950.6" cy="533.1" r="1.05" fill="#8be4f7"/>
<circle cx="952.4" cy="541.2" r="2.1" fill="#1cb2d6"/><circle cx="952.4" cy="541.2" r="1.05" fill="#8be4f7"/>
<circle cx="939.7" cy="573.0" r="2.1" fill="#1cb2d6"/><circle cx="939.7" cy="573.0" r="1.05" fill="#8be4f7"/>
<circle cx="1201.8" cy="129.6" r="2.1" fill="#1cb2d6"/><circle cx="1201.8" cy="129.6" r="1.05" fill="#8be4f7"/>
<circle cx="1206.9" cy="122.1" r="2.1" fill="#1cb2d6"/><circle cx="1206.9" cy="122.1" r="1.05" fill="#8be4f7"/>
<circle cx="1211.1" cy="126.8" r="2.1" fill="#1cb2d6"/><circle cx="1211.1" cy="126.8" r="1.05" fill="#8be4f7"/>
<circle cx="1215.8" cy="125.6" r="2.1" fill="#1cb2d6"/><circle cx="1215.8" cy="125.6" r="1.05" fill="#8be4f7"/>
<circle cx="1222.7" cy="130.3" r="2.1" fill="#1cb2d6"/><circle cx="1222.7" cy="130.3" r="1.05" fill="#8be4f7"/>
<circle cx="1226.2" cy="131.9" r="2.1" fill="#1cb2d6"/><circle cx="1226.2" cy="131.9" r="1.05" fill="#8be4f7"/>
<circle cx="1235.5" cy="137.2" r="2.1" fill="#1cb2d6"/><circle cx="1235.5" cy="137.2" r="1.05" fill="#8be4f7"/>
<circle cx="1241.3" cy="141.9" r="2.1" fill="#1cb2d6"/><circle cx="1241.3" cy="141.9" r="1.05" fill="#8be4f7"/>
<circle cx="1241.8" cy="129.1" r="2.1" fill="#1cb2d6"/><circle cx="1241.8" cy="129.1" r="1.05" fill="#8be4f7"/>
<circle cx="1243.7" cy="125.6" r="2.1" fill="#1cb2d6"/><circle cx="1243.7" cy="125.6" r="1.05" fill="#8be4f7"/>
<circle cx="1249.5" cy="119.3" r="2.1" fill="#1cb2d6"/><circle cx="1249.5" cy="119.3" r="1.05" fill="#8be4f7"/>
<circle cx="1259.5" cy="118.6" r="2.1" fill="#1cb2d6"/><circle cx="1259.5" cy="118.6" r="1.05" fill="#8be4f7"/>
<circle cx="1263.4" cy="107.0" r="2.1" fill="#1cb2d6"/><circle cx="1263.4" cy="107.0" r="1.05" fill="#8be4f7"/>
<circle cx="1256.5" cy="98.9" r="2.1" fill="#1cb2d6"/><circle cx="1256.5" cy="98.9" r="1.05" fill="#8be4f7"/>
<circle cx="1250.7" cy="100.0" r="2.1" fill="#1cb2d6"/><circle cx="1250.7" cy="100.0" r="1.05" fill="#8be4f7"/>
<circle cx="1244.8" cy="101.7" r="2.1" fill="#1cb2d6"/><circle cx="1244.8" cy="101.7" r="1.05" fill="#8be4f7"/>
<circle cx="1238.6" cy="103.5" r="2.1" fill="#1cb2d6"/><circle cx="1238.6" cy="103.5" r="1.05" fill="#8be4f7"/>
<circle cx="1229.3" cy="86.1" r="2.1" fill="#1cb2d6"/><circle cx="1229.3" cy="86.1" r="1.05" fill="#8be4f7"/>
<circle cx="1218.6" cy="86.1" r="2.1" fill="#1cb2d6"/><circle cx="1218.6" cy="86.1" r="1.05" fill="#8be4f7"/>
<circle cx="1204.6" cy="91.4" r="2.1" fill="#1cb2d6"/><circle cx="1204.6" cy="91.4" r="1.05" fill="#8be4f7"/>
<circle cx="1197.6" cy="94.2" r="2.1" fill="#1cb2d6"/><circle cx="1197.6" cy="94.2" r="1.05" fill="#8be4f7"/>
<circle cx="1194.8" cy="100.0" r="2.1" fill="#1cb2d6"/><circle cx="1194.8" cy="100.0" r="1.05" fill="#8be4f7"/>
<circle cx="1192.5" cy="103.5" r="2.1" fill="#1cb2d6"/><circle cx="1192.5" cy="103.5" r="1.05" fill="#8be4f7"/>
<circle cx="1188.3" cy="109.3" r="2.1" fill="#1cb2d6"/><circle cx="1188.3" cy="109.3" r="1.05" fill="#8be4f7"/>
<circle cx="1189.7" cy="114.7" r="2.1" fill="#1cb2d6"/><circle cx="1189.7" cy="114.7" r="1.05" fill="#8be4f7"/>
<circle cx="1189.0" cy="119.3" r="2.1" fill="#1cb2d6"/><circle cx="1189.0" cy="119.3" r="1.05" fill="#8be4f7"/>
<circle cx="1182.0" cy="122.1" r="2.1" fill="#1cb2d6"/><circle cx="1182.0" cy="122.1" r="1.05" fill="#8be4f7"/>
<circle cx="1180.9" cy="132.6" r="2.1" fill="#1cb2d6"/><circle cx="1180.9" cy="132.6" r="1.05" fill="#8be4f7"/>
<circle cx="1175.8" cy="134.9" r="2.1" fill="#1cb2d6"/><circle cx="1175.8" cy="134.9" r="1.05" fill="#8be4f7"/>
<circle cx="1168.1" cy="137.9" r="2.1" fill="#1cb2d6"/><circle cx="1168.1" cy="137.9" r="1.05" fill="#8be4f7"/>
<circle cx="1164.1" cy="151.2" r="2.1" fill="#1cb2d6"/><circle cx="1164.1" cy="151.2" r="1.05" fill="#8be4f7"/>
<circle cx="1165.1" cy="156.5" r="2.1" fill="#1cb2d6"/><circle cx="1165.1" cy="156.5" r="1.05" fill="#8be4f7"/>
<circle cx="1180.9" cy="159.8" r="2.1" fill="#1cb2d6"/><circle cx="1180.9" cy="159.8" r="1.05" fill="#8be4f7"/>
<circle cx="1186.7" cy="159.3" r="2.1" fill="#1cb2d6"/><circle cx="1186.7" cy="159.3" r="1.05" fill="#8be4f7"/>
<circle cx="1196.0" cy="155.8" r="2.1" fill="#1cb2d6"/><circle cx="1196.0" cy="155.8" r="1.05" fill="#8be4f7"/>
<circle cx="1203.7" cy="151.9" r="2.1" fill="#1cb2d6"/><circle cx="1203.7" cy="151.9" r="1.05" fill="#8be4f7"/>
<circle cx="1209.3" cy="148.9" r="2.1" fill="#1cb2d6"/><circle cx="1209.3" cy="148.9" r="1.05" fill="#8be4f7"/>
<circle cx="1213.0" cy="161.7" r="2.1" fill="#1cb2d6"/><circle cx="1213.0" cy="161.7" r="1.05" fill="#8be4f7"/>
<circle cx="1220.0" cy="164.0" r="2.1" fill="#1cb2d6"/><circle cx="1220.0" cy="164.0" r="1.05" fill="#8be4f7"/>
<circle cx="1225.1" cy="161.7" r="2.1" fill="#1cb2d6"/><circle cx="1225.1" cy="161.7" r="1.05" fill="#8be4f7"/>
<circle cx="1223.9" cy="158.2" r="2.1" fill="#1cb2d6"/><circle cx="1223.9" cy="158.2" r="1.05" fill="#8be4f7"/>
<circle cx="1222.7" cy="151.2" r="2.1" fill="#1cb2d6"/><circle cx="1222.7" cy="151.2" r="1.05" fill="#8be4f7"/>
<circle cx="1227.4" cy="144.2" r="2.1" fill="#1cb2d6"/><circle cx="1227.4" cy="144.2" r="1.05" fill="#8be4f7"/>
<circle cx="1232.0" cy="144.9" r="2.1" fill="#1cb2d6"/><circle cx="1232.0" cy="144.9" r="1.05" fill="#8be4f7"/>
<circle cx="1235.5" cy="154.7" r="2.1" fill="#1cb2d6"/><circle cx="1235.5" cy="154.7" r="1.05" fill="#8be4f7"/>
<circle cx="1248.3" cy="157.0" r="2.1" fill="#1cb2d6"/><circle cx="1248.3" cy="157.0" r="1.05" fill="#8be4f7"/>
<circle cx="1278.6" cy="152.3" r="2.1" fill="#1cb2d6"/><circle cx="1278.6" cy="152.3" r="1.05" fill="#8be4f7"/>
<circle cx="683.8" cy="304.5" r="2.1" fill="#2f8ae6"/><circle cx="683.8" cy="304.5" r="1.05" fill="#93c7ff"/>
<circle cx="688.9" cy="297.0" r="2.1" fill="#2f8ae6"/><circle cx="688.9" cy="297.0" r="1.05" fill="#93c7ff"/>
<circle cx="693.1" cy="301.7" r="2.1" fill="#2f8ae6"/><circle cx="693.1" cy="301.7" r="1.05" fill="#93c7ff"/>
<circle cx="697.8" cy="300.5" r="2.1" fill="#2f8ae6"/><circle cx="697.8" cy="300.5" r="1.05" fill="#93c7ff"/>
<circle cx="704.7" cy="305.2" r="2.1" fill="#2f8ae6"/><circle cx="704.7" cy="305.2" r="1.05" fill="#93c7ff"/>
<circle cx="708.2" cy="306.8" r="2.1" fill="#2f8ae6"/><circle cx="708.2" cy="306.8" r="1.05" fill="#93c7ff"/>
<circle cx="717.5" cy="312.1" r="2.1" fill="#2f8ae6"/><circle cx="717.5" cy="312.1" r="1.05" fill="#93c7ff"/>
<circle cx="723.3" cy="316.8" r="2.1" fill="#2f8ae6"/><circle cx="723.3" cy="316.8" r="1.05" fill="#93c7ff"/>
<circle cx="723.8" cy="304.0" r="2.1" fill="#2f8ae6"/><circle cx="723.8" cy="304.0" r="1.05" fill="#93c7ff"/>
<circle cx="725.7" cy="300.5" r="2.1" fill="#2f8ae6"/><circle cx="725.7" cy="300.5" r="1.05" fill="#93c7ff"/>
<circle cx="731.5" cy="294.2" r="2.1" fill="#2f8ae6"/><circle cx="731.5" cy="294.2" r="1.05" fill="#93c7ff"/>
<circle cx="741.5" cy="293.5" r="2.1" fill="#2f8ae6"/><circle cx="741.5" cy="293.5" r="1.05" fill="#93c7ff"/>
<circle cx="745.4" cy="281.9" r="2.1" fill="#2f8ae6"/><circle cx="745.4" cy="281.9" r="1.05" fill="#93c7ff"/>
<circle cx="738.5" cy="273.8" r="2.1" fill="#2f8ae6"/><circle cx="738.5" cy="273.8" r="1.05" fill="#93c7ff"/>
<circle cx="732.7" cy="274.9" r="2.1" fill="#2f8ae6"/><circle cx="732.7" cy="274.9" r="1.05" fill="#93c7ff"/>
<circle cx="726.8" cy="276.6" r="2.1" fill="#2f8ae6"/><circle cx="726.8" cy="276.6" r="1.05" fill="#93c7ff"/>
<circle cx="720.6" cy="278.4" r="2.1" fill="#2f8ae6"/><circle cx="720.6" cy="278.4" r="1.05" fill="#93c7ff"/>
<circle cx="711.3" cy="261.0" r="2.1" fill="#2f8ae6"/><circle cx="711.3" cy="261.0" r="1.05" fill="#93c7ff"/>
<circle cx="700.6" cy="261.0" r="2.1" fill="#2f8ae6"/><circle cx="700.6" cy="261.0" r="1.05" fill="#93c7ff"/>
<circle cx="686.6" cy="266.3" r="2.1" fill="#2f8ae6"/><circle cx="686.6" cy="266.3" r="1.05" fill="#93c7ff"/>
<circle cx="679.6" cy="269.1" r="2.1" fill="#2f8ae6"/><circle cx="679.6" cy="269.1" r="1.05" fill="#93c7ff"/>
<circle cx="676.8" cy="274.9" r="2.1" fill="#2f8ae6"/><circle cx="676.8" cy="274.9" r="1.05" fill="#93c7ff"/>
<circle cx="674.5" cy="278.4" r="2.1" fill="#2f8ae6"/><circle cx="674.5" cy="278.4" r="1.05" fill="#93c7ff"/>
<circle cx="670.3" cy="284.2" r="2.1" fill="#2f8ae6"/><circle cx="670.3" cy="284.2" r="1.05" fill="#93c7ff"/>
<circle cx="671.7" cy="289.6" r="2.1" fill="#2f8ae6"/><circle cx="671.7" cy="289.6" r="1.05" fill="#93c7ff"/>
<circle cx="671.0" cy="294.2" r="2.1" fill="#2f8ae6"/><circle cx="671.0" cy="294.2" r="1.05" fill="#93c7ff"/>
<circle cx="664.0" cy="297.0" r="2.1" fill="#2f8ae6"/><circle cx="664.0" cy="297.0" r="1.05" fill="#93c7ff"/>
<circle cx="662.9" cy="307.5" r="2.1" fill="#2f8ae6"/><circle cx="662.9" cy="307.5" r="1.05" fill="#93c7ff"/>
<circle cx="657.8" cy="309.8" r="2.1" fill="#2f8ae6"/><circle cx="657.8" cy="309.8" r="1.05" fill="#93c7ff"/>
<circle cx="650.1" cy="312.8" r="2.1" fill="#2f8ae6"/><circle cx="650.1" cy="312.8" r="1.05" fill="#93c7ff"/>
<circle cx="646.1" cy="326.1" r="2.1" fill="#2f8ae6"/><circle cx="646.1" cy="326.1" r="1.05" fill="#93c7ff"/>
<circle cx="647.1" cy="331.4" r="2.1" fill="#2f8ae6"/><circle cx="647.1" cy="331.4" r="1.05" fill="#93c7ff"/>
<circle cx="662.9" cy="334.7" r="2.1" fill="#2f8ae6"/><circle cx="662.9" cy="334.7" r="1.05" fill="#93c7ff"/>
<circle cx="668.7" cy="334.2" r="2.1" fill="#2f8ae6"/><circle cx="668.7" cy="334.2" r="1.05" fill="#93c7ff"/>
<circle cx="678.0" cy="330.7" r="2.1" fill="#2f8ae6"/><circle cx="678.0" cy="330.7" r="1.05" fill="#93c7ff"/>
<circle cx="685.7" cy="326.8" r="2.1" fill="#2f8ae6"/><circle cx="685.7" cy="326.8" r="1.05" fill="#93c7ff"/>
<circle cx="691.3" cy="323.8" r="2.1" fill="#2f8ae6"/><circle cx="691.3" cy="323.8" r="1.05" fill="#93c7ff"/>
<circle cx="695.0" cy="336.6" r="2.1" fill="#2f8ae6"/><circle cx="695.0" cy="336.6" r="1.05" fill="#93c7ff"/>
<circle cx="702.0" cy="338.9" r="2.1" fill="#2f8ae6"/><circle cx="702.0" cy="338.9" r="1.05" fill="#93c7ff"/>
<circle cx="707.1" cy="336.6" r="2.1" fill="#2f8ae6"/><circle cx="707.1" cy="336.6" r="1.05" fill="#93c7ff"/>
<circle cx="705.9" cy="333.1" r="2.1" fill="#2f8ae6"/><circle cx="705.9" cy="333.1" r="1.05" fill="#93c7ff"/>
<circle cx="704.7" cy="326.1" r="2.1" fill="#2f8ae6"/><circle cx="704.7" cy="326.1" r="1.05" fill="#93c7ff"/>
<circle cx="709.4" cy="319.1" r="2.1" fill="#2f8ae6"/><circle cx="709.4" cy="319.1" r="1.05" fill="#93c7ff"/>
<circle cx="714.0" cy="319.8" r="2.1" fill="#2f8ae6"/><circle cx="714.0" cy="319.8" r="1.05" fill="#93c7ff"/>
<circle cx="717.5" cy="329.6" r="2.1" fill="#2f8ae6"/><circle cx="717.5" cy="329.6" r="1.05" fill="#93c7ff"/>
<circle cx="730.3" cy="331.9" r="2.1" fill="#2f8ae6"/><circle cx="730.3" cy="331.9" r="1.05" fill="#93c7ff"/>
<circle cx="760.6" cy="327.2" r="2.1" fill="#2f8ae6"/><circle cx="760.6" cy="327.2" r="1.05" fill="#93c7ff"/>
<circle cx="1215.8" cy="301.0" r="2.1" fill="#1fbb8a"/><circle cx="1215.8" cy="301.0" r="1.05" fill="#8cedc9"/>
<circle cx="1220.9" cy="293.5" r="2.1" fill="#1fbb8a"/><circle cx="1220.9" cy="293.5" r="1.05" fill="#8cedc9"/>
<circle cx="1225.1" cy="298.2" r="2.1" fill="#1fbb8a"/><circle cx="1225.1" cy="298.2" r="1.05" fill="#8cedc9"/>
<circle cx="1229.8" cy="297.0" r="2.1" fill="#1fbb8a"/><circle cx="1229.8" cy="297.0" r="1.05" fill="#8cedc9"/>
<circle cx="1236.7" cy="301.7" r="2.1" fill="#1fbb8a"/><circle cx="1236.7" cy="301.7" r="1.05" fill="#8cedc9"/>
<circle cx="1240.2" cy="303.3" r="2.1" fill="#1fbb8a"/><circle cx="1240.2" cy="303.3" r="1.05" fill="#8cedc9"/>
<circle cx="1249.5" cy="308.6" r="2.1" fill="#1fbb8a"/><circle cx="1249.5" cy="308.6" r="1.05" fill="#8cedc9"/>
<circle cx="1255.3" cy="313.3" r="2.1" fill="#1fbb8a"/><circle cx="1255.3" cy="313.3" r="1.05" fill="#8cedc9"/>
<circle cx="1255.8" cy="300.5" r="2.1" fill="#1fbb8a"/><circle cx="1255.8" cy="300.5" r="1.05" fill="#8cedc9"/>
<circle cx="1257.7" cy="297.0" r="2.1" fill="#1fbb8a"/><circle cx="1257.7" cy="297.0" r="1.05" fill="#8cedc9"/>
<circle cx="1263.5" cy="290.7" r="2.1" fill="#1fbb8a"/><circle cx="1263.5" cy="290.7" r="1.05" fill="#8cedc9"/>
<circle cx="1273.5" cy="290.0" r="2.1" fill="#1fbb8a"/><circle cx="1273.5" cy="290.0" r="1.05" fill="#8cedc9"/>
<circle cx="1277.4" cy="278.4" r="2.1" fill="#1fbb8a"/><circle cx="1277.4" cy="278.4" r="1.05" fill="#8cedc9"/>
<circle cx="1270.5" cy="270.3" r="2.1" fill="#1fbb8a"/><circle cx="1270.5" cy="270.3" r="1.05" fill="#8cedc9"/>
<circle cx="1264.7" cy="271.4" r="2.1" fill="#1fbb8a"/><circle cx="1264.7" cy="271.4" r="1.05" fill="#8cedc9"/>
<circle cx="1258.8" cy="273.1" r="2.1" fill="#1fbb8a"/><circle cx="1258.8" cy="273.1" r="1.05" fill="#8cedc9"/>
<circle cx="1252.6" cy="274.9" r="2.1" fill="#1fbb8a"/><circle cx="1252.6" cy="274.9" r="1.05" fill="#8cedc9"/>
<circle cx="1243.3" cy="257.5" r="2.1" fill="#1fbb8a"/><circle cx="1243.3" cy="257.5" r="1.05" fill="#8cedc9"/>
<circle cx="1232.6" cy="257.5" r="2.1" fill="#1fbb8a"/><circle cx="1232.6" cy="257.5" r="1.05" fill="#8cedc9"/>
<circle cx="1218.6" cy="262.8" r="2.1" fill="#1fbb8a"/><circle cx="1218.6" cy="262.8" r="1.05" fill="#8cedc9"/>
<circle cx="1211.6" cy="265.6" r="2.1" fill="#1fbb8a"/><circle cx="1211.6" cy="265.6" r="1.05" fill="#8cedc9"/>
<circle cx="1208.8" cy="271.4" r="2.1" fill="#1fbb8a"/><circle cx="1208.8" cy="271.4" r="1.05" fill="#8cedc9"/>
<circle cx="1206.5" cy="274.9" r="2.1" fill="#1fbb8a"/><circle cx="1206.5" cy="274.9" r="1.05" fill="#8cedc9"/>
<circle cx="1202.3" cy="280.7" r="2.1" fill="#1fbb8a"/><circle cx="1202.3" cy="280.7" r="1.05" fill="#8cedc9"/>
<circle cx="1203.7" cy="286.1" r="2.1" fill="#1fbb8a"/><circle cx="1203.7" cy="286.1" r="1.05" fill="#8cedc9"/>
<circle cx="1203.0" cy="290.7" r="2.1" fill="#1fbb8a"/><circle cx="1203.0" cy="290.7" r="1.05" fill="#8cedc9"/>
<circle cx="1196.0" cy="293.5" r="2.1" fill="#1fbb8a"/><circle cx="1196.0" cy="293.5" r="1.05" fill="#8cedc9"/>
<circle cx="1194.9" cy="304.0" r="2.1" fill="#1fbb8a"/><circle cx="1194.9" cy="304.0" r="1.05" fill="#8cedc9"/>
<circle cx="1189.8" cy="306.3" r="2.1" fill="#1fbb8a"/><circle cx="1189.8" cy="306.3" r="1.05" fill="#8cedc9"/>
<circle cx="1182.1" cy="309.3" r="2.1" fill="#1fbb8a"/><circle cx="1182.1" cy="309.3" r="1.05" fill="#8cedc9"/>
<circle cx="1178.1" cy="322.6" r="2.1" fill="#1fbb8a"/><circle cx="1178.1" cy="322.6" r="1.05" fill="#8cedc9"/>
<circle cx="1179.1" cy="327.9" r="2.1" fill="#1fbb8a"/><circle cx="1179.1" cy="327.9" r="1.05" fill="#8cedc9"/>
<circle cx="1194.9" cy="331.2" r="2.1" fill="#1fbb8a"/><circle cx="1194.9" cy="331.2" r="1.05" fill="#8cedc9"/>
<circle cx="1200.7" cy="330.7" r="2.1" fill="#1fbb8a"/><circle cx="1200.7" cy="330.7" r="1.05" fill="#8cedc9"/>
<circle cx="1210.0" cy="327.2" r="2.1" fill="#1fbb8a"/><circle cx="1210.0" cy="327.2" r="1.05" fill="#8cedc9"/>
<circle cx="1217.7" cy="323.3" r="2.1" fill="#1fbb8a"/><circle cx="1217.7" cy="323.3" r="1.05" fill="#8cedc9"/>
<circle cx="1223.3" cy="320.3" r="2.1" fill="#1fbb8a"/><circle cx="1223.3" cy="320.3" r="1.05" fill="#8cedc9"/>
<circle cx="1227.0" cy="333.1" r="2.1" fill="#1fbb8a"/><circle cx="1227.0" cy="333.1" r="1.05" fill="#8cedc9"/>
<circle cx="1234.0" cy="335.4" r="2.1" fill="#1fbb8a"/><circle cx="1234.0" cy="335.4" r="1.05" fill="#8cedc9"/>
<circle cx="1239.1" cy="333.1" r="2.1" fill="#1fbb8a"/><circle cx="1239.1" cy="333.1" r="1.05" fill="#8cedc9"/>
<circle cx="1237.9" cy="329.6" r="2.1" fill="#1fbb8a"/><circle cx="1237.9" cy="329.6" r="1.05" fill="#8cedc9"/>
<circle cx="1236.7" cy="322.6" r="2.1" fill="#1fbb8a"/><circle cx="1236.7" cy="322.6" r="1.05" fill="#8cedc9"/>
<circle cx="1241.4" cy="315.6" r="2.1" fill="#1fbb8a"/><circle cx="1241.4" cy="315.6" r="1.05" fill="#8cedc9"/>
<circle cx="1246.0" cy="316.3" r="2.1" fill="#1fbb8a"/><circle cx="1246.0" cy="316.3" r="1.05" fill="#8cedc9"/>
<circle cx="1249.5" cy="326.1" r="2.1" fill="#1fbb8a"/><circle cx="1249.5" cy="326.1" r="1.05" fill="#8cedc9"/>
<circle cx="1262.3" cy="328.4" r="2.1" fill="#1fbb8a"/><circle cx="1262.3" cy="328.4" r="1.05" fill="#8cedc9"/>
<circle cx="1292.6" cy="323.7" r="2.1" fill="#1fbb8a"/><circle cx="1292.6" cy="323.7" r="1.05" fill="#8cedc9"/>
<circle cx="680.7" cy="340.2" r="2.1" fill="#e0607d"/><circle cx="680.7" cy="340.2" r="1.05" fill="#f7a9bb"/>
<circle cx="680.7" cy="374.8" r="2.1" fill="#e0607d"/><circle cx="680.7" cy="374.8" r="1.05" fill="#f7a9bb"/>
<circle cx="704.4" cy="392.7" r="2.1" fill="#e0607d"/><circle cx="704.4" cy="392.7" r="1.05" fill="#f7a9bb"/>
<circle cx="705.3" cy="387.4" r="2.1" fill="#e0607d"/><circle cx="705.3" cy="387.4" r="1.05" fill="#f7a9bb"/>
<circle cx="715.7" cy="388.5" r="2.1" fill="#e0607d"/><circle cx="715.7" cy="388.5" r="1.05" fill="#f7a9bb"/>
<circle cx="726.8" cy="384.9" r="2.1" fill="#e0607d"/><circle cx="726.8" cy="384.9" r="1.05" fill="#f7a9bb"/>
<circle cx="736.7" cy="398.3" r="2.1" fill="#e0607d"/><circle cx="736.7" cy="398.3" r="1.05" fill="#f7a9bb"/>
<circle cx="735.9" cy="403.1" r="2.1" fill="#e0607d"/><circle cx="735.9" cy="403.1" r="1.05" fill="#f7a9bb"/>
<circle cx="728.3" cy="400.4" r="2.1" fill="#e0607d"/><circle cx="728.3" cy="400.4" r="1.05" fill="#f7a9bb"/>
<circle cx="725.4" cy="408.8" r="2.1" fill="#e0607d"/><circle cx="725.4" cy="408.8" r="1.05" fill="#f7a9bb"/>
<circle cx="737.3" cy="423.0" r="2.1" fill="#e0607d"/><circle cx="737.3" cy="423.0" r="1.05" fill="#f7a9bb"/>
<circle cx="734.2" cy="438.8" r="2.1" fill="#e0607d"/><circle cx="734.2" cy="438.8" r="1.05" fill="#f7a9bb"/>
<circle cx="742.1" cy="441.9" r="2.1" fill="#e0607d"/><circle cx="742.1" cy="441.9" r="1.05" fill="#f7a9bb"/>
<circle cx="738.8" cy="451.4" r="2.1" fill="#e0607d"/><circle cx="738.8" cy="451.4" r="1.05" fill="#f7a9bb"/>
<circle cx="740.9" cy="465.4" r="2.1" fill="#e0607d"/><circle cx="740.9" cy="465.4" r="1.05" fill="#f7a9bb"/>
<circle cx="752.6" cy="468.8" r="2.1" fill="#e0607d"/><circle cx="752.6" cy="468.8" r="1.05" fill="#f7a9bb"/>
<circle cx="753.1" cy="460.4" r="2.1" fill="#e0607d"/><circle cx="753.1" cy="460.4" r="1.05" fill="#f7a9bb"/>
<circle cx="762.5" cy="454.9" r="2.1" fill="#e0607d"/><circle cx="762.5" cy="454.9" r="1.05" fill="#f7a9bb"/>
<circle cx="767.3" cy="460.8" r="2.1" fill="#e0607d"/><circle cx="767.3" cy="460.8" r="1.05" fill="#f7a9bb"/>
<circle cx="778.6" cy="473.8" r="2.1" fill="#e0607d"/><circle cx="778.6" cy="473.8" r="1.05" fill="#f7a9bb"/>
<circle cx="780.7" cy="483.4" r="2.1" fill="#e0607d"/><circle cx="780.7" cy="483.4" r="1.05" fill="#f7a9bb"/>
<circle cx="766.0" cy="493.9" r="2.1" fill="#e0607d"/><circle cx="766.0" cy="493.9" r="1.05" fill="#f7a9bb"/>
<circle cx="742.6" cy="496.8" r="2.1" fill="#e0607d"/><circle cx="742.6" cy="496.8" r="1.05" fill="#f7a9bb"/>
<circle cx="975.0" cy="251.3" r="2.1" fill="#e0607d"/><circle cx="975.0" cy="251.3" r="1.05" fill="#f7a9bb"/>
<circle cx="975.0" cy="285.9" r="2.1" fill="#e0607d"/><circle cx="975.0" cy="285.9" r="1.05" fill="#f7a9bb"/>
<circle cx="998.7" cy="303.8" r="2.1" fill="#e0607d"/><circle cx="998.7" cy="303.8" r="1.05" fill="#f7a9bb"/>
<circle cx="999.6" cy="298.5" r="2.1" fill="#e0607d"/><circle cx="999.6" cy="298.5" r="1.05" fill="#f7a9bb"/>
<circle cx="1010.0" cy="299.6" r="2.1" fill="#e0607d"/><circle cx="1010.0" cy="299.6" r="1.05" fill="#f7a9bb"/>
<circle cx="1021.1" cy="296.0" r="2.1" fill="#e0607d"/><circle cx="1021.1" cy="296.0" r="1.05" fill="#f7a9bb"/>
<circle cx="1031.0" cy="309.4" r="2.1" fill="#e0607d"/><circle cx="1031.0" cy="309.4" r="1.05" fill="#f7a9bb"/>
<circle cx="1030.2" cy="314.2" r="2.1" fill="#e0607d"/><circle cx="1030.2" cy="314.2" r="1.05" fill="#f7a9bb"/>
<circle cx="1022.6" cy="311.5" r="2.1" fill="#e0607d"/><circle cx="1022.6" cy="311.5" r="1.05" fill="#f7a9bb"/>
<circle cx="1019.7" cy="319.9" r="2.1" fill="#e0607d"/><circle cx="1019.7" cy="319.9" r="1.05" fill="#f7a9bb"/>
<circle cx="1031.6" cy="334.1" r="2.1" fill="#e0607d"/><circle cx="1031.6" cy="334.1" r="1.05" fill="#f7a9bb"/>
<circle cx="1028.5" cy="349.9" r="2.1" fill="#e0607d"/><circle cx="1028.5" cy="349.9" r="1.05" fill="#f7a9bb"/>
<circle cx="1036.4" cy="353.0" r="2.1" fill="#e0607d"/><circle cx="1036.4" cy="353.0" r="1.05" fill="#f7a9bb"/>
<circle cx="1033.1" cy="362.5" r="2.1" fill="#e0607d"/><circle cx="1033.1" cy="362.5" r="1.05" fill="#f7a9bb"/>
<circle cx="1035.2" cy="376.5" r="2.1" fill="#e0607d"/><circle cx="1035.2" cy="376.5" r="1.05" fill="#f7a9bb"/>
<circle cx="1046.9" cy="379.9" r="2.1" fill="#e0607d"/><circle cx="1046.9" cy="379.9" r="1.05" fill="#f7a9bb"/>
<circle cx="1047.4" cy="371.5" r="2.1" fill="#e0607d"/><circle cx="1047.4" cy="371.5" r="1.05" fill="#f7a9bb"/>
<circle cx="1056.8" cy="366.0" r="2.1" fill="#e0607d"/><circle cx="1056.8" cy="366.0" r="1.05" fill="#f7a9bb"/>
<circle cx="1061.6" cy="371.9" r="2.1" fill="#e0607d"/><circle cx="1061.6" cy="371.9" r="1.05" fill="#f7a9bb"/>
<circle cx="1072.9" cy="384.9" r="2.1" fill="#e0607d"/><circle cx="1072.9" cy="384.9" r="1.05" fill="#f7a9bb"/>
<circle cx="1075.0" cy="394.5" r="2.1" fill="#e0607d"/><circle cx="1075.0" cy="394.5" r="1.05" fill="#f7a9bb"/>
<circle cx="1060.3" cy="405.0" r="2.1" fill="#e0607d"/><circle cx="1060.3" cy="405.0" r="1.05" fill="#f7a9bb"/>
<circle cx="1036.9" cy="407.9" r="2.1" fill="#e0607d"/><circle cx="1036.9" cy="407.9" r="1.05" fill="#f7a9bb"/>
<circle cx="1269.7" cy="451.8" r="2.1" fill="#e0607d"/><circle cx="1269.7" cy="451.8" r="1.05" fill="#f7a9bb"/>
<circle cx="1269.7" cy="486.4" r="2.1" fill="#e0607d"/><circle cx="1269.7" cy="486.4" r="1.05" fill="#f7a9bb"/>
<circle cx="1293.4" cy="504.3" r="2.1" fill="#e0607d"/><circle cx="1293.4" cy="504.3" r="1.05" fill="#f7a9bb"/>
<circle cx="1294.3" cy="499.0" r="2.1" fill="#e0607d"/><circle cx="1294.3" cy="499.0" r="1.05" fill="#f7a9bb"/>
<circle cx="1304.7" cy="500.1" r="2.1" fill="#e0607d"/><circle cx="1304.7" cy="500.1" r="1.05" fill="#f7a9bb"/>
<circle cx="1315.8" cy="496.5" r="2.1" fill="#e0607d"/><circle cx="1315.8" cy="496.5" r="1.05" fill="#f7a9bb"/>
<circle cx="1325.7" cy="509.9" r="2.1" fill="#e0607d"/><circle cx="1325.7" cy="509.9" r="1.05" fill="#f7a9bb"/>
<circle cx="1324.9" cy="514.7" r="2.1" fill="#e0607d"/><circle cx="1324.9" cy="514.7" r="1.05" fill="#f7a9bb"/>
<circle cx="1317.3" cy="512.0" r="2.1" fill="#e0607d"/><circle cx="1317.3" cy="512.0" r="1.05" fill="#f7a9bb"/>
<circle cx="1314.4" cy="520.4" r="2.1" fill="#e0607d"/><circle cx="1314.4" cy="520.4" r="1.05" fill="#f7a9bb"/>
<circle cx="1326.3" cy="534.6" r="2.1" fill="#e0607d"/><circle cx="1326.3" cy="534.6" r="1.05" fill="#f7a9bb"/>
<circle cx="1323.2" cy="550.4" r="2.1" fill="#e0607d"/><circle cx="1323.2" cy="550.4" r="1.05" fill="#f7a9bb"/>
<circle cx="1331.1" cy="553.5" r="2.1" fill="#e0607d"/><circle cx="1331.1" cy="553.5" r="1.05" fill="#f7a9bb"/>
<circle cx="1327.8" cy="563.0" r="2.1" fill="#e0607d"/><circle cx="1327.8" cy="563.0" r="1.05" fill="#f7a9bb"/>
<circle cx="1329.9" cy="577.0" r="2.1" fill="#e0607d"/><circle cx="1329.9" cy="577.0" r="1.05" fill="#f7a9bb"/>
<circle cx="1341.6" cy="580.4" r="2.1" fill="#e0607d"/><circle cx="1341.6" cy="580.4" r="1.05" fill="#f7a9bb"/>
<circle cx="1342.1" cy="572.0" r="2.1" fill="#e0607d"/><circle cx="1342.1" cy="572.0" r="1.05" fill="#f7a9bb"/>
<circle cx="1351.5" cy="566.5" r="2.1" fill="#e0607d"/><circle cx="1351.5" cy="566.5" r="1.05" fill="#f7a9bb"/>
<circle cx="1356.3" cy="572.4" r="2.1" fill="#e0607d"/><circle cx="1356.3" cy="572.4" r="1.05" fill="#f7a9bb"/>
<circle cx="1367.6" cy="585.4" r="2.1" fill="#e0607d"/><circle cx="1367.6" cy="585.4" r="1.05" fill="#f7a9bb"/>
<circle cx="1369.7" cy="595.0" r="2.1" fill="#e0607d"/><circle cx="1369.7" cy="595.0" r="1.05" fill="#f7a9bb"/>
<circle cx="1355.0" cy="605.5" r="2.1" fill="#e0607d"/><circle cx="1355.0" cy="605.5" r="1.05" fill="#f7a9bb"/>
<circle cx="1331.6" cy="608.4" r="2.1" fill="#e0607d"/><circle cx="1331.6" cy="608.4" r="1.05" fill="#f7a9bb"/>
<circle cx="936.2" cy="582.3" r="2.1" fill="#2f8ae6"/><circle cx="936.2" cy="582.3" r="1.05" fill="#93c7ff"/>
<circle cx="946.0" cy="580.0" r="2.1" fill="#2f8ae6"/><circle cx="946.0" cy="580.0" r="1.05" fill="#93c7ff"/>
<circle cx="974.6" cy="597.0" r="2.1" fill="#2f8ae6"/><circle cx="974.6" cy="597.0" r="1.05" fill="#93c7ff"/>
<circle cx="972.9" cy="587.0" r="2.1" fill="#2f8ae6"/><circle cx="972.9" cy="587.0" r="1.05" fill="#93c7ff"/>
<circle cx="975.7" cy="578.3" r="2.1" fill="#2f8ae6"/><circle cx="975.7" cy="578.3" r="1.05" fill="#93c7ff"/>
<circle cx="981.5" cy="573.0" r="2.1" fill="#2f8ae6"/><circle cx="981.5" cy="573.0" r="1.05" fill="#93c7ff"/>
<circle cx="991.5" cy="582.3" r="2.1" fill="#2f8ae6"/><circle cx="991.5" cy="582.3" r="1.05" fill="#93c7ff"/>
<circle cx="995.5" cy="587.0" r="2.1" fill="#2f8ae6"/><circle cx="995.5" cy="587.0" r="1.05" fill="#93c7ff"/>
<circle cx="994.3" cy="577.7" r="2.1" fill="#2f8ae6"/><circle cx="994.3" cy="577.7" r="1.05" fill="#93c7ff"/>
<circle cx="1011.8" cy="567.2" r="2.1" fill="#2f8ae6"/><circle cx="1011.8" cy="567.2" r="1.05" fill="#93c7ff"/>
<circle cx="1020.4" cy="565.3" r="2.1" fill="#2f8ae6"/><circle cx="1020.4" cy="565.3" r="1.05" fill="#93c7ff"/>
<circle cx="1019.4" cy="554.4" r="2.1" fill="#2f8ae6"/><circle cx="1019.4" cy="554.4" r="1.05" fill="#93c7ff"/>
<circle cx="1018.0" cy="548.1" r="2.1" fill="#2f8ae6"/><circle cx="1018.0" cy="548.1" r="1.05" fill="#93c7ff"/>
<circle cx="1017.6" cy="541.6" r="2.1" fill="#2f8ae6"/><circle cx="1017.6" cy="541.6" r="1.05" fill="#93c7ff"/>
<circle cx="1027.3" cy="535.1" r="2.1" fill="#2f8ae6"/><circle cx="1027.3" cy="535.1" r="1.05" fill="#93c7ff"/>
<circle cx="1021.1" cy="536.5" r="2.1" fill="#2f8ae6"/><circle cx="1021.1" cy="536.5" r="1.05" fill="#93c7ff"/>
<circle cx="1009.4" cy="538.1" r="2.1" fill="#2f8ae6"/><circle cx="1009.4" cy="538.1" r="1.05" fill="#93c7ff"/>
<circle cx="1003.2" cy="535.1" r="2.1" fill="#2f8ae6"/><circle cx="1003.2" cy="535.1" r="1.05" fill="#93c7ff"/>
<circle cx="1009.4" cy="534.2" r="2.1" fill="#2f8ae6"/><circle cx="1009.4" cy="534.2" r="1.05" fill="#93c7ff"/>
<circle cx="1009.4" cy="529.5" r="2.1" fill="#2f8ae6"/><circle cx="1009.4" cy="529.5" r="1.05" fill="#93c7ff"/>
<circle cx="1007.8" cy="525.3" r="2.1" fill="#2f8ae6"/><circle cx="1007.8" cy="525.3" r="1.05" fill="#93c7ff"/>
<circle cx="1021.1" cy="523.5" r="2.1" fill="#2f8ae6"/><circle cx="1021.1" cy="523.5" r="1.05" fill="#93c7ff"/>
<circle cx="1024.6" cy="517.9" r="2.1" fill="#2f8ae6"/><circle cx="1024.6" cy="517.9" r="1.05" fill="#93c7ff"/>
<circle cx="1043.6" cy="508.6" r="2.1" fill="#2f8ae6"/><circle cx="1043.6" cy="508.6" r="1.05" fill="#93c7ff"/>
<circle cx="1042.0" cy="499.7" r="2.1" fill="#2f8ae6"/><circle cx="1042.0" cy="499.7" r="1.05" fill="#93c7ff"/>
<circle cx="1035.0" cy="500.9" r="2.1" fill="#2f8ae6"/><circle cx="1035.0" cy="500.9" r="1.05" fill="#93c7ff"/>
<circle cx="1023.4" cy="503.9" r="2.1" fill="#2f8ae6"/><circle cx="1023.4" cy="503.9" r="1.05" fill="#93c7ff"/>
<circle cx="1024.1" cy="509.0" r="2.1" fill="#2f8ae6"/><circle cx="1024.1" cy="509.0" r="1.05" fill="#93c7ff"/>
<circle cx="1017.6" cy="509.5" r="2.1" fill="#2f8ae6"/><circle cx="1017.6" cy="509.5" r="1.05" fill="#93c7ff"/>
<circle cx="1017.1" cy="499.7" r="2.1" fill="#2f8ae6"/><circle cx="1017.1" cy="499.7" r="1.05" fill="#93c7ff"/>
<circle cx="1011.8" cy="500.9" r="2.1" fill="#2f8ae6"/><circle cx="1011.8" cy="500.9" r="1.05" fill="#93c7ff"/>
<circle cx="1008.3" cy="500.9" r="2.1" fill="#2f8ae6"/><circle cx="1008.3" cy="500.9" r="1.05" fill="#93c7ff"/>
<circle cx="1021.1" cy="485.8" r="2.1" fill="#2f8ae6"/><circle cx="1021.1" cy="485.8" r="1.05" fill="#93c7ff"/>
<circle cx="1019.9" cy="481.1" r="2.1" fill="#2f8ae6"/><circle cx="1019.9" cy="481.1" r="1.05" fill="#93c7ff"/>
<circle cx="1016.4" cy="482.3" r="2.1" fill="#2f8ae6"/><circle cx="1016.4" cy="482.3" r="1.05" fill="#93c7ff"/>
<circle cx="1011.1" cy="478.8" r="2.1" fill="#2f8ae6"/><circle cx="1011.1" cy="478.8" r="1.05" fill="#93c7ff"/>
<circle cx="999.4" cy="478.8" r="2.1" fill="#2f8ae6"/><circle cx="999.4" cy="478.8" r="1.05" fill="#93c7ff"/>
<circle cx="992.0" cy="480.7" r="2.1" fill="#2f8ae6"/><circle cx="992.0" cy="480.7" r="1.05" fill="#93c7ff"/>
<circle cx="986.9" cy="482.3" r="2.1" fill="#2f8ae6"/><circle cx="986.9" cy="482.3" r="1.05" fill="#93c7ff"/>
<circle cx="980.4" cy="478.8" r="2.1" fill="#2f8ae6"/><circle cx="980.4" cy="478.8" r="1.05" fill="#93c7ff"/>
<circle cx="979.2" cy="475.3" r="2.1" fill="#2f8ae6"/><circle cx="979.2" cy="475.3" r="1.05" fill="#93c7ff"/>
<circle cx="1154.2" cy="581.6" r="2.1" fill="#2f8ae6"/><circle cx="1154.2" cy="581.6" r="1.05" fill="#93c7ff"/>
<circle cx="1164.0" cy="579.3" r="2.1" fill="#2f8ae6"/><circle cx="1164.0" cy="579.3" r="1.05" fill="#93c7ff"/>
<circle cx="1192.6" cy="596.3" r="2.1" fill="#2f8ae6"/><circle cx="1192.6" cy="596.3" r="1.05" fill="#93c7ff"/>
<circle cx="1190.9" cy="586.3" r="2.1" fill="#2f8ae6"/><circle cx="1190.9" cy="586.3" r="1.05" fill="#93c7ff"/>
<circle cx="1193.7" cy="577.6" r="2.1" fill="#2f8ae6"/><circle cx="1193.7" cy="577.6" r="1.05" fill="#93c7ff"/>
<circle cx="1199.5" cy="572.3" r="2.1" fill="#2f8ae6"/><circle cx="1199.5" cy="572.3" r="1.05" fill="#93c7ff"/>
<circle cx="1209.5" cy="581.6" r="2.1" fill="#2f8ae6"/><circle cx="1209.5" cy="581.6" r="1.05" fill="#93c7ff"/>
<circle cx="1213.5" cy="586.3" r="2.1" fill="#2f8ae6"/><circle cx="1213.5" cy="586.3" r="1.05" fill="#93c7ff"/>
<circle cx="1212.3" cy="577.0" r="2.1" fill="#2f8ae6"/><circle cx="1212.3" cy="577.0" r="1.05" fill="#93c7ff"/>
<circle cx="1229.8" cy="566.5" r="2.1" fill="#2f8ae6"/><circle cx="1229.8" cy="566.5" r="1.05" fill="#93c7ff"/>
<circle cx="1238.4" cy="564.6" r="2.1" fill="#2f8ae6"/><circle cx="1238.4" cy="564.6" r="1.05" fill="#93c7ff"/>
<circle cx="1237.4" cy="553.7" r="2.1" fill="#2f8ae6"/><circle cx="1237.4" cy="553.7" r="1.05" fill="#93c7ff"/>
<circle cx="1236.0" cy="547.4" r="2.1" fill="#2f8ae6"/><circle cx="1236.0" cy="547.4" r="1.05" fill="#93c7ff"/>
<circle cx="1235.6" cy="540.9" r="2.1" fill="#2f8ae6"/><circle cx="1235.6" cy="540.9" r="1.05" fill="#93c7ff"/>
<circle cx="1245.3" cy="534.4" r="2.1" fill="#2f8ae6"/><circle cx="1245.3" cy="534.4" r="1.05" fill="#93c7ff"/>
<circle cx="1239.1" cy="535.8" r="2.1" fill="#2f8ae6"/><circle cx="1239.1" cy="535.8" r="1.05" fill="#93c7ff"/>
<circle cx="1227.4" cy="537.4" r="2.1" fill="#2f8ae6"/><circle cx="1227.4" cy="537.4" r="1.05" fill="#93c7ff"/>
<circle cx="1221.2" cy="534.4" r="2.1" fill="#2f8ae6"/><circle cx="1221.2" cy="534.4" r="1.05" fill="#93c7ff"/>
<circle cx="1227.4" cy="533.5" r="2.1" fill="#2f8ae6"/><circle cx="1227.4" cy="533.5" r="1.05" fill="#93c7ff"/>
<circle cx="1227.4" cy="528.8" r="2.1" fill="#2f8ae6"/><circle cx="1227.4" cy="528.8" r="1.05" fill="#93c7ff"/>
<circle cx="1225.8" cy="524.6" r="2.1" fill="#2f8ae6"/><circle cx="1225.8" cy="524.6" r="1.05" fill="#93c7ff"/>
<circle cx="1239.1" cy="522.8" r="2.1" fill="#2f8ae6"/><circle cx="1239.1" cy="522.8" r="1.05" fill="#93c7ff"/>
<circle cx="1242.6" cy="517.2" r="2.1" fill="#2f8ae6"/><circle cx="1242.6" cy="517.2" r="1.05" fill="#93c7ff"/>
<circle cx="1261.6" cy="507.9" r="2.1" fill="#2f8ae6"/><circle cx="1261.6" cy="507.9" r="1.05" fill="#93c7ff"/>
<circle cx="1260.0" cy="499.0" r="2.1" fill="#2f8ae6"/><circle cx="1260.0" cy="499.0" r="1.05" fill="#93c7ff"/>
<circle cx="1253.0" cy="500.2" r="2.1" fill="#2f8ae6"/><circle cx="1253.0" cy="500.2" r="1.05" fill="#93c7ff"/>
<circle cx="1241.4" cy="503.2" r="2.1" fill="#2f8ae6"/><circle cx="1241.4" cy="503.2" r="1.05" fill="#93c7ff"/>
<circle cx="1242.1" cy="508.3" r="2.1" fill="#2f8ae6"/><circle cx="1242.1" cy="508.3" r="1.05" fill="#93c7ff"/>
<circle cx="1235.6" cy="508.8" r="2.1" fill="#2f8ae6"/><circle cx="1235.6" cy="508.8" r="1.05" fill="#93c7ff"/>
<circle cx="1235.1" cy="499.0" r="2.1" fill="#2f8ae6"/><circle cx="1235.1" cy="499.0" r="1.05" fill="#93c7ff"/>
<circle cx="1229.8" cy="500.2" r="2.1" fill="#2f8ae6"/><circle cx="1229.8" cy="500.2" r="1.05" fill="#93c7ff"/>
<circle cx="1226.3" cy="500.2" r="2.1" fill="#2f8ae6"/><circle cx="1226.3" cy="500.2" r="1.05" fill="#93c7ff"/>
<circle cx="1239.1" cy="485.1" r="2.1" fill="#2f8ae6"/><circle cx="1239.1" cy="485.1" r="1.05" fill="#93c7ff"/>
<circle cx="1237.9" cy="480.4" r="2.1" fill="#2f8ae6"/><circle cx="1237.9" cy="480.4" r="1.05" fill="#93c7ff"/>
<circle cx="1234.4" cy="481.6" r="2.1" fill="#2f8ae6"/><circle cx="1234.4" cy="481.6" r="1.05" fill="#93c7ff"/>
<circle cx="1229.1" cy="478.1" r="2.1" fill="#2f8ae6"/><circle cx="1229.1" cy="478.1" r="1.05" fill="#93c7ff"/>
<circle cx="1217.4" cy="478.1" r="2.1" fill="#2f8ae6"/><circle cx="1217.4" cy="478.1" r="1.05" fill="#93c7ff"/>
<circle cx="1210.0" cy="480.0" r="2.1" fill="#2f8ae6"/><circle cx="1210.0" cy="480.0" r="1.05" fill="#93c7ff"/>
<circle cx="1204.9" cy="481.6" r="2.1" fill="#2f8ae6"/><circle cx="1204.9" cy="481.6" r="1.05" fill="#93c7ff"/>
<circle cx="1198.4" cy="478.1" r="2.1" fill="#2f8ae6"/><circle cx="1198.4" cy="478.1" r="1.05" fill="#93c7ff"/>
<circle cx="1197.2" cy="474.6" r="2.1" fill="#2f8ae6"/><circle cx="1197.2" cy="474.6" r="1.05" fill="#93c7ff"/>
<circle cx="1277.0" cy="731.0" r="2.1" fill="#2f8ae6"/><circle cx="1277.0" cy="731.0" r="1.05" fill="#93c7ff"/>
<circle cx="1286.8" cy="728.7" r="2.1" fill="#2f8ae6"/><circle cx="1286.8" cy="728.7" r="1.05" fill="#93c7ff"/>
<circle cx="1315.4" cy="745.7" r="2.1" fill="#2f8ae6"/><circle cx="1315.4" cy="745.7" r="1.05" fill="#93c7ff"/>
<circle cx="1313.7" cy="735.7" r="2.1" fill="#2f8ae6"/><circle cx="1313.7" cy="735.7" r="1.05" fill="#93c7ff"/>
<circle cx="1316.5" cy="727.0" r="2.1" fill="#2f8ae6"/><circle cx="1316.5" cy="727.0" r="1.05" fill="#93c7ff"/>
<circle cx="1322.3" cy="721.7" r="2.1" fill="#2f8ae6"/><circle cx="1322.3" cy="721.7" r="1.05" fill="#93c7ff"/>
<circle cx="1332.3" cy="731.0" r="2.1" fill="#2f8ae6"/><circle cx="1332.3" cy="731.0" r="1.05" fill="#93c7ff"/>
<circle cx="1336.3" cy="735.7" r="2.1" fill="#2f8ae6"/><circle cx="1336.3" cy="735.7" r="1.05" fill="#93c7ff"/>
<circle cx="1335.1" cy="726.4" r="2.1" fill="#2f8ae6"/><circle cx="1335.1" cy="726.4" r="1.05" fill="#93c7ff"/>
<circle cx="1352.6" cy="715.9" r="2.1" fill="#2f8ae6"/><circle cx="1352.6" cy="715.9" r="1.05" fill="#93c7ff"/>
<circle cx="1361.2" cy="714.0" r="2.1" fill="#2f8ae6"/><circle cx="1361.2" cy="714.0" r="1.05" fill="#93c7ff"/>
<circle cx="1360.2" cy="703.1" r="2.1" fill="#2f8ae6"/><circle cx="1360.2" cy="703.1" r="1.05" fill="#93c7ff"/>
<circle cx="1358.8" cy="696.8" r="2.1" fill="#2f8ae6"/><circle cx="1358.8" cy="696.8" r="1.05" fill="#93c7ff"/>
<circle cx="1358.4" cy="690.3" r="2.1" fill="#2f8ae6"/><circle cx="1358.4" cy="690.3" r="1.05" fill="#93c7ff"/>
<circle cx="1368.1" cy="683.8" r="2.1" fill="#2f8ae6"/><circle cx="1368.1" cy="683.8" r="1.05" fill="#93c7ff"/>
<circle cx="1361.9" cy="685.2" r="2.1" fill="#2f8ae6"/><circle cx="1361.9" cy="685.2" r="1.05" fill="#93c7ff"/>
<circle cx="1350.2" cy="686.8" r="2.1" fill="#2f8ae6"/><circle cx="1350.2" cy="686.8" r="1.05" fill="#93c7ff"/>
<circle cx="1344.0" cy="683.8" r="2.1" fill="#2f8ae6"/><circle cx="1344.0" cy="683.8" r="1.05" fill="#93c7ff"/>
<circle cx="1350.2" cy="682.9" r="2.1" fill="#2f8ae6"/><circle cx="1350.2" cy="682.9" r="1.05" fill="#93c7ff"/>
<circle cx="1350.2" cy="678.2" r="2.1" fill="#2f8ae6"/><circle cx="1350.2" cy="678.2" r="1.05" fill="#93c7ff"/>
<circle cx="1348.6" cy="674.0" r="2.1" fill="#2f8ae6"/><circle cx="1348.6" cy="674.0" r="1.05" fill="#93c7ff"/>
<circle cx="1361.9" cy="672.2" r="2.1" fill="#2f8ae6"/><circle cx="1361.9" cy="672.2" r="1.05" fill="#93c7ff"/>
<circle cx="1365.4" cy="666.6" r="2.1" fill="#2f8ae6"/><circle cx="1365.4" cy="666.6" r="1.05" fill="#93c7ff"/>
<circle cx="1384.4" cy="657.3" r="2.1" fill="#2f8ae6"/><circle cx="1384.4" cy="657.3" r="1.05" fill="#93c7ff"/>
<circle cx="1382.8" cy="648.4" r="2.1" fill="#2f8ae6"/><circle cx="1382.8" cy="648.4" r="1.05" fill="#93c7ff"/>
<circle cx="1375.8" cy="649.6" r="2.1" fill="#2f8ae6"/><circle cx="1375.8" cy="649.6" r="1.05" fill="#93c7ff"/>
<circle cx="1364.2" cy="652.6" r="2.1" fill="#2f8ae6"/><circle cx="1364.2" cy="652.6" r="1.05" fill="#93c7ff"/>
<circle cx="1364.9" cy="657.7" r="2.1" fill="#2f8ae6"/><circle cx="1364.9" cy="657.7" r="1.05" fill="#93c7ff"/>
<circle cx="1358.4" cy="658.2" r="2.1" fill="#2f8ae6"/><circle cx="1358.4" cy="658.2" r="1.05" fill="#93c7ff"/>
<circle cx="1357.9" cy="648.4" r="2.1" fill="#2f8ae6"/><circle cx="1357.9" cy="648.4" r="1.05" fill="#93c7ff"/>
<circle cx="1352.6" cy="649.6" r="2.1" fill="#2f8ae6"/><circle cx="1352.6" cy="649.6" r="1.05" fill="#93c7ff"/>
<circle cx="1349.1" cy="649.6" r="2.1" fill="#2f8ae6"/><circle cx="1349.1" cy="649.6" r="1.05" fill="#93c7ff"/>
<circle cx="1361.9" cy="634.5" r="2.1" fill="#2f8ae6"/><circle cx="1361.9" cy="634.5" r="1.05" fill="#93c7ff"/>
<circle cx="1360.7" cy="629.8" r="2.1" fill="#2f8ae6"/><circle cx="1360.7" cy="629.8" r="1.05" fill="#93c7ff"/>
<circle cx="1357.2" cy="631.0" r="2.1" fill="#2f8ae6"/><circle cx="1357.2" cy="631.0" r="1.05" fill="#93c7ff"/>
<circle cx="1351.9" cy="627.5" r="2.1" fill="#2f8ae6"/><circle cx="1351.9" cy="627.5" r="1.05" fill="#93c7ff"/>
<circle cx="1340.2" cy="627.5" r="2.1" fill="#2f8ae6"/><circle cx="1340.2" cy="627.5" r="1.05" fill="#93c7ff"/>
<circle cx="1332.8" cy="629.4" r="2.1" fill="#2f8ae6"/><circle cx="1332.8" cy="629.4" r="1.05" fill="#93c7ff"/>
<circle cx="1327.7" cy="631.0" r="2.1" fill="#2f8ae6"/><circle cx="1327.7" cy="631.0" r="1.05" fill="#93c7ff"/>
<circle cx="1321.2" cy="627.5" r="2.1" fill="#2f8ae6"/><circle cx="1321.2" cy="627.5" r="1.05" fill="#93c7ff"/>
<circle cx="1320.0" cy="624.0" r="2.1" fill="#2f8ae6"/><circle cx="1320.0" cy="624.0" r="1.05" fill="#93c7ff"/>
<circle cx="919.3" cy="303.9" r="2.1" fill="#2f8ae6"/><circle cx="919.3" cy="303.9" r="1.05" fill="#93c7ff"/>
<circle cx="882.3" cy="320.6" r="2.1" fill="#2f8ae6"/><circle cx="882.3" cy="320.6" r="1.05" fill="#93c7ff"/>
<circle cx="883.1" cy="324.0" r="2.1" fill="#2f8ae6"/><circle cx="883.1" cy="324.0" r="1.05" fill="#93c7ff"/>
<circle cx="869.6" cy="332.5" r="2.1" fill="#2f8ae6"/><circle cx="869.6" cy="332.5" r="1.05" fill="#93c7ff"/>
<circle cx="870.7" cy="340.4" r="2.1" fill="#2f8ae6"/><circle cx="870.7" cy="340.4" r="1.05" fill="#93c7ff"/>
<circle cx="883.9" cy="338.3" r="2.1" fill="#2f8ae6"/><circle cx="883.9" cy="338.3" r="1.05" fill="#93c7ff"/>
<circle cx="884.7" cy="343.6" r="2.1" fill="#2f8ae6"/><circle cx="884.7" cy="343.6" r="1.05" fill="#93c7ff"/>
<circle cx="891.8" cy="353.1" r="2.1" fill="#2f8ae6"/><circle cx="891.8" cy="353.1" r="1.05" fill="#93c7ff"/>
<circle cx="886.6" cy="361.8" r="2.1" fill="#2f8ae6"/><circle cx="886.6" cy="361.8" r="1.05" fill="#93c7ff"/>
<circle cx="880.7" cy="376.9" r="2.1" fill="#2f8ae6"/><circle cx="880.7" cy="376.9" r="1.05" fill="#93c7ff"/>
<circle cx="869.5" cy="374.1" r="2.1" fill="#2f8ae6"/><circle cx="869.5" cy="374.1" r="1.05" fill="#93c7ff"/>
<circle cx="855.3" cy="380.9" r="2.1" fill="#2f8ae6"/><circle cx="855.3" cy="380.9" r="1.05" fill="#93c7ff"/>
<circle cx="855.3" cy="386.4" r="2.1" fill="#2f8ae6"/><circle cx="855.3" cy="386.4" r="1.05" fill="#93c7ff"/>
<circle cx="857.4" cy="417.8" r="2.1" fill="#2f8ae6"/><circle cx="857.4" cy="417.8" r="1.05" fill="#93c7ff"/>
<circle cx="847.6" cy="436.3" r="2.1" fill="#2f8ae6"/><circle cx="847.6" cy="436.3" r="1.05" fill="#93c7ff"/>
<circle cx="828.4" cy="451.0" r="2.1" fill="#2f8ae6"/><circle cx="828.4" cy="451.0" r="1.05" fill="#93c7ff"/>
<circle cx="849.4" cy="453.1" r="2.1" fill="#2f8ae6"/><circle cx="849.4" cy="453.1" r="1.05" fill="#93c7ff"/>
<circle cx="861.1" cy="450.0" r="2.1" fill="#2f8ae6"/><circle cx="861.1" cy="450.0" r="1.05" fill="#93c7ff"/>
<circle cx="873.2" cy="447.5" r="2.1" fill="#2f8ae6"/><circle cx="873.2" cy="447.5" r="1.05" fill="#93c7ff"/>
<circle cx="883.9" cy="446.1" r="2.1" fill="#2f8ae6"/><circle cx="883.9" cy="446.1" r="1.05" fill="#93c7ff"/>
<circle cx="891.9" cy="444.7" r="2.1" fill="#2f8ae6"/><circle cx="891.9" cy="444.7" r="1.05" fill="#93c7ff"/>
<circle cx="898.3" cy="439.8" r="2.1" fill="#2f8ae6"/><circle cx="898.3" cy="439.8" r="1.05" fill="#93c7ff"/>
<circle cx="897.9" cy="431.8" r="2.1" fill="#2f8ae6"/><circle cx="897.9" cy="431.8" r="1.05" fill="#93c7ff"/>
<circle cx="914.7" cy="441.2" r="2.1" fill="#2f8ae6"/><circle cx="914.7" cy="441.2" r="1.05" fill="#93c7ff"/>
<circle cx="920.3" cy="440.5" r="2.1" fill="#2f8ae6"/><circle cx="920.3" cy="440.5" r="1.05" fill="#93c7ff"/>
<circle cx="919.8" cy="428.6" r="2.1" fill="#2f8ae6"/><circle cx="919.8" cy="428.6" r="1.05" fill="#93c7ff"/>
<circle cx="921.0" cy="416.7" r="2.1" fill="#2f8ae6"/><circle cx="921.0" cy="416.7" r="1.05" fill="#93c7ff"/>
<circle cx="922.1" cy="405.8" r="2.1" fill="#2f8ae6"/><circle cx="922.1" cy="405.8" r="1.05" fill="#93c7ff"/>
<circle cx="923.1" cy="396.5" r="2.1" fill="#2f8ae6"/><circle cx="923.1" cy="396.5" r="1.05" fill="#93c7ff"/>
<circle cx="942.6" cy="386.2" r="2.1" fill="#2f8ae6"/><circle cx="942.6" cy="386.2" r="1.05" fill="#93c7ff"/>
<circle cx="942.7" cy="381.4" r="2.1" fill="#2f8ae6"/><circle cx="942.7" cy="381.4" r="1.05" fill="#93c7ff"/>
<circle cx="959.4" cy="371.4" r="2.1" fill="#2f8ae6"/><circle cx="959.4" cy="371.4" r="1.05" fill="#93c7ff"/>
<circle cx="959.0" cy="365.6" r="2.1" fill="#2f8ae6"/><circle cx="959.0" cy="365.6" r="1.05" fill="#93c7ff"/>
<circle cx="968.7" cy="371.4" r="2.1" fill="#2f8ae6"/><circle cx="968.7" cy="371.4" r="1.05" fill="#93c7ff"/>
<circle cx="968.7" cy="380.7" r="2.1" fill="#2f8ae6"/><circle cx="968.7" cy="380.7" r="1.05" fill="#93c7ff"/>
<circle cx="1013.0" cy="374.9" r="2.1" fill="#2f8ae6"/><circle cx="1013.0" cy="374.9" r="1.05" fill="#93c7ff"/>
<circle cx="1021.1" cy="373.0" r="2.1" fill="#2f8ae6"/><circle cx="1021.1" cy="373.0" r="1.05" fill="#93c7ff"/>
<circle cx="1025.0" cy="393.5" r="2.1" fill="#2f8ae6"/><circle cx="1025.0" cy="393.5" r="1.05" fill="#93c7ff"/>
<circle cx="917" cy="156.1" r="2.2" fill="#5fd35f"/><circle cx="917" cy="156.1" r="1" fill="#c9f7c9"/>
<circle cx="1196" cy="124.4" r="2.2" fill="#5fd35f"/><circle cx="1196" cy="124.4" r="1" fill="#c9f7c9"/>
<circle cx="1266.9" cy="95.4" r="2.2" fill="#5fd35f"/><circle cx="1266.9" cy="95.4" r="1" fill="#c9f7c9"/>
<circle cx="678" cy="299.3" r="2.2" fill="#5fd35f"/><circle cx="678" cy="299.3" r="1" fill="#c9f7c9"/>
<circle cx="749.2" cy="270.9" r="2.2" fill="#5fd35f"/><circle cx="749.2" cy="270.9" r="1" fill="#c9f7c9"/>
<circle cx="1210" cy="295.8" r="2.2" fill="#5fd35f"/><circle cx="1210" cy="295.8" r="1" fill="#c9f7c9"/>
<circle cx="1281.3" cy="267.4" r="2.2" fill="#5fd35f"/><circle cx="1281.3" cy="267.4" r="1" fill="#c9f7c9"/>
<circle cx="861.1" cy="450" r="2.2" fill="#5fd35f"/><circle cx="861.1" cy="450" r="1" fill="#c9f7c9"/>
<circle cx="936.3" cy="459.8" r="2.2" fill="#5fd35f"/><circle cx="936.3" cy="459.8" r="1" fill="#c9f7c9"/>
<circle cx="1204.6" cy="491.6" r="2.2" fill="#5fd35f"/><circle cx="1204.6" cy="491.6" r="1" fill="#c9f7c9"/>
<circle cx="861.8" cy="734" r="2.2" fill="#5fd35f"/><circle cx="861.8" cy="734" r="1" fill="#c9f7c9"/>
<circle cx="939.7" cy="573" r="2.2" fill="#5fd35f"/><circle cx="939.7" cy="573" r="1" fill="#c9f7c9"/>
<circle cx="1157.6" cy="571.8" r="2.2" fill="#5fd35f"/><circle cx="1157.6" cy="571.8" r="1" fill="#c9f7c9"/>
<circle cx="1280.6" cy="721.8" r="2.2" fill="#5fd35f"/><circle cx="1280.6" cy="721.8" r="1" fill="#c9f7c9"/>
<path d="M549.3 185.9 L559.5 196.1 L549.3 206.29999999999998 L539.0999999999999 196.1 Z" fill="#3cb54f" stroke="#3cb54f" stroke-width="2.4" stroke-linejoin="round"/>
<text x="549.3" y="199.4" text-anchor="middle" font-family="Liberation Sans" font-weight="700" font-size="9.2" fill="#f4f4f4">D5</text>
<path d="M674 144.9 L684.2 155.1 L674 165.29999999999998 L663.8 155.1 Z" fill="#3cb54f" stroke="#3cb54f" stroke-width="2.4" stroke-linejoin="round"/>
<text x="674" y="158.4" text-anchor="middle" font-family="Liberation Sans" font-weight="700" font-size="9.2" fill="#f4f4f4">D4</text>
<path d="M1162.5 404.1 L1172.7 414.3 L1162.5 424.5 L1152.3 414.3 Z" fill="#3cb54f" stroke="#3cb54f" stroke-width="2.4" stroke-linejoin="round"/>
<text x="1162.5" y="417.6" text-anchor="middle" font-family="Liberation Sans" font-weight="700" font-size="9.2" fill="#f4f4f4">D2</text>
<path d="M860.1 470.5 L870.3000000000001 480.7 L860.1 490.9 L849.9 480.7 Z" fill="#3cb54f" stroke="#3cb54f" stroke-width="2.4" stroke-linejoin="round"/>
<text x="860.1" y="484.0" text-anchor="middle" font-family="Liberation Sans" font-weight="700" font-size="9.2" fill="#f4f4f4">D1</text>
<path d="M990.8 489.5 L1001.0 499.7 L990.8 509.9 L980.5999999999999 499.7 Z" fill="#3cb54f" stroke="#3cb54f" stroke-width="2.4" stroke-linejoin="round"/>
<text x="990.8" y="503.0" text-anchor="middle" font-family="Liberation Sans" font-weight="700" font-size="9.2" fill="#f4f4f4">D0</text>
<path d="M572.5 469.1 L582.7 479.3 L572.5 489.5 L562.3 479.3 Z" fill="#3cb54f" stroke="#3cb54f" stroke-width="2.4" stroke-linejoin="round"/>
<text x="572.5" y="482.6" text-anchor="middle" font-family="Liberation Sans" font-weight="700" font-size="9.2" fill="#f4f4f4">D6</text>
<path d="M985.2 665.8 L995.4000000000001 676 L985.2 686.2 L975.0 676 Z" fill="#3cb54f" stroke="#3cb54f" stroke-width="2.4" stroke-linejoin="round"/>
<text x="985.2" y="679.3" text-anchor="middle" font-family="Liberation Sans" font-weight="700" font-size="9.2" fill="#f4f4f4">D3</text>
<polygon points="1072.90,149.40 1081.91,154.60 1081.91,165.00 1072.90,170.20 1063.89,165.00 1063.89,154.60" fill="#e8a31f" stroke="#e8a31f" stroke-width="2" stroke-linejoin="round"/>
<text x="1072.9" y="163.8" text-anchor="middle" font-family="Liberation Sans" font-size="11" fill="#15171a">Y</text>
<polygon points="900.50,234.10 909.51,239.30 909.51,249.70 900.50,254.90 891.49,249.70 891.49,239.30" fill="#e8a31f" stroke="#e8a31f" stroke-width="2" stroke-linejoin="round"/>
<text x="900.5" y="248.5" text-anchor="middle" font-family="Liberation Sans" font-size="11" fill="#15171a">Y</text>
<polygon points="886.40,384.90 895.41,390.10 895.41,400.50 886.40,405.70 877.39,400.50 877.39,390.10" fill="#e8a31f" stroke="#e8a31f" stroke-width="2" stroke-linejoin="round"/>
<text x="886.4" y="399.3" text-anchor="middle" font-family="Liberation Sans" font-size="11" fill="#15171a">Y</text>
<polygon points="714.70,470.30 723.71,475.50 723.71,485.90 714.70,491.10 705.69,485.90 705.69,475.50" fill="#e8a31f" stroke="#e8a31f" stroke-width="2" stroke-linejoin="round"/>
<text x="714.7" y="484.7" text-anchor="middle" font-family="Liberation Sans" font-size="11" fill="#15171a">Y</text>
<polygon points="930.40,272.60 939.41,277.80 939.41,288.20 930.40,293.40 921.39,288.20 921.39,277.80" fill="#2d8ae0" stroke="#2d8ae0" stroke-width="2" stroke-linejoin="round"/>
<text x="930.4" y="287" text-anchor="middle" font-family="Liberation Sans" font-size="11" fill="#15171a">D</text>
<polygon points="1220.00,364.90 1229.01,370.10 1229.01,380.50 1220.00,385.70 1210.99,380.50 1210.99,370.10" fill="#2d8ae0" stroke="#2d8ae0" stroke-width="2" stroke-linejoin="round"/>
<text x="1220" y="379.3" text-anchor="middle" font-family="Liberation Sans" font-size="11" fill="#15171a">D</text>
<polygon points="744.50,509.10 753.51,514.30 753.51,524.70 744.50,529.90 735.49,524.70 735.49,514.30" fill="#2d8ae0" stroke="#2d8ae0" stroke-width="2" stroke-linejoin="round"/>
<text x="744.5" y="523.5" text-anchor="middle" font-family="Liberation Sans" font-size="11" fill="#15171a">D</text>
<polygon points="1034.20,601.10 1043.21,606.30 1043.21,616.70 1034.20,621.90 1025.19,616.70 1025.19,606.30" fill="#2d8ae0" stroke="#2d8ae0" stroke-width="2" stroke-linejoin="round"/>
<text x="1034.2" y="615.5" text-anchor="middle" font-family="Liberation Sans" font-size="11" fill="#15171a">D</text>
</svg>
<div class="b" style="left:390px;top:64.3px;width:117.6px;height:29.3px;background:#fff;border-radius:4px"></div><svg class="b" style="left:400px;top:70px" width="20" height="18" viewBox="0 0 20 18"><g fill="#c9ced4"><path d="M7 2 L8.3 6.8 L13 8 L8.3 9.3 L7 14 L5.7 9.3 L1 8 L5.7 6.8 Z"/><path d="M15 1 L15.6 3.2 L17.8 3.8 L15.6 4.4 L15 6.6 L14.4 4.4 L12.2 3.8 L14.4 3.2 Z"/><path d="M14.6 10.6 L15.3 13 L17.7 13.7 L15.3 14.4 L14.6 16.8 L13.9 14.4 L11.5 13.7 L13.9 13 Z"/></g></svg><div class="t" style="left:421.8px;top:73.7px;font-size:10.5px;color:#8a9099;font-weight:700">Optimize route</div><div class="b" style="left:1337.8px;top:65.2px;width:28.9px;height:29.4px;background:#fff;border-radius:5px"></div><svg class="b" style="left:1345px;top:72.4px" width="14" height="14" viewBox="0 0 14 14"><g fill="none" stroke="#2b2e33" stroke-width="1.1"><path d="M7 1.2 L8.3 2.6 L10.3 2.3 L10.7 4.2 L12.5 5.2 L11.6 7 L12.5 8.8 L10.7 9.8 L10.3 11.7 L8.3 11.4 L7 12.8 L5.7 11.4 L3.7 11.7 L3.3 9.8 L1.5 8.8 L2.4 7 L1.5 5.2 L3.3 4.2 L3.7 2.3 L5.7 2.6 Z"/><circle cx="7" cy="7" r="1.9"/></g></svg><div class="b" style="left:1372.6px;top:65.2px;width:21.1px;height:63.2px;background:#fff;border-radius:5px"></div><div class="b" style="left:1373.6px;top:85.6px;width:19px;height:0.8px;background:#eceef1"></div><div class="b" style="left:1373.6px;top:106.9px;width:19px;height:0.8px;background:#eceef1"></div><svg class="b" style="left:1372.6px;top:65.2px" width="21" height="63" viewBox="0 0 21 63"><path d="M10.6 6 V15.2 M6 10.6 H15.2" stroke="#111" stroke-width="1.9"/><path d="M6.2 31.4 H15" stroke="#111" stroke-width="1.9"/><path d="M10.6 47.8 L13 53.6 H8.2 Z" fill="#111"/><path d="M8.2 53.6 H13 L10.6 58 Z" fill="#d5dadf"/></svg><div class="b" style="left:1352.4px;top:280px;width:41.3px;height:230.7px;background:#fff;border-radius:6px"></div><div class="b" style="left:1366px;top:323.2px;width:13px;height:1px;background:#dde4ea"></div><div class="b" style="left:1366px;top:359.5px;width:13px;height:1px;background:#dde4ea"></div><div class="b" style="left:1366px;top:395.0px;width:13px;height:1px;background:#dde4ea"></div><div class="b" style="left:1366px;top:430.5px;width:13px;height:1px;background:#dde4ea"></div><div class="b" style="left:1366px;top:466.0px;width:13px;height:1px;background:#dde4ea"></div><svg class="b" style="left:1352.4px;top:280px" width="42" height="231" viewBox="1352.4 280 42 231">
<path d="M1367 299.6 L1379.4 305.2 L1372.6 306.8 L1369.8 312.4 Z" fill="none" stroke="#4a55c8" stroke-width="1.3" stroke-linejoin="round"/>
<circle cx="1372.6" cy="341.6" r="6.2" fill="none" stroke="#15171a" stroke-width="1.5" stroke-dasharray="2.6 2.2"/>
<path d="M1374.6 343.6 L1378.8 347.8 M1374.6 343.6 H1377.6 M1374.6 343.6 V346.6" stroke="#15171a" stroke-width="1.4"/>
<path d="M1366.6 382.6 A6 6 0 0 1 1378.4 379.4" fill="none" stroke="#15171a" stroke-width="1.5"/>
<path d="M1379.6 376.2 L1379.4 381.4 L1374.4 380.6" fill="none" stroke="#15171a" stroke-width="1.5"/>
<path d="M1371.4 408.4 A4.6 4.6 0 1 0 1371.6 418.4" fill="none" stroke="#15171a" stroke-width="1.4"/>
<path d="M1369.4 406.4 L1371.4 408.6 L1369 410.4" fill="none" stroke="#15171a" stroke-width="1.3"/>
<rect x="1374.6" y="407.6" width="5" height="4.4" fill="#15171a"/>
<rect x="1375.1" y="414" width="4.2" height="3.6" fill="none" stroke="#15171a" stroke-width="1"/>
<circle cx="1373" cy="448.7" r="6.6" fill="none" stroke="#15171a" stroke-width="1.3"/>
<path d="M1371.4 446 V451.4 M1374.6 446 V451.4" stroke="#15171a" stroke-width="1.3"/>
<path d="M1367.4 479.6 H1378.6 M1368.6 479.6 V490.6 H1377.4 V479.6 M1370.8 479.6 V478.2 H1375.2 V479.6 M1371.6 482.4 V488 M1374.4 482.4 V488" fill="none" stroke="#15171a" stroke-width="1.3"/>
</svg>
</div></div>
</body></html>
